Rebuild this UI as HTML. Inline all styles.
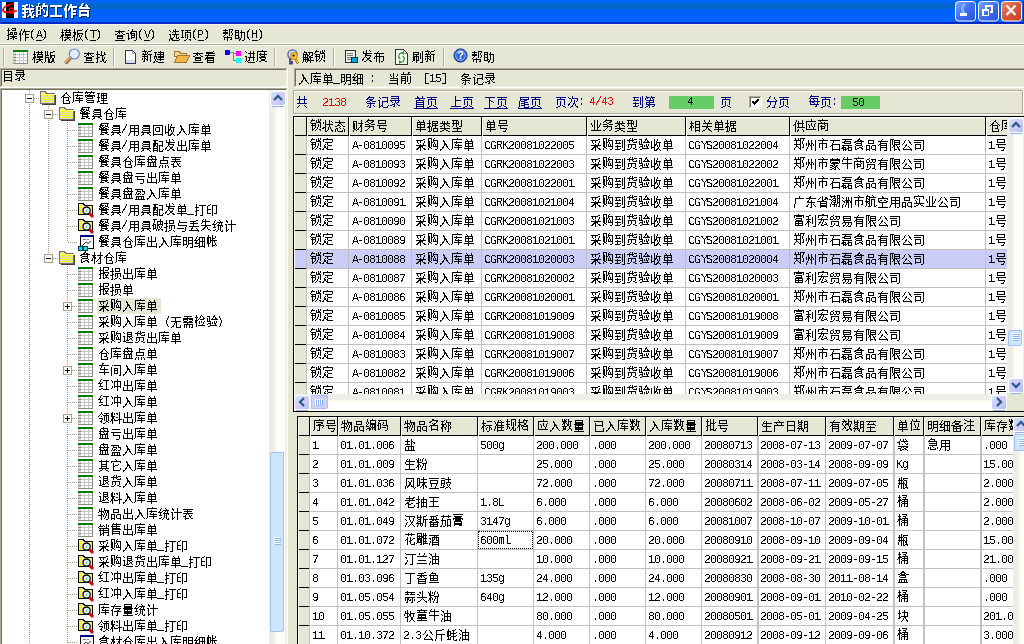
<!DOCTYPE html>
<html><head><meta charset="utf-8"><title>我的工作台</title>
<style>html,body{margin:0;padding:0;background:#ECE9D8;font-family:"Liberation Sans",sans-serif;overflow:hidden}
svg{display:block}</style></head><body>
<svg width="1024" height="644" viewBox="0 0 1024 644" shape-rendering="crispEdges">
<defs>
<linearGradient id="sbBtn" x1="0" y1="0" x2="1" y2="1">
 <stop offset="0" stop-color="#C8E6FE"/><stop offset="0.45" stop-color="#D2CDFB"/>
 <stop offset="0.6" stop-color="#CFCBF8"/><stop offset="1" stop-color="#A6C7EF"/>
</linearGradient>
<linearGradient id="sbThumbV" x1="0" y1="0" x2="1" y2="0">
 <stop offset="0" stop-color="#C9E3FD"/><stop offset="1" stop-color="#D1E9FE"/>
</linearGradient>
<linearGradient id="tbMin" x1="0" y1="0" x2="1" y2="1">
 <stop offset="0" stop-color="#7BA7FF"/><stop offset="0.5" stop-color="#3F6EF5"/><stop offset="1" stop-color="#2450E0"/>
</linearGradient>
<linearGradient id="tbClose" x1="0" y1="0" x2="1" y2="1">
 <stop offset="0" stop-color="#F08A6E"/><stop offset="0.5" stop-color="#D9563A"/><stop offset="1" stop-color="#C4401F"/>
</linearGradient>
<pattern id="chk" width="2" height="2" patternUnits="userSpaceOnUse">
 <rect width="2" height="2" fill="#FFFF00"/><rect width="1" height="1" fill="#D8D8C0"/><rect x="1" y="1" width="1" height="1" fill="#D8D8C0"/>
</pattern>
<clipPath id="cUp"><rect x="293" y="116" width="714" height="278"/></clipPath><clipPath id="cLo"><rect x="297" y="416" width="716" height="230"/></clipPath><path id="g0" d="M5 -12h2v1h-2zM10 -11h2v1h-2zM1 -11h6v1h-6zM1 -10h4v1h-4zM11 -10h2v1h-2zM8 -12h1v4h-1zM3 -9h2v1h-2zM1 -8h12v2h-12zM3 -6h2v2h-2zM8 -6h2v2h-2zM11 -5h2v1h-2zM6 -5h1v1h-1zM8 -4h4v1h-4zM1 -4h6v1h-6zM9 -3h2v1h-2zM1 -3h4v1h-4zM8 -2h3v1h-3zM12 -2h1v1h-1zM3 -2h2v2h-2zM12 -1h2v1h-2zM7 -1h4v1h-4zM1 0h4v1h-4zM6 0h2v1h-2zM10 0h3v2h-3zM2 1h3v1h-3z"/><path id="g1" d="M3 -13h2v1h-2zM8 -13h2v2h-2zM3 -12h1v2h-1zM7 -11h6v2h-6zM1 -10h5v1h-5zM5 -9h1v1h-1zM7 -9h1v1h-1zM5 -8h3v1h-3zM1 -9h2v3h-2zM5 -7h1v1h-1zM8 -7h1v1h-1zM12 -9h1v4h-1zM1 -6h5v1h-5zM8 -6h2v1h-2zM9 -5h1v2h-1zM5 -5h1v3h-1zM1 -5h2v3h-2zM11 -5h2v4h-2zM1 -2h5v1h-5zM8 -1h5v1h-5zM1 -1h2v2h-2zM9 0h3v1h-3z"/><path id="g2" d="M1 -11h12v2h-12zM6 -9h2v8h-2zM1 -1h12v2h-12z"/><path id="g3" d="M3 -12h2v2h-2zM7 -12h2v2h-2zM6 -10h8v2h-8zM2 -10h2v2h-2zM5 -8h2v2h-2zM8 -8h2v2h-2zM1 -8h3v3h-3zM5 -6h1v1h-1zM8 -6h5v2h-5zM8 -4h2v1h-2zM8 -3h5v2h-5zM2 -5h2v7h-2zM8 -1h2v3h-2z"/><path id="g4" d="M5 -13h2v1h-2zM9 -12h1v1h-1zM4 -12h2v2h-2zM8 -11h3v1h-3zM3 -10h2v1h-2zM9 -10h2v1h-2zM2 -9h10v1h-10zM2 -8h11v1h-11zM2 -6h10v2h-10zM10 -4h2v2h-2zM2 -4h2v2h-2zM2 -2h10v2h-10zM10 0h2v1h-2zM2 0h2v1h-2z"/><path id="g5" d="M6 -12h4v1h-4zM2 -12h1v2h-1zM5 -11h1v1h-1zM9 -11h1v1h-1zM6 -10h4v1h-4zM1 -10h3v1h-3zM8 -8h3v1h-3zM4 -8h3v1h-3zM2 -9h1v3h-1zM8 -7h1v1h-1zM4 -7h1v1h-1zM6 -7h1v1h-1zM10 -7h1v1h-1zM8 -6h3v1h-3zM2 -6h5v1h-5zM1 -5h2v1h-2zM7 -5h1v1h-1zM4 -4h7v1h-7zM6 -3h3v1h-3zM2 -4h1v3h-1zM9 -2h2v1h-2zM4 -2h2v1h-2zM7 -2h1v2h-1zM1 -1h2v1h-2z"/><path id="g6" d="M3 -11h1v2h-1zM6 -11h1v2h-1zM5 -9h7v1h-7zM2 -9h1v2h-1zM5 -8h1v1h-1zM7 -8h1v2h-1zM1 -7h2v2h-2zM4 -7h1v2h-1zM7 -6h4v1h-4zM7 -5h1v2h-1zM7 -3h4v1h-4zM2 -5h1v6h-1zM7 -2h1v3h-1z"/><path id="g7" d="M3 -9h1v1h-1zM2 -8h1v1h-1zM1 -7h2v1h-2zM1 -6h1v5h-1zM1 -1h2v1h-2zM2 0h1v1h-1zM3 1h1v1h-1z"/><path id="g8" d="M3 -8h1v1h-1zM2 -7h1v3h-1zM4 -7h1v3h-1zM1 -4h1v1h-1zM5 -4h1v1h-1zM1 -3h5v1h-5zM1 -2h1v1h-1zM5 -2h1v1h-1zM0 -1h1v1h-1zM6 -1h1v1h-1z"/><path id="g9" d="M1 -9h1v1h-1zM2 -8h1v1h-1zM2 -7h2v1h-2zM3 -6h1v5h-1zM2 -1h2v1h-2zM2 0h1v1h-1zM1 1h1v1h-1z"/><path id="g10" d="M9 -11h1v1h-1zM6 -11h1v1h-1zM4 -10h7v1h-7zM2 -11h1v3h-1zM9 -9h1v1h-1zM6 -9h1v1h-1zM5 -8h6v1h-6zM1 -8h3v1h-3zM5 -7h1v1h-1zM2 -7h1v1h-1zM10 -7h1v1h-1zM2 -6h2v1h-2zM5 -6h6v2h-6zM1 -5h3v1h-3zM1 -4h2v1h-2zM7 -4h1v1h-1zM0 -3h1v1h-1zM4 -3h7v1h-7zM7 -2h2v1h-2zM9 -1h1v1h-1zM5 -1h2v1h-2zM2 -3h1v4h-1zM4 0h2v1h-2zM10 0h1v1h-1z"/><path id="g11" d="M10 -11h1v1h-1zM5 -10h5v1h-5zM2 -11h1v3h-1zM5 -9h1v2h-1zM1 -8h3v1h-3zM5 -7h6v1h-6zM2 -7h2v2h-2zM5 -6h2v1h-2zM10 -6h1v1h-1zM1 -5h2v2h-2zM7 -5h1v2h-1zM9 -5h1v2h-1zM5 -5h1v3h-1zM0 -3h1v1h-1zM8 -3h1v2h-1zM9 -1h1v1h-1zM6 -1h2v1h-2zM2 -3h1v4h-1zM4 -2h1v3h-1zM6 0h1v1h-1zM10 0h1v1h-1z"/><path id="g12" d="M0 -8h7v1h-7zM3 -7h1v7h-1z"/><path id="g13" d="M5 -10h1v1h-1zM1 -9h10v1h-10zM7 -8h1v1h-1zM4 -8h2v1h-2zM5 -7h1v1h-1zM3 -7h1v1h-1zM8 -7h1v1h-1zM1 -6h2v1h-2zM9 -6h2v1h-2zM3 -5h6v2h-6zM3 -3h1v1h-1zM8 -3h1v1h-1zM3 -2h6v1h-6zM1 0h10v1h-10z"/><path id="g14" d="M6 -11h1v2h-1zM2 -10h1v1h-1zM5 -9h6v1h-6zM4 -8h2v1h-2zM4 -7h5v1h-5zM0 -7h3v1h-3zM5 -6h1v1h-1zM8 -6h1v1h-1zM5 -5h4v1h-4zM5 -4h1v1h-1zM8 -4h1v1h-1zM2 -6h1v4h-1zM5 -3h4v1h-4zM5 -2h1v1h-1zM2 -2h2v1h-2zM10 -8h1v8h-1zM2 -1h1v1h-1zM8 0h2v1h-2z"/><path id="g15" d="M0 -8h1v1h-1zM6 -8h1v1h-1zM1 -7h1v3h-1zM5 -7h1v3h-1zM2 -4h1v3h-1zM4 -4h1v3h-1zM3 -1h1v1h-1z"/><path id="g16" d="M7 -11h1v2h-1zM1 -10h1v1h-1zM5 -10h1v1h-1zM5 -9h6v1h-6zM2 -9h1v1h-1zM4 -8h1v1h-1zM7 -8h1v2h-1zM1 -6h2v1h-2zM4 -6h7v1h-7zM6 -5h1v2h-1zM8 -5h1v3h-1zM2 -5h1v3h-1zM5 -3h1v1h-1zM10 -3h1v1h-1zM8 -2h3v1h-3zM2 -2h3v1h-3zM3 -1h2v1h-2zM11 -1h1v1h-1zM1 -1h1v2h-1zM4 0h7v1h-7z"/><path id="g17" d="M5 -10h6v1h-6zM1 -10h3v1h-3zM7 -9h1v1h-1zM5 -8h6v1h-6zM2 -9h1v6h-1zM5 -7h1v5h-1zM10 -7h1v5h-1zM1 -3h3v1h-3zM7 -6h1v5h-1zM9 -1h2v1h-2zM6 -1h1v1h-1zM4 0h2v1h-2zM10 0h1v1h-1z"/><path id="g18" d="M0 -8h4v1h-4zM0 -7h1v3h-1zM4 -7h1v3h-1zM0 -4h4v1h-4zM0 -3h1v3h-1z"/><path id="g19" d="M3 -11h1v1h-1zM7 -11h4v1h-4zM1 -10h5v1h-5zM10 -10h1v1h-1zM3 -9h1v1h-1zM9 -9h1v2h-1zM1 -8h5v2h-5zM10 -7h1v2h-1zM3 -6h1v1h-1zM7 -10h1v6h-1zM9 -5h1v1h-1zM2 -5h1v1h-1zM1 -4h1v1h-1zM5 -4h1v1h-1zM2 -3h8v1h-8zM9 -2h1v1h-1zM2 -2h1v2h-1zM8 -1h2v1h-2zM5 -2h1v3h-1z"/><path id="g20" d="M1 -10h4v1h-4zM7 -10h1v2h-1zM1 -9h1v1h-1zM4 -9h1v1h-1zM6 -8h5v1h-5zM1 -8h4v1h-4zM1 -7h1v2h-1zM4 -7h1v2h-1zM1 -5h4v1h-4zM4 -4h1v1h-1zM7 -7h1v5h-1zM1 -4h1v2h-1zM4 -3h2v1h-2zM1 -2h4v1h-4zM6 -2h1v1h-1zM10 -7h1v7h-1zM5 -1h2v1h-2zM5 0h1v1h-1zM8 0h2v1h-2z"/><path id="g21" d="M0 -8h1v3h-1zM4 -8h1v3h-1zM0 -5h5v1h-5zM0 -4h1v4h-1zM4 -4h1v4h-1z"/><path id="g22" d="M9 -11h2v1h-2zM6 -10h3v1h-3zM1 -11h1v4h-1zM3 -11h1v4h-1zM6 -9h1v2h-1zM6 -7h5v1h-5zM1 -7h4v1h-4zM1 -6h1v1h-1zM10 -6h1v2h-1zM6 -6h2v2h-2zM1 -5h4v1h-4zM4 -4h1v1h-1zM6 -4h1v1h-1zM8 -4h2v3h-2zM1 -4h1v4h-1zM4 -3h2v3h-2zM7 -1h3v1h-3zM4 0h4v1h-4zM0 0h1v1h-1zM10 0h1v1h-1z"/><path id="g23" d="M2 -11h1v3h-1zM9 -10h1v2h-1zM6 -11h1v4h-1zM9 -8h2v1h-2zM1 -8h4v1h-4zM5 -7h4v1h-4zM2 -7h1v2h-1zM2 -5h3v1h-3zM7 -6h1v3h-1zM9 -5h1v2h-1zM1 -4h2v1h-2zM7 -3h2v2h-2zM11 -2h1v1h-1zM2 -3h1v3h-1zM5 -1h2v1h-2zM8 -1h1v1h-1zM10 -1h1v1h-1zM1 0h2v1h-2zM9 0h2v1h-2z"/><path id="g24" d="M3 -12h1v1h-1zM10 -12h1v1h-1zM7 -11h3v1h-3zM1 -11h5v1h-5zM4 -10h1v2h-1zM6 -10h1v2h-1zM2 -9h1v1h-1zM1 -8h5v1h-5zM7 -8h4v1h-4zM3 -7h1v1h-1zM6 -7h1v1h-1zM1 -6h6v1h-6zM3 -5h1v1h-1zM6 -5h1v2h-1zM3 -4h2v1h-2zM1 -4h1v2h-1zM5 -3h2v1h-2zM3 -3h1v2h-1zM6 -2h1v1h-1zM9 -7h1v7h-1zM2 -1h2v1h-2z"/><path id="g25" d="M7 -11h1v1h-1zM5 -10h6v1h-6zM1 -10h3v1h-3zM7 -9h1v1h-1zM10 -9h1v1h-1zM4 -8h7v1h-7zM2 -9h1v3h-1zM7 -7h1v1h-1zM10 -7h1v1h-1zM1 -6h3v1h-3zM5 -6h6v2h-6zM1 -5h1v2h-1zM3 -5h1v2h-1zM7 -4h1v1h-1zM4 -3h7v1h-7zM2 -3h1v2h-1zM7 -2h1v1h-1zM1 -1h1v1h-1zM3 -1h2v1h-2zM5 0h6v1h-6zM0 0h2v1h-2z"/><path id="g26" d="M9 -11h1v1h-1zM2 -10h7v1h-7zM2 -9h9v1h-9zM4 -8h1v1h-1zM1 -7h10v1h-10zM3 -6h1v1h-1zM2 -5h8v1h-8zM1 -4h9v1h-9zM1 -3h1v1h-1zM3 -3h1v1h-1zM9 -3h1v1h-1zM3 -2h7v1h-7zM3 -1h1v1h-1zM9 -1h1v1h-1zM3 0h7v1h-7z"/><path id="g27" d="M1 -11h1v1h-1zM9 -11h1v2h-1zM6 -11h1v2h-1zM2 -10h1v1h-1zM4 -9h7v1h-7zM9 -8h1v3h-1zM6 -8h1v3h-1zM1 -6h2v1h-2zM4 -5h7v1h-7zM5 -4h1v2h-1zM2 -5h1v4h-1zM9 -4h1v3h-1zM4 -2h2v1h-2zM1 -1h1v1h-1zM3 -1h1v1h-1zM4 0h7v1h-7z"/><path id="g28" d="M6 -12h1v1h-1zM1 -11h10v1h-10zM8 -10h1v2h-1zM4 -9h1v1h-1zM3 -8h8v1h-8zM4 -7h1v1h-1zM8 -7h1v1h-1zM5 -6h4v1h-4zM3 -5h7v1h-7zM9 -4h1v1h-1zM4 -4h1v1h-1zM1 -10h1v9h-1zM5 -3h4v2h-4zM3 -1h2v1h-2zM0 -1h1v1h-1zM9 -1h2v1h-2z"/><path id="g29" d="M2 -11h1v1h-1zM6 -10h5v1h-5zM2 -10h3v1h-3zM1 -9h1v1h-1zM4 -9h1v1h-1zM7 -9h1v2h-1zM10 -9h1v2h-1zM1 -8h5v1h-5zM5 -7h2v1h-2zM9 -7h2v1h-2zM1 -7h1v2h-1zM3 -7h1v2h-1zM5 -6h1v1h-1zM7 -6h2v1h-2zM1 -5h5v1h-5zM7 -5h4v1h-4zM1 -4h1v1h-1zM3 -4h1v1h-1zM5 -4h2v1h-2zM8 -4h1v2h-1zM1 -3h6v1h-6zM5 -2h7v1h-7zM1 -2h1v2h-1zM3 -2h1v2h-1zM5 -1h1v1h-1zM8 -1h1v2h-1zM0 0h1v1h-1zM4 0h1v1h-1z"/><path id="g30" d="M2 -12h1v1h-1zM8 -12h1v2h-1zM10 -12h1v2h-1zM1 -11h4v1h-4zM6 -11h1v2h-1zM1 -10h1v1h-1zM8 -10h2v1h-2zM0 -9h1v1h-1zM6 -9h5v1h-5zM1 -8h5v1h-5zM5 -7h1v1h-1zM2 -7h1v1h-1zM1 -6h5v1h-5zM8 -7h1v3h-1zM10 -8h1v5h-1zM5 -5h1v2h-1zM2 -5h1v3h-1zM7 -4h1v2h-1zM4 -3h1v1h-1zM6 -2h1v1h-1zM9 -2h2v1h-2zM2 -2h2v1h-2zM5 -1h1v1h-1zM2 -1h1v1h-1zM10 -1h1v1h-1z"/><path id="g31" d="M8 -12h1v1h-1zM9 -11h1v1h-1zM5 -12h1v3h-1zM2 -11h1v2h-1zM2 -9h9v1h-9zM4 -8h2v1h-2zM4 -7h6v1h-6zM9 -6h1v1h-1zM4 -6h1v1h-1zM5 -5h1v1h-1zM3 -5h1v1h-1zM8 -5h1v1h-1zM6 -4h3v1h-3zM2 -4h1v1h-1zM1 -3h2v1h-2zM6 -3h2v1h-2zM1 -2h1v1h-1zM5 -2h1v1h-1zM8 -2h2v1h-2zM3 -1h2v1h-2zM9 -1h2v1h-2z"/><path id="g32" d="M5 -11h1v1h-1zM4 -10h1v1h-1zM1 -9h10v1h-10zM3 -8h1v2h-1zM6 -8h1v2h-1zM2 -6h9v1h-9zM1 -5h1v2h-1zM10 -5h1v4h-1zM3 -5h1v5h-1zM8 -1h2v1h-2zM6 -5h1v6h-1z"/><path id="g33" d="M1 -10h6v1h-6zM1 -9h1v1h-1zM6 -9h1v1h-1zM1 -8h6v1h-6zM1 -7h1v1h-1zM4 -7h1v1h-1zM1 -6h6v1h-6zM8 -9h1v6h-1zM4 -5h1v3h-1zM6 -5h1v3h-1zM1 -5h2v4h-2zM4 -2h3v1h-3zM10 -11h1v11h-1zM0 -1h1v1h-1zM4 -1h1v2h-1zM8 0h3v1h-3z"/><path id="g34" d="M2 -10h8v1h-8zM9 -9h1v2h-1zM2 -9h1v2h-1zM2 -7h8v1h-8zM9 -6h1v2h-1zM2 -6h1v2h-1zM2 -4h8v1h-8zM9 -3h1v2h-1zM2 -3h1v2h-1zM2 -1h8v1h-8zM9 0h1v1h-1zM2 0h1v1h-1z"/><path id="g35" d="M2 -11h8v1h-8zM9 -10h1v1h-1zM2 -9h8v1h-8zM9 -8h1v1h-1zM1 -7h10v1h-10zM9 -6h1v1h-1zM2 -6h1v1h-1zM6 -6h1v2h-1zM3 -5h1v1h-1zM8 -5h2v1h-2zM5 -4h1v1h-1zM7 -4h1v1h-1zM3 -3h3v1h-3zM8 -3h1v1h-1zM5 -2h1v1h-1zM1 -2h2v1h-2zM9 -2h2v1h-2zM4 -1h2v1h-2z"/><path id="g36" d="M6 -11h1v1h-1zM5 -10h2v1h-2zM7 -9h1v1h-1zM4 -9h1v1h-1zM3 -8h2v1h-2zM8 -8h1v1h-1zM9 -7h1v1h-1zM2 -7h2v1h-2zM1 -6h1v1h-1zM3 -6h6v1h-6zM10 -6h1v1h-1zM8 -5h1v2h-1zM6 -3h3v1h-3zM3 -5h1v5h-1zM9 -2h1v2h-1zM3 0h7v1h-7z"/><path id="g37" d="M6 -12h1v1h-1zM1 -11h10v1h-10zM5 -9h1v1h-1zM3 -8h8v1h-8zM5 -7h1v1h-1zM7 -6h1v1h-1zM4 -6h1v1h-1zM4 -5h7v1h-7zM7 -4h1v1h-1zM3 -3h8v1h-8zM1 -10h1v9h-1zM7 -2h1v2h-1zM0 -1h1v1h-1z"/><path id="g38" d="M7 -12h1v1h-1zM2 -12h1v1h-1zM1 -11h10v1h-10zM1 -10h1v1h-1zM3 -10h1v1h-1zM9 -10h1v1h-1zM6 -10h1v1h-1zM5 -9h1v1h-1zM1 -8h10v1h-10zM1 -7h1v1h-1zM3 -7h6v1h-6zM10 -7h1v1h-1zM2 -6h1v1h-1zM8 -6h1v1h-1zM3 -5h6v1h-6zM2 -4h1v1h-1zM3 -3h7v1h-7zM9 -2h1v1h-1zM2 -2h1v1h-1zM3 -1h7v1h-7z"/><path id="g39" d="M5 -10h6v1h-6zM1 -10h3v1h-3zM5 -9h1v1h-1zM7 -9h1v1h-1zM10 -9h1v1h-1zM5 -8h6v1h-6zM2 -9h1v3h-1zM5 -7h1v2h-1zM7 -7h1v2h-1zM10 -7h1v2h-1zM1 -6h3v1h-3zM5 -5h6v1h-6zM7 -4h1v1h-1zM2 -5h1v3h-1zM5 -3h6v1h-6zM1 -2h3v1h-3zM7 -2h1v2h-1zM1 -1h1v1h-1zM4 0h8v1h-8z"/><path id="g40" d="M3 -12h8v1h-8zM2 -11h2v1h-2zM9 -11h1v2h-1zM2 -10h4v1h-4zM7 -10h1v1h-1zM1 -9h2v1h-2zM4 -9h1v1h-1zM7 -9h3v1h-3zM5 -8h2v1h-2zM2 -8h2v1h-2zM10 -8h1v1h-1zM1 -7h1v1h-1zM3 -7h3v1h-3zM7 -7h2v1h-2zM1 -6h10v1h-10zM3 -5h6v1h-6zM3 -4h1v1h-1zM8 -4h1v1h-1zM3 -3h7v1h-7zM3 -2h1v1h-1zM7 -2h2v1h-2zM2 -1h4v1h-4zM9 -1h2v1h-2z"/><path id="g41" d="M3 -10h7v2h-7zM9 -8h1v1h-1zM2 -8h1v1h-1zM3 -7h7v1h-7zM9 -6h1v1h-1zM2 -6h1v1h-1zM3 -5h7v1h-7zM9 -4h1v1h-1zM2 -4h1v1h-1zM1 -3h10v1h-10zM3 -2h1v1h-1zM7 -2h2v1h-2zM9 -1h1v1h-1zM2 -1h2v1h-2zM1 0h1v1h-1zM10 0h1v1h-1z"/><path id="g42" d="M4 -9h1v2h-1zM3 -7h1v2h-1zM2 -5h1v1h-1zM1 -4h2v1h-2zM1 -3h1v1h-1zM0 -2h1v2h-1z"/><path id="g43" d="M2 -10h9v1h-9zM2 -9h1v2h-1zM6 -9h1v2h-1zM10 -9h1v2h-1zM2 -7h9v1h-9zM2 -6h1v2h-1zM6 -6h1v2h-1zM10 -6h1v2h-1zM2 -4h9v1h-9zM2 -3h1v1h-1zM10 -3h1v3h-1zM1 -2h1v2h-1zM6 -3h1v4h-1zM0 0h1v1h-1zM8 0h2v1h-2z"/><path id="g44" d="M1 -10h10v1h-10zM4 -8h4v1h-4zM3 -7h1v3h-1zM7 -7h1v3h-1zM4 -4h4v1h-4zM1 -9h1v8h-1zM10 -9h1v8h-1zM1 -1h10v1h-10zM1 0h1v1h-1zM10 0h1v1h-1z"/><path id="g45" d="M7 -11h1v2h-1zM6 -9h1v1h-1zM6 -8h5v1h-5zM4 -11h1v5h-1zM6 -7h1v1h-1zM4 -6h3v1h-3zM4 -5h2v1h-2zM1 -9h1v6h-1zM9 -7h1v4h-1zM7 -5h1v2h-1zM4 -4h1v1h-1zM1 -3h4v1h-4zM8 -3h1v1h-1zM1 -2h1v1h-1zM7 -2h2v1h-2zM4 -2h1v2h-1zM9 -1h1v1h-1zM6 -1h2v1h-2zM10 0h1v1h-1zM4 0h3v1h-3z"/><path id="g46" d="M4 -10h1v1h-1zM4 -9h2v1h-2zM5 -8h1v1h-1zM5 -7h2v1h-2zM5 -6h3v1h-3zM5 -5h1v1h-1zM7 -5h1v1h-1zM4 -4h1v1h-1zM7 -4h2v1h-2zM3 -3h2v1h-2zM8 -3h1v1h-1zM3 -2h1v1h-1zM9 -2h1v1h-1zM1 -1h2v1h-2zM10 -1h1v1h-1zM1 0h1v1h-1z"/><path id="g47" d="M3 -11h1v1h-1zM8 -11h1v2h-1zM4 -10h1v1h-1zM2 -9h8v1h-8zM5 -8h1v1h-1zM9 -8h1v1h-1zM2 -8h1v1h-1zM2 -7h8v1h-8zM5 -6h1v2h-1zM9 -6h1v2h-1zM2 -6h1v2h-1zM2 -4h8v1h-8zM5 -3h1v1h-1zM1 -2h10v1h-10zM5 -1h1v2h-1z"/><path id="g48" d="M1 -11h5v1h-5zM7 -10h4v1h-4zM2 -10h2v2h-2zM1 -8h5v1h-5zM10 -9h1v3h-1zM5 -7h1v2h-1zM1 -7h3v2h-3zM7 -6h4v1h-4zM1 -5h2v1h-2zM4 -5h2v1h-2zM10 -5h1v1h-1zM1 -4h1v1h-1zM5 -4h1v1h-1zM1 -3h5v1h-5zM1 -2h1v1h-1zM5 -2h1v1h-1zM11 -2h1v1h-1zM7 -5h1v5h-1zM1 -1h5v1h-5zM10 -1h1v1h-1zM1 0h1v1h-1zM5 0h1v1h-1zM7 0h4v1h-4z"/><path id="g49" d="M5 -11h1v5h-1zM9 -10h1v4h-1zM2 -10h1v4h-1zM2 -6h8v1h-8zM5 -5h1v4h-1zM1 -4h1v3h-1zM10 -4h1v3h-1zM1 -1h10v1h-10zM10 0h1v1h-1z"/><path id="g50" d="M5 -12h1v1h-1zM3 -11h7v1h-7zM5 -10h1v1h-1zM9 -10h1v2h-1zM2 -10h1v2h-1zM6 -9h1v1h-1zM1 -8h10v1h-10zM5 -7h1v1h-1zM9 -7h1v1h-1zM2 -7h1v1h-1zM1 -6h2v1h-2zM6 -6h1v1h-1zM8 -6h2v1h-2zM2 -5h8v1h-8zM9 -4h1v3h-1zM7 -4h1v3h-1zM2 -4h1v3h-1zM4 -4h1v3h-1zM1 -1h10v1h-10z"/><path id="g51" d="M5 -11h1v1h-1zM5 -10h6v1h-6zM5 -9h1v2h-1zM2 -7h8v1h-8zM9 -6h1v2h-1zM2 -6h1v2h-1zM2 -4h8v1h-8zM9 -2h1v1h-1zM2 -2h1v1h-1zM7 -2h1v3h-1zM4 -2h1v3h-1zM1 -1h1v2h-1zM10 -1h1v2h-1z"/><path id="g52" d="M1 -10h10v1h-10zM5 -9h1v1h-1zM2 -8h8v1h-8zM5 -7h1v1h-1zM1 -6h10v1h-10zM4 -5h1v1h-1zM6 -5h1v1h-1zM3 -4h1v1h-1zM7 -4h1v1h-1zM9 -4h1v1h-1zM1 -3h3v1h-3zM7 -3h2v1h-2zM3 -2h1v1h-1zM8 -2h1v1h-1zM9 -1h2v1h-2zM3 -1h4v1h-4zM3 0h1v1h-1z"/><path id="g53" d="M2 -10h8v1h-8zM1 -7h10v1h-10zM3 -6h1v2h-1zM3 -4h7v1h-7zM9 -3h1v3h-1zM6 0h3v1h-3z"/><path id="g54" d="M1 -10h8v1h-8zM3 -9h1v1h-1zM8 -9h1v1h-1zM8 -8h3v1h-3zM3 -8h4v1h-4zM6 -7h1v1h-1zM2 -7h1v2h-1zM10 -7h1v2h-1zM4 -6h2v1h-2zM1 -5h1v1h-1zM3 -5h2v1h-2zM6 -5h1v1h-1zM8 -5h2v1h-2zM2 -3h8v1h-8zM9 -2h1v2h-1zM7 -2h1v2h-1zM2 -2h1v2h-1zM4 -2h1v2h-1zM1 0h10v1h-10z"/><path id="g55" d="M-1 1h7v1h-7z"/><path id="g56" d="M5 -10h7v1h-7zM2 -11h1v3h-1zM1 -8h4v1h-4zM2 -7h1v2h-1zM2 -5h3v1h-3zM1 -4h2v1h-2zM8 -9h1v9h-1zM2 -3h1v3h-1zM1 0h2v1h-2zM6 0h3v1h-3z"/><path id="g57" d="M4 -11h1v1h-1zM6 -10h5v1h-5zM2 -10h2v1h-2zM1 -9h1v3h-1zM1 -6h4v1h-4zM10 -9h1v7h-1zM1 -5h1v3h-1zM8 -2h3v1h-3zM1 -2h4v1h-4zM6 -9h1v10h-1z"/><path id="g58" d="M1 -12h4v1h-4zM8 -12h1v2h-1zM5 -10h6v1h-6zM2 -11h1v3h-1zM5 -9h1v2h-1zM8 -9h1v2h-1zM10 -9h1v2h-1zM1 -8h1v1h-1zM5 -7h6v1h-6zM1 -7h3v1h-3zM5 -6h2v1h-2zM0 -6h2v1h-2zM10 -6h1v1h-1zM3 -6h1v3h-1zM9 -5h1v2h-1zM1 -5h1v2h-1zM7 -5h1v2h-1zM5 -5h1v3h-1zM1 -3h3v1h-3zM8 -3h1v1h-1zM1 -2h1v1h-1zM9 -2h2v1h-2zM6 -2h2v1h-2zM4 -2h1v2h-1zM6 -1h1v1h-1zM10 -1h1v1h-1z"/><path id="g59" d="M5 -11h5v1h-5zM2 -11h1v3h-1zM5 -10h1v2h-1zM9 -10h1v2h-1zM5 -8h5v1h-5zM0 -8h4v1h-4zM2 -7h1v2h-1zM5 -6h6v1h-6zM2 -5h2v1h-2zM0 -4h3v1h-3zM5 -5h1v3h-1zM10 -5h1v3h-1zM7 -5h1v4h-1zM2 -3h1v3h-1zM9 -1h1v1h-1zM5 -1h2v1h-2zM1 0h2v1h-2zM4 0h1v1h-1zM10 0h1v1h-1z"/><path id="g60" d="M3 -11h1v2h-1zM3 -9h8v1h-8zM2 -8h1v2h-1zM2 -6h9v1h-9zM10 -5h1v1h-1zM1 -3h7v1h-7zM9 -4h1v4h-1zM6 0h3v1h-3z"/><path id="g61" d="M8 -11h2v1h-2zM2 -10h6v1h-6zM5 -9h1v1h-1zM2 -8h8v1h-8zM5 -7h1v2h-1zM1 -5h10v1h-10zM4 -4h1v1h-1zM3 -3h2v1h-2zM8 -3h1v1h-1zM3 -2h1v1h-1zM9 -2h1v1h-1zM1 -1h10v1h-10zM10 0h1v1h-1z"/><path id="g62" d="M3 -12h1v1h-1zM5 -12h1v2h-1zM2 -11h1v1h-1zM2 -10h8v1h-8zM2 -9h1v1h-1zM1 -8h1v1h-1zM5 -9h1v3h-1zM1 -6h10v1h-10zM5 -5h2v1h-2zM4 -4h2v1h-2zM7 -4h1v2h-1zM3 -3h2v1h-2zM2 -2h2v1h-2zM8 -2h2v1h-2zM1 -1h1v1h-1zM10 -1h1v1h-1z"/><path id="g63" d="M3 -11h1v1h-1zM7 -11h1v1h-1zM8 -10h1v1h-1zM2 -10h1v2h-1zM5 -9h6v1h-6zM1 -8h1v1h-1zM7 -8h1v1h-1zM4 -8h1v1h-1zM9 -8h1v2h-1zM6 -7h1v1h-1zM0 -7h4v1h-4zM5 -6h6v1h-6zM2 -6h1v2h-1zM10 -5h1v1h-1zM1 -4h3v1h-3zM6 -5h1v4h-1zM3 -2h1v1h-1zM8 -5h1v5h-1zM5 -1h1v1h-1zM1 -1h2v1h-2zM10 -1h1v1h-1zM9 0h2v1h-2zM4 0h1v1h-1z"/><path id="g64" d="M2 -11h1v1h-1zM2 -10h2v1h-2zM3 -9h1v1h-1zM7 -11h1v4h-1zM1 -7h2v1h-2zM4 -7h8v1h-8zM2 -6h1v5h-1zM4 -2h1v1h-1zM2 -1h2v1h-2zM7 -6h1v7h-1zM2 0h1v1h-1z"/><path id="g65" d="M6 -10h5v1h-5zM1 -10h4v1h-4zM1 -9h1v2h-1zM4 -9h1v2h-1zM6 -9h1v2h-1zM10 -9h1v2h-1zM6 -7h5v1h-5zM1 -7h4v1h-4zM6 -6h1v2h-1zM10 -6h1v2h-1zM1 -6h1v3h-1zM4 -6h1v3h-1zM6 -4h5v1h-5zM1 -3h4v1h-4zM6 -3h1v1h-1zM1 -2h1v1h-1zM10 -3h1v3h-1zM5 -2h1v2h-1zM8 0h3v1h-3zM4 0h1v1h-1z"/><path id="g66" d="M3 -11h1v1h-1zM5 -10h6v1h-6zM2 -10h1v2h-1zM5 -9h1v1h-1zM1 -8h1v1h-1zM4 -8h2v1h-2zM8 -9h1v3h-1zM10 -9h1v3h-1zM5 -7h1v1h-1zM0 -7h4v1h-4zM5 -6h6v1h-6zM2 -6h1v1h-1zM5 -5h1v1h-1zM1 -5h2v1h-2zM1 -4h5v1h-5zM5 -3h1v1h-1zM8 -5h1v4h-1zM10 -5h1v4h-1zM4 -2h2v1h-2zM5 -1h6v1h-6zM0 -1h4v1h-4zM5 0h1v1h-1zM10 0h1v1h-1z"/><path id="g67" d="M2 -12h1v2h-1zM6 -12h1v3h-1zM9 -11h1v2h-1zM1 -10h4v1h-4zM6 -9h3v1h-3zM4 -9h1v2h-1zM6 -8h1v1h-1zM4 -7h7v1h-7zM1 -9h2v5h-2zM8 -6h1v2h-1zM4 -6h1v2h-1zM1 -4h3v1h-3zM6 -6h1v4h-1zM9 -4h1v2h-1zM6 -2h3v1h-3zM10 -2h1v1h-1zM2 -3h1v3h-1zM6 -1h1v1h-1z"/><path id="g68" d="M6 -12h1v1h-1zM5 -11h2v1h-2zM7 -10h2v1h-2zM4 -10h2v1h-2zM2 -9h9v1h-9zM1 -8h2v1h-2zM8 -8h1v1h-1zM3 -7h6v1h-6zM2 -6h1v1h-1zM8 -6h1v1h-1zM3 -5h6v1h-6zM9 -4h1v1h-1zM6 -3h3v1h-3zM2 -4h1v3h-1zM4 -2h2v1h-2zM8 -2h2v1h-2zM9 -1h1v1h-1zM2 -1h2v1h-2z"/><path id="g69" d="M3 -11h1v3h-1zM9 -11h1v3h-1zM1 -8h4v1h-4zM6 -8h6v1h-6zM9 -7h1v1h-1zM2 -7h2v1h-2zM2 -6h3v1h-3zM8 -6h2v2h-2zM3 -5h2v1h-2zM1 -5h1v2h-1zM7 -4h1v1h-1zM0 -3h2v1h-2zM6 -3h1v1h-1zM5 -2h1v1h-1zM9 -4h1v4h-1zM3 -4h1v5h-1zM7 0h3v1h-3z"/><path id="g70" d="M5 -12h6v1h-6zM2 -12h1v3h-1zM5 -11h1v2h-1zM10 -11h1v2h-1zM7 -9h3v1h-3zM1 -9h5v1h-5zM5 -8h1v1h-1zM2 -8h1v2h-1zM5 -7h6v1h-6zM2 -6h5v1h-5zM10 -6h1v1h-1zM1 -5h2v1h-2zM7 -5h1v1h-1zM9 -5h1v1h-1zM7 -4h3v1h-3zM8 -3h1v1h-1zM5 -5h1v4h-1zM2 -4h1v3h-1zM7 -2h3v1h-3zM1 -1h2v1h-2zM5 -1h2v1h-2zM10 -1h1v1h-1z"/><path id="g71" d="M8 -11h2v1h-2zM1 -10h7v1h-7zM5 -9h1v2h-1zM9 -9h1v2h-1zM2 -9h1v2h-1zM3 -7h1v1h-1zM8 -7h1v2h-1zM5 -6h1v1h-1zM1 -5h10v1h-10zM4 -4h4v1h-4zM7 -3h1v1h-1zM3 -3h3v1h-3zM2 -2h2v1h-2zM8 -2h2v1h-2zM1 -1h2v1h-2zM9 -1h2v1h-2zM5 -2h1v3h-1z"/><path id="g72" d="M7 -12h1v1h-1zM1 -12h4v1h-4zM6 -11h1v1h-1zM1 -11h1v2h-1zM6 -10h5v1h-5zM4 -11h1v3h-1zM6 -9h1v1h-1zM4 -8h2v1h-2zM7 -8h1v2h-1zM10 -9h1v5h-1zM8 -6h1v2h-1zM6 -6h1v2h-1zM1 -9h2v6h-2zM4 -7h1v4h-1zM6 -4h5v1h-5zM2 -3h2v1h-2zM10 -3h1v2h-1zM4 -2h1v1h-1zM1 -2h1v2h-1zM8 -1h2v1h-2z"/><path id="g73" d="M10 -11h1v2h-1zM9 -9h1v2h-1zM8 -7h1v4h-1zM9 -3h1v2h-1zM10 -1h1v1h-1z"/><path id="g74" d="M1 -10h10v1h-10zM5 -9h1v3h-1zM1 -6h10v1h-10zM5 -5h2v1h-2zM4 -4h1v2h-1zM3 -2h1v1h-1zM6 -4h1v4h-1zM10 -2h1v2h-1zM2 -1h2v1h-2zM1 0h1v1h-1zM6 0h5v1h-5z"/><path id="g75" d="M2 -11h8v1h-8zM5 -10h1v1h-1zM1 -9h10v1h-10zM1 -8h5v1h-5zM7 -8h4v1h-4zM1 -7h1v1h-1zM5 -7h1v1h-1zM10 -7h1v1h-1zM7 -6h3v1h-3zM2 -6h3v1h-3zM1 -5h10v1h-10zM5 -4h1v1h-1zM2 -3h9v1h-9zM10 -2h1v2h-1zM7 -2h1v3h-1zM2 -2h1v3h-1zM4 -2h1v3h-1zM9 0h2v1h-2z"/><path id="g76" d="M7 -12h1v1h-1zM2 -12h1v2h-1zM8 -11h1v1h-1zM6 -11h1v2h-1zM9 -10h1v1h-1zM1 -10h3v1h-3zM9 -9h2v1h-2zM5 -9h1v1h-1zM2 -9h1v2h-1zM6 -8h4v1h-4zM4 -8h1v1h-1zM1 -7h3v1h-3zM10 -6h1v1h-1zM1 -6h2v2h-2zM7 -6h1v2h-1zM5 -6h1v3h-1zM9 -5h1v2h-1zM8 -3h1v1h-1zM4 -2h7v1h-7zM2 -4h1v4h-1z"/><path id="g77" d="M8 -12h1v1h-1zM1 -11h3v1h-3zM7 -11h2v1h-2zM7 -10h1v1h-1zM9 -10h1v1h-1zM9 -9h2v1h-2zM6 -9h1v1h-1zM5 -8h7v1h-7zM3 -10h1v4h-1zM1 -9h1v3h-1zM1 -6h4v1h-4zM8 -6h1v2h-1zM10 -6h1v2h-1zM4 -5h1v1h-1zM6 -5h1v2h-1zM8 -4h2v1h-2zM2 -4h3v1h-3zM1 -3h1v1h-1zM9 -3h1v1h-1zM4 -3h1v1h-1zM4 -2h7v1h-7zM2 -1h2v1h-2z"/><path id="g78" d="M1 -11h1v2h-1zM2 -9h1v2h-1zM3 -7h1v3h-1zM2 -4h1v3h-1zM1 -1h1v1h-1z"/><path id="g79" d="M1 -11h1v1h-1zM5 -11h5v1h-5zM5 -10h1v1h-1zM9 -10h1v1h-1zM2 -10h1v1h-1zM5 -9h5v1h-5zM5 -8h1v1h-1zM9 -8h1v1h-1zM1 -7h2v1h-2zM5 -7h5v1h-5zM7 -6h1v1h-1zM10 -6h1v1h-1zM8 -5h2v1h-2zM5 -6h1v3h-1zM7 -4h1v1h-1zM9 -4h1v1h-1zM2 -6h1v4h-1zM10 -3h1v1h-1zM4 -3h3v1h-3zM1 -2h3v1h-3zM4 -1h7v1h-7z"/><path id="g80" d="M4 -12h1v1h-1zM6 -12h1v2h-1zM8 -11h3v1h-3zM3 -11h1v1h-1zM1 -10h7v1h-7zM6 -9h1v1h-1zM10 -9h1v1h-1zM3 -9h1v2h-1zM7 -8h4v1h-4zM2 -6h8v1h-8zM5 -5h1v3h-1zM9 -5h1v3h-1zM2 -5h1v3h-1zM4 -2h1v1h-1zM7 -2h2v1h-2zM1 -1h3v1h-3zM9 -1h2v1h-2z"/><path id="g81" d="M4 -12h2v1h-2zM4 -11h1v1h-1zM1 -10h10v1h-10zM3 -9h1v2h-1zM6 -8h1v2h-1zM2 -7h1v1h-1zM2 -6h8v1h-8zM6 -5h1v2h-1zM1 -3h10v1h-10zM6 -2h1v2h-1z"/><path id="g82" d="M2 -10h1v1h-1zM4 -10h7v1h-7zM4 -7h4v1h-4zM7 -6h1v1h-1zM4 -6h1v1h-1zM4 -5h4v1h-4zM7 -4h1v2h-1zM4 -4h1v2h-1zM4 -2h4v1h-4zM10 -9h1v9h-1zM1 -8h1v9h-1zM9 0h2v1h-2z"/><path id="g83" d="M3 -12h1v1h-1zM5 -11h6v1h-6zM2 -11h1v2h-1zM1 -9h1v1h-1zM4 -9h1v1h-1zM0 -8h4v1h-4zM2 -7h1v2h-1zM1 -5h4v1h-4zM8 -10h1v8h-1zM3 -3h2v1h-2zM5 -2h6v1h-6zM1 -2h2v1h-2z"/><path id="g84" d="M7 -12h1v2h-1zM1 -11h1v1h-1zM4 -10h7v1h-7zM2 -10h1v2h-1zM7 -9h1v4h-1zM4 -9h1v4h-1zM10 -9h1v4h-1zM4 -5h7v1h-7zM2 -5h1v2h-1zM4 -4h1v1h-1zM10 -4h1v1h-1zM1 -3h1v1h-1zM7 -4h1v4h-1z"/><path id="g85" d="M3 -11h1v2h-1zM6 -10h5v1h-5zM8 -9h1v1h-1zM2 -9h1v1h-1zM4 -9h1v1h-1zM1 -8h1v1h-1zM5 -8h6v1h-6zM3 -7h1v1h-1zM0 -7h1v1h-1zM1 -5h4v1h-4zM4 -4h1v1h-1zM8 -7h1v5h-1zM6 -7h1v5h-1zM10 -7h1v5h-1zM3 -3h1v1h-1zM2 -2h2v1h-2zM8 -2h2v1h-2zM3 -1h1v1h-1zM7 -1h1v1h-1zM10 -1h1v1h-1zM5 0h2v1h-2z"/><path id="g86" d="M2 -11h1v1h-1zM6 -10h2v1h-2zM4 -10h1v2h-1zM7 -9h1v1h-1zM1 -10h2v3h-2zM1 -7h4v1h-4zM6 -6h2v1h-2zM9 -11h1v7h-1zM2 -6h2v2h-2zM8 -4h4v1h-4zM4 -4h1v1h-1zM1 -4h2v2h-2zM4 -3h4v1h-4zM0 -2h1v1h-1zM9 -3h1v4h-1zM2 -2h1v3h-1z"/><path id="g87" d="M3 -11h1v1h-1zM8 -11h1v1h-1zM1 -10h10v1h-10zM3 -9h1v2h-1zM8 -9h1v2h-1zM3 -7h6v1h-6zM3 -6h1v1h-1zM8 -6h1v1h-1zM3 -5h6v1h-6zM3 -4h1v1h-1zM8 -4h1v1h-1zM1 -3h10v1h-10zM7 -2h1v1h-1zM4 -2h1v1h-1zM2 -1h2v1h-2zM8 -1h2v1h-2zM1 0h1v1h-1zM10 0h1v1h-1z"/><path id="g88" d="M5 -12h1v1h-1zM6 -11h1v1h-1zM1 -10h10v1h-10zM1 -9h1v1h-1zM10 -9h1v1h-1zM8 -7h1v1h-1zM3 -8h1v3h-1zM5 -6h3v1h-3zM3 -5h2v1h-2zM3 -4h1v3h-1zM10 -3h1v2h-1zM3 -1h7v1h-7z"/><path id="g89" d="M6 -11h1v2h-1zM3 -11h1v3h-1zM1 -10h1v2h-1zM6 -9h5v1h-5zM1 -8h5v1h-5zM7 -8h1v2h-1zM9 -8h2v2h-2zM0 -7h1v1h-1zM5 -7h1v1h-1zM3 -7h1v2h-1zM6 -6h1v2h-1zM3 -5h2v1h-2zM8 -6h1v3h-1zM0 -4h4v1h-4zM5 -4h1v2h-1zM7 -3h1v2h-1zM10 -6h1v6h-1zM6 -1h1v1h-1zM3 -3h1v4h-1zM8 0h2v1h-2z"/><path id="g90" d="M3 -10h6v1h-6zM3 -9h1v2h-1zM8 -9h1v2h-1zM3 -7h6v1h-6zM1 -5h4v1h-4zM7 -5h4v1h-4zM1 -4h1v3h-1zM4 -4h1v3h-1zM6 -4h1v3h-1zM10 -4h1v3h-1zM1 -1h4v1h-4zM7 -1h4v1h-4zM1 0h1v1h-1zM4 0h1v1h-1zM10 0h1v1h-1z"/><path id="g91" d="M2 -11h1v2h-1zM5 -10h1v1h-1zM10 -10h1v2h-1zM1 -9h4v1h-4zM6 -9h1v1h-1zM8 -11h1v4h-1zM0 -8h1v1h-1zM1 -7h10v1h-10zM5 -6h1v1h-1zM2 -6h1v1h-1zM10 -6h1v1h-1zM1 -5h10v1h-10zM5 -4h1v1h-1zM10 -4h1v1h-1zM5 -3h6v1h-6zM2 -4h1v3h-1zM4 -2h2v1h-2zM10 -2h1v2h-1zM2 -1h2v1h-2zM5 -1h1v2h-1zM9 0h2v1h-2zM2 0h1v1h-1z"/><path id="g92" d="M3 -12h1v1h-1zM6 -12h1v1h-1zM2 -11h9v1h-9zM2 -10h1v1h-1zM6 -10h1v1h-1zM1 -9h9v1h-9zM2 -8h1v1h-1zM6 -8h1v1h-1zM2 -7h8v1h-8zM2 -6h9v1h-9zM2 -5h1v1h-1zM2 -4h8v1h-8zM9 -3h1v1h-1zM2 -3h1v1h-1zM2 -2h8v1h-8zM9 -1h1v1h-1zM2 -1h1v1h-1z"/><path id="g93" d="M5 -11h1v1h-1zM4 -10h1v1h-1zM1 -9h10v1h-10zM3 -8h1v2h-1zM5 -7h6v1h-6zM9 -6h1v1h-1zM2 -6h1v1h-1zM1 -5h2v1h-2zM7 -5h2v1h-2zM4 -4h7v1h-7zM7 -3h1v3h-1zM2 -4h1v5h-1zM6 0h2v1h-2z"/><path id="g94" d="M2 -11h8v1h-8zM9 -10h1v1h-1zM2 -10h1v1h-1zM2 -9h8v2h-8zM1 -7h10v1h-10zM2 -6h8v1h-8zM5 -5h1v1h-1zM9 -5h1v1h-1zM2 -5h1v1h-1zM2 -4h8v3h-8zM5 -1h1v1h-1zM1 0h10v1h-10z"/><path id="g96" d="M2 -7h1v2h-1zM2 -2h1v2h-1z"/><path id="g97" d="M9 -10h1v2h-1zM2 -10h1v2h-1zM3 -8h1v1h-1zM8 -8h1v1h-1zM5 -11h1v5h-1zM2 -6h8v1h-8zM9 -5h1v1h-1zM2 -4h8v1h-8zM9 -3h1v2h-1zM1 -1h9v1h-9zM9 0h1v1h-1z"/><path id="g98" d="M8 -12h2v1h-2zM3 -12h1v2h-1zM8 -11h1v1h-1zM1 -10h10v1h-10zM1 -8h5v1h-5zM1 -7h1v1h-1zM5 -7h1v1h-1zM1 -6h5v1h-5zM1 -5h1v1h-1zM5 -5h1v1h-1zM1 -4h5v1h-5zM7 -8h1v6h-1zM10 -8h1v7h-1zM5 -3h1v2h-1zM1 -3h1v3h-1zM4 -1h2v1h-2zM8 -1h2v1h-2z"/><path id="g99" d="M1 -9h4v1h-4zM1 -8h1v9h-1zM1 1h4v1h-4z"/><path id="g100" d="M2 -8h1v1h-1zM0 -7h3v1h-3zM2 -6h1v5h-1zM0 -1h6v1h-6z"/><path id="g101" d="M0 -8h5v1h-5zM0 -7h1v2h-1zM0 -5h4v1h-4zM4 -4h1v3h-1zM0 -2h1v1h-1zM1 -1h3v1h-3z"/><path id="g102" d="M0 -9h4v1h-4zM3 -8h1v9h-1zM0 1h4v1h-4z"/><path id="g103" d="M4 -11h1v1h-1zM3 -10h6v1h-6zM8 -9h1v1h-1zM2 -9h2v1h-2zM1 -8h2v1h-2zM4 -8h4v1h-4zM5 -7h2v1h-2zM7 -6h4v1h-4zM2 -6h3v1h-3zM1 -5h1v1h-1zM5 -5h1v1h-1zM2 -4h8v1h-8zM3 -2h1v1h-1zM8 -2h1v1h-1zM5 -3h1v3h-1zM9 -1h1v1h-1zM2 -1h1v1h-1zM4 0h2v1h-2z"/><path id="g104" d="M5 -10h6v1h-6zM2 -10h1v1h-1zM3 -9h1v1h-1zM10 -9h1v3h-1zM1 -7h2v1h-2zM5 -6h6v1h-6zM10 -5h1v1h-1zM5 -5h1v3h-1zM2 -6h1v5h-1zM11 -2h1v1h-1zM4 -2h2v1h-2zM5 -1h1v1h-1zM2 -1h2v1h-2zM10 -1h1v1h-1zM6 0h5v1h-5zM2 0h1v1h-1z"/><path id="g105" d="M3 -11h1v3h-1zM8 -11h1v3h-1zM1 -8h10v1h-10zM3 -7h1v3h-1zM8 -7h1v3h-1zM1 -4h10v1h-10zM3 -2h1v1h-1zM8 -2h1v1h-1zM9 -1h1v1h-1zM2 -1h1v1h-1zM1 0h1v1h-1zM10 0h1v1h-1z"/><path id="g106" d="M1 -8h3v1h-3zM0 -7h1v1h-1zM4 -7h1v2h-1zM3 -5h2v1h-2zM2 -4h2v1h-2zM1 -3h1v1h-1zM0 -2h1v1h-1zM0 -1h5v1h-5z"/><path id="g107" d="M1 -8h3v1h-3zM0 -7h1v1h-1zM4 -7h1v2h-1zM2 -5h2v1h-2zM4 -4h1v3h-1zM0 -2h1v1h-1zM1 -1h3v1h-3z"/><path id="g108" d="M1 -8h3v1h-3zM0 -7h1v2h-1zM4 -7h1v2h-1zM1 -5h3v1h-3zM0 -4h1v3h-1zM4 -4h1v3h-1zM1 -1h3v1h-3z"/><path id="g109" d="M3 -11h1v1h-1zM8 -11h1v2h-1zM3 -10h2v1h-2zM1 -9h10v1h-10zM5 -8h1v1h-1zM2 -7h8v1h-8zM9 -6h1v1h-1zM2 -6h1v1h-1zM2 -5h8v1h-8zM9 -4h1v1h-1zM2 -4h1v1h-1zM2 -3h8v1h-8zM9 -2h1v1h-1zM2 -2h1v1h-1zM2 -1h8v1h-8zM9 0h1v1h-1zM2 0h1v1h-1z"/><path id="g110" d="M1 -10h10v1h-10zM5 -9h1v1h-1zM2 -8h8v1h-8zM9 -7h1v5h-1zM2 -7h1v5h-1zM5 -6h1v5h-1zM7 -2h1v1h-1zM3 -1h2v1h-2zM8 -1h2v1h-2zM1 0h2v1h-2zM10 0h1v1h-1z"/><path id="g111" d="M5 -11h1v4h-1zM5 -7h6v1h-6zM5 -6h1v5h-1zM1 -1h10v1h-10z"/><path id="g112" d="M1 -10h10v1h-10zM5 -9h1v2h-1zM5 -7h2v1h-2zM7 -6h2v1h-2zM9 -5h1v1h-1zM5 -6h1v7h-1z"/><path id="g113" d="M2 -10h9v1h-9zM2 -9h1v1h-1zM10 -9h1v1h-1zM2 -8h9v1h-9zM6 -7h3v1h-3zM2 -7h1v1h-1zM3 -6h4v1h-4zM6 -5h4v1h-4zM3 -4h4v1h-4zM6 -3h5v1h-5zM3 -2h4v1h-4zM1 -6h1v6h-1zM6 -1h1v1h-1zM10 -1h1v1h-1zM0 0h1v1h-1zM6 0h5v1h-5z"/><path id="g114" d="M5 -11h1v2h-1zM1 -10h1v1h-1zM5 -9h6v1h-6zM2 -9h2v1h-2zM10 -8h1v2h-1zM4 -8h1v3h-1zM9 -6h1v1h-1zM7 -7h1v3h-1zM3 -5h1v1h-1zM2 -4h1v1h-1zM6 -4h2v1h-2zM1 -3h2v1h-2zM6 -3h1v1h-1zM8 -3h1v2h-1zM1 -2h1v1h-1zM5 -2h1v1h-1zM9 -1h2v1h-2zM4 -1h2v1h-2zM3 0h1v1h-1zM10 0h1v1h-1z"/><path id="g115" d="M3 -8h1v1h-1zM2 -7h2v1h-2zM1 -6h1v2h-1zM3 -6h1v3h-1zM0 -4h1v1h-1zM0 -3h5v1h-5zM3 -2h1v2h-1z"/><path id="g116" d="M1 -10h6v1h-6zM2 -9h1v2h-1zM5 -8h1v1h-1zM1 -7h6v1h-6zM3 -5h1v1h-1zM1 -4h6v1h-6zM8 -10h1v8h-1zM3 -3h1v2h-1zM6 -2h1v1h-1zM10 -11h1v11h-1zM1 -1h5v1h-5zM8 0h3v1h-3z"/><path id="g117" d="M7 -11h1v1h-1zM2 -11h1v1h-1zM2 -10h4v1h-4zM7 -10h4v1h-4zM3 -9h1v1h-1zM8 -9h1v1h-1zM1 -9h1v2h-1zM6 -9h1v2h-1zM9 -8h1v1h-1zM2 -7h8v1h-8zM5 -6h1v1h-1zM9 -6h1v1h-1zM2 -5h8v1h-8zM5 -4h1v1h-1zM2 -4h1v1h-1zM2 -3h9v1h-9zM4 -2h2v1h-2zM10 -2h1v1h-1zM2 -1h2v1h-2zM8 -1h2v1h-2zM5 -1h1v2h-1zM1 0h1v1h-1z"/><path id="g118" d="M4 -11h1v1h-1zM3 -10h1v2h-1zM8 -10h1v2h-1zM9 -8h1v1h-1zM2 -8h1v1h-1zM1 -7h2v1h-2zM10 -7h1v1h-1zM1 -6h10v1h-10zM9 -5h1v3h-1zM4 -5h1v3h-1zM3 -2h1v1h-1zM8 -2h1v2h-1zM2 -1h2v1h-2zM1 0h1v1h-1zM6 0h3v1h-3z"/><path id="g119" d="M3 -12h1v1h-1zM2 -11h9v1h-9zM2 -10h1v1h-1zM1 -9h1v1h-1zM3 -9h7v1h-7zM5 -8h1v1h-1zM9 -8h1v2h-1zM2 -8h1v2h-1zM6 -7h1v1h-1zM1 -6h11v1h-11zM4 -5h2v1h-2zM9 -5h1v2h-1zM2 -5h1v2h-1zM6 -4h1v1h-1zM2 -3h9v1h-9zM8 -2h1v1h-1zM7 -1h2v1h-2z"/><path id="g120" d="M1 -8h3v1h-3zM2 -5h1v1h-1zM0 -7h1v6h-1zM4 -7h1v6h-1zM1 -1h3v1h-3z"/><path id="g121" d="M9 -10h1v1h-1zM10 -9h1v1h-1zM3 -11h1v4h-1zM7 -11h1v4h-1zM1 -9h1v2h-1zM3 -7h8v1h-8zM3 -6h1v2h-1zM7 -6h1v2h-1zM1 -4h3v1h-3zM8 -4h1v2h-1zM0 -3h2v1h-2zM6 -4h1v3h-1zM9 -2h1v1h-1zM3 -3h1v3h-1zM5 -1h1v1h-1zM9 -1h2v1h-2zM3 0h2v1h-2zM10 0h1v1h-1z"/><path id="g122" d="M5 -11h1v2h-1zM1 -9h10v1h-10zM5 -8h2v1h-2zM7 -7h1v1h-1zM4 -7h1v1h-1zM3 -6h3v1h-3zM8 -6h1v1h-1zM1 -5h2v1h-2zM9 -5h2v1h-2zM6 -5h1v1h-1zM5 -4h1v1h-1zM9 -3h1v1h-1zM6 -3h1v1h-1zM2 -3h2v1h-2zM3 -2h1v2h-1zM8 -1h1v1h-1zM1 -2h1v3h-1zM10 -2h1v3h-1zM4 0h5v1h-5z"/><path id="g123" d="M1 -10h4v1h-4zM9 -11h1v3h-1zM1 -9h1v1h-1zM6 -8h5v1h-5zM9 -7h1v1h-1zM8 -6h2v2h-2zM7 -4h1v1h-1zM4 -9h1v7h-1zM1 -8h2v6h-2zM6 -3h1v1h-1zM5 -2h2v1h-2zM2 -2h2v1h-2zM9 -4h1v4h-1zM4 -1h1v1h-1zM1 -1h1v2h-1zM8 0h2v1h-2z"/><path id="g124" d="M4 -12h1v1h-1zM3 -11h7v1h-7zM2 -10h2v1h-2zM8 -10h2v1h-2zM1 -9h1v1h-1zM4 -9h1v1h-1zM7 -9h2v1h-2zM5 -8h2v1h-2zM1 -7h4v1h-4zM7 -7h4v1h-4zM5 -6h1v1h-1zM1 -5h9v1h-9zM5 -4h1v1h-1zM4 -3h1v1h-1zM9 -4h1v3h-1zM3 -2h1v1h-1zM1 -1h2v1h-2zM7 -1h2v1h-2z"/><path id="g125" d="M2 -11h8v1h-8zM9 -10h1v2h-1zM2 -10h1v2h-1zM2 -8h8v1h-8zM1 -6h10v1h-10zM3 -5h1v2h-1zM3 -3h7v1h-7zM9 -2h1v1h-1zM8 -1h1v1h-1zM6 0h3v1h-3z"/><path id="g126" d="M5 -10h6v1h-6zM2 -11h1v3h-1zM5 -9h1v1h-1zM10 -9h1v1h-1zM5 -8h6v1h-6zM0 -8h4v1h-4zM5 -7h1v1h-1zM8 -7h1v1h-1zM2 -7h1v2h-1zM5 -6h6v1h-6zM5 -5h1v1h-1zM1 -5h3v1h-3zM8 -5h1v2h-1zM0 -4h3v1h-3zM6 -3h5v1h-5zM4 -4h1v4h-1zM2 -3h1v3h-1zM6 -2h1v2h-1zM10 -2h1v2h-1zM1 0h3v1h-3zM6 0h5v1h-5z"/><path id="g127" d="M5 -10h1v2h-1zM3 -10h1v2h-1zM8 -10h1v2h-1zM1 -8h10v1h-10zM7 -7h1v1h-1zM4 -7h2v1h-2zM3 -6h1v1h-1zM8 -6h2v1h-2zM1 -5h2v1h-2zM10 -5h1v1h-1zM5 -6h1v3h-1zM1 -3h10v1h-10zM5 -2h2v1h-2zM3 -1h2v1h-2zM7 -1h2v1h-2zM1 0h2v1h-2zM9 0h2v1h-2z"/><path id="g128" d="M1 -11h6v1h-6zM5 -10h1v2h-1zM7 -10h1v2h-1zM2 -10h1v2h-1zM1 -8h7v1h-7zM7 -7h1v1h-1zM10 -11h1v6h-1zM2 -7h1v2h-1zM5 -7h1v3h-1zM1 -5h1v1h-1zM8 -5h3v1h-3zM6 -4h1v1h-1zM2 -3h8v1h-8zM6 -2h1v2h-1zM1 0h10v1h-10z"/><path id="g129" d="M1 -8h1v2h-1zM10 -8h1v2h-1zM7 -11h1v7h-1zM9 -6h1v2h-1zM2 -6h1v2h-1zM7 -4h2v1h-2zM4 -11h1v10h-1zM7 -3h1v2h-1zM1 -1h10v1h-10z"/><path id="g130" d="M6 -10h5v1h-5zM2 -10h1v2h-1zM6 -9h1v2h-1zM10 -9h1v2h-1zM1 -8h4v1h-4zM6 -7h5v1h-5zM2 -7h1v1h-1zM2 -6h2v1h-2zM6 -6h1v2h-1zM10 -6h1v2h-1zM1 -5h2v2h-2zM4 -5h1v2h-1zM6 -4h5v1h-5zM0 -3h1v1h-1zM6 -3h1v2h-1zM10 -3h1v2h-1zM2 -3h1v3h-1zM6 -1h5v1h-5zM6 0h1v1h-1zM10 0h1v1h-1z"/><path id="g131" d="M3 -11h1v2h-1zM8 -11h1v2h-1zM7 -9h1v1h-1zM4 -9h1v1h-1zM2 -8h9v1h-9zM6 -7h1v2h-1zM1 -5h10v1h-10zM5 -4h2v1h-2zM5 -3h1v1h-1zM7 -3h1v1h-1zM4 -2h1v1h-1zM7 -2h2v1h-2zM2 -1h2v1h-2zM8 -1h2v1h-2zM1 0h1v1h-1zM10 0h1v1h-1z"/><path id="g132" d="M3 -11h1v2h-1zM9 -11h1v3h-1zM5 -10h1v2h-1zM2 -9h1v2h-1zM4 -8h7v1h-7zM1 -7h2v1h-2zM0 -6h1v1h-1zM5 -7h1v3h-1zM9 -7h1v3h-1zM4 -4h8v1h-8zM5 -2h1v1h-1zM9 -2h1v1h-1zM4 -1h2v1h-2zM2 -6h1v7h-1zM10 -1h1v2h-1zM4 0h1v1h-1z"/><path id="g133" d="M6 -12h1v2h-1zM1 -10h10v1h-10zM10 -8h1v1h-1zM3 -7h1v1h-1zM6 -8h1v3h-1zM9 -7h1v3h-1zM7 -5h1v1h-1zM4 -6h1v3h-1zM1 -9h1v7h-1zM8 -4h1v2h-1zM1 -2h10v1h-10z"/><path id="g134" d="M5 -12h1v1h-1zM1 -11h10v1h-10zM3 -10h1v1h-1zM7 -9h1v1h-1zM4 -9h1v1h-1zM1 -8h10v1h-10zM7 -7h1v1h-1zM4 -6h1v1h-1zM8 -6h1v1h-1zM3 -5h5v1h-5zM7 -4h1v1h-1zM4 -4h1v1h-1zM4 -3h4v1h-4zM10 -7h1v6h-1zM4 -2h1v1h-1zM1 -7h1v7h-1zM8 -1h3v1h-3z"/><path id="g135" d="M5 -12h1v1h-1zM1 -11h10v1h-10zM1 -10h1v2h-1zM10 -10h1v2h-1zM3 -8h7v1h-7zM5 -7h1v2h-1zM3 -6h1v1h-1zM6 -5h4v1h-4zM2 -5h1v1h-1zM5 -4h1v2h-1zM2 -4h2v2h-2zM1 -2h1v1h-1zM4 -2h2v1h-2zM5 -1h6v1h-6zM0 -1h2v1h-2z"/><path id="g136" d="M1 -4h3v1h-3z"/><path id="g137" d="M1 -8h3v1h-3zM0 -7h1v3h-1zM4 -7h1v3h-1zM1 -4h4v1h-4zM4 -3h1v1h-1zM0 -2h1v1h-1zM3 -2h2v1h-2zM1 -1h3v1h-3z"/><path id="g138" d="M1 -8h3v1h-3zM4 -7h1v1h-1zM0 -7h1v5h-1zM4 -2h1v1h-1zM0 -2h2v1h-2zM1 -1h4v1h-4z"/><path id="g139" d="M1 -8h3v1h-3zM4 -7h1v1h-1zM3 -4h2v1h-2zM0 -7h1v6h-1zM4 -3h1v2h-1zM1 -1h4v1h-4z"/><path id="g140" d="M0 -8h5v1h-5zM0 -7h1v2h-1zM4 -7h1v2h-1zM0 -5h4v1h-4zM3 -4h1v2h-1zM0 -4h1v4h-1zM4 -2h1v2h-1z"/><path id="g141" d="M4 -8h1v1h-1zM3 -7h1v1h-1zM0 -8h1v3h-1zM2 -6h1v1h-1zM0 -5h3v1h-3zM2 -4h1v1h-1zM3 -3h1v1h-1zM4 -2h1v1h-1zM0 -4h1v4h-1zM4 -1h2v1h-2z"/><path id="g142" d="M5 -8h2v1h-2zM0 -8h2v1h-2zM1 -7h1v1h-1zM5 -7h1v1h-1zM2 -6h1v1h-1zM4 -6h1v1h-1zM3 -5h1v5h-1z"/><path id="g143" d="M1 -8h3v1h-3zM4 -7h1v1h-1zM0 -7h1v2h-1zM0 -5h3v1h-3zM3 -4h2v1h-2zM4 -3h1v2h-1zM0 -2h1v1h-1zM0 -1h5v1h-5z"/><path id="g144" d="M7 -12h5v1h-5zM5 -12h1v2h-1zM2 -12h1v2h-1zM7 -11h1v1h-1zM10 -11h1v2h-1zM1 -10h7v1h-7zM3 -9h1v3h-1zM7 -9h1v3h-1zM9 -9h1v3h-1zM1 -6h7v1h-7zM3 -5h1v1h-1zM10 -6h1v3h-1zM3 -4h2v1h-2zM7 -5h1v3h-1zM9 -3h2v1h-2zM5 -3h1v1h-1zM2 -3h1v1h-1zM6 -2h2v1h-2zM1 -2h1v2h-1zM7 -1h1v1h-1z"/><path id="g145" d="M3 -10h1v3h-1zM6 -10h1v3h-1zM6 -7h2v1h-2zM3 -7h2v2h-2zM6 -6h1v1h-1zM1 -7h1v3h-1zM8 -6h1v2h-1zM5 -5h2v1h-2zM3 -5h1v2h-1zM2 -3h1v2h-1zM6 -4h1v4h-1zM10 -10h1v11h-1zM1 -1h1v2h-1z"/><path id="g146" d="M5 -12h1v1h-1zM6 -11h1v1h-1zM1 -10h10v1h-10zM5 -9h1v2h-1zM2 -7h8v1h-8zM9 -6h1v3h-1zM2 -6h1v4h-1zM8 -3h2v1h-2zM5 -6h1v6h-1z"/><path id="g147" d="M1 -10h10v1h-10zM4 -9h1v2h-1zM3 -7h1v1h-1zM3 -6h8v1h-8zM2 -5h2v1h-2zM1 -4h1v1h-1zM10 -5h1v4h-1zM3 -4h1v3h-1zM3 -1h8v1h-8zM3 0h1v1h-1zM10 0h1v1h-1z"/><path id="g148" d="M1 -11h10v1h-10zM4 -10h1v1h-1zM3 -9h7v1h-7zM9 -8h1v1h-1zM1 -8h3v1h-3zM3 -7h7v1h-7zM1 -5h10v1h-10zM7 -4h1v1h-1zM2 -4h1v1h-1zM1 -3h4v1h-4zM7 -3h4v1h-4zM4 -2h1v1h-1zM0 -2h3v1h-3zM6 -2h2v1h-2zM10 -2h1v2h-1zM2 -1h4v1h-4zM7 -1h1v1h-1zM2 0h1v1h-1zM4 0h1v1h-1zM7 0h4v1h-4z"/><path id="g149" d="M5 -11h1v1h-1zM4 -10h1v1h-1zM1 -9h10v1h-10zM3 -8h1v1h-1zM3 -7h7v1h-7zM9 -6h1v1h-1zM2 -6h2v1h-2zM1 -5h1v1h-1zM3 -5h7v1h-7zM3 -4h1v1h-1zM9 -4h1v1h-1zM3 -3h7v1h-7zM9 -2h1v2h-1zM3 -2h1v3h-1zM7 0h3v1h-3z"/><path id="g150" d="M1 -11h4v1h-4zM5 -10h6v1h-6zM5 -9h1v1h-1zM10 -9h1v1h-1zM5 -8h6v1h-6zM5 -7h1v1h-1zM10 -7h1v1h-1zM3 -10h1v5h-1zM5 -6h6v1h-6zM7 -5h1v1h-1zM4 -5h2v2h-2zM8 -4h1v1h-1zM10 -4h1v1h-1zM3 -3h1v1h-1zM8 -3h2v1h-2zM5 -3h1v2h-1zM9 -2h1v1h-1zM9 -1h2v1h-2zM5 -1h3v1h-3zM1 -10h1v11h-1zM5 0h1v1h-1zM10 0h1v1h-1z"/><path id="g151" d="M7 -10h1v1h-1zM4 -10h1v1h-1zM8 -9h1v1h-1zM3 -9h1v2h-1zM8 -8h2v1h-2zM9 -7h1v1h-1zM2 -7h1v1h-1zM1 -6h1v1h-1zM5 -6h1v1h-1zM10 -6h1v1h-1zM4 -5h2v1h-2zM7 -4h1v1h-1zM4 -4h1v1h-1zM3 -3h1v1h-1zM8 -3h1v1h-1zM9 -2h1v1h-1zM2 -2h1v1h-1zM2 -1h9v1h-9zM10 0h1v1h-1z"/><path id="g152" d="M1 -10h10v1h-10zM1 -8h7v1h-7zM2 -6h6v1h-6zM7 -5h1v3h-1zM2 -5h1v3h-1zM2 -2h6v1h-6zM10 -9h1v9h-1zM2 -1h1v1h-1zM8 0h2v1h-2z"/><path id="g153" d="M3 -11h1v1h-1zM8 -11h1v1h-1zM1 -10h10v2h-10zM1 -8h1v2h-1zM10 -8h1v2h-1zM3 -7h6v1h-6zM2 -6h8v1h-8zM4 -5h2v1h-2zM5 -4h1v1h-1zM1 -4h3v1h-3zM7 -4h2v1h-2zM3 -3h2v1h-2zM6 -3h2v1h-2zM1 -2h2v1h-2zM5 -2h2v1h-2zM8 -2h1v1h-1zM9 -1h1v1h-1zM3 -1h2v1h-2zM6 -1h1v1h-1zM1 0h2v1h-2zM5 0h2v1h-2zM10 0h1v1h-1z"/><path id="g154" d="M3 -12h1v1h-1zM6 -12h1v2h-1zM2 -11h1v1h-1zM2 -10h9v1h-9zM1 -9h1v2h-1zM6 -9h1v3h-1zM1 -6h10v1h-10zM6 -5h1v5h-1z"/><path id="g155" d="M4 -11h1v1h-1zM6 -10h5v1h-5zM2 -10h2v1h-2zM1 -9h1v2h-1zM7 -9h1v2h-1zM4 -9h1v2h-1zM10 -9h1v2h-1zM5 -7h2v1h-2zM1 -7h3v1h-3zM8 -7h2v1h-2zM2 -5h8v1h-8zM9 -4h1v3h-1zM2 -4h1v3h-1zM5 -3h1v2h-1zM4 -1h1v1h-1zM7 -1h3v1h-3zM1 0h3v1h-3zM10 0h1v1h-1z"/><path id="g156" d="M6 -11h1v2h-1zM2 -9h9v1h-9zM2 -8h1v5h-1zM1 -3h1v4h-1z"/><path id="g157" d="M5 -11h1v1h-1zM4 -10h2v1h-2zM1 -9h10v1h-10zM4 -8h1v1h-1zM3 -7h1v1h-1zM6 -7h1v2h-1zM2 -6h2v1h-2zM2 -5h8v1h-8zM8 -3h1v1h-1zM3 -3h1v1h-1zM9 -2h1v1h-1zM2 -2h1v1h-1zM6 -4h1v4h-1zM1 -1h2v1h-2zM10 -1h1v1h-1zM5 0h2v1h-2z"/><path id="g158" d="M3 -10h1v1h-1zM8 -10h2v1h-2zM8 -9h3v1h-3zM2 -9h1v1h-1zM5 -11h1v4h-1zM1 -8h1v1h-1zM7 -8h2v1h-2zM10 -8h1v1h-1zM5 -7h2v1h-2zM0 -6h10v1h-10zM3 -5h1v1h-1zM9 -5h1v1h-1zM3 -4h7v1h-7zM3 -3h1v1h-1zM9 -3h1v1h-1zM3 -2h7v2h-7zM3 0h1v1h-1zM9 0h1v1h-1z"/><path id="g159" d="M1 -12h1v1h-1zM5 -12h1v1h-1zM8 -12h3v1h-3zM1 -11h6v1h-6zM10 -11h1v2h-1zM8 -11h1v2h-1zM5 -10h1v1h-1zM2 -10h1v1h-1zM8 -9h3v1h-3zM4 -9h3v1h-3zM3 -8h1v1h-1zM0 -8h2v1h-2zM6 -8h1v1h-1zM2 -7h1v1h-1zM4 -7h3v1h-3zM8 -8h1v3h-1zM10 -8h1v3h-1zM3 -6h1v1h-1zM6 -6h1v1h-1zM8 -5h3v1h-3zM4 -5h3v1h-3zM2 -5h1v2h-1zM5 -4h1v1h-1zM8 -4h1v1h-1zM3 -3h5v1h-5zM10 -4h1v3h-1zM1 -3h1v3h-1zM5 -2h1v2h-1zM7 -2h1v2h-1zM9 -1h2v1h-2z"/><path id="g160" d="M1 -10h1v1h-1zM2 -9h1v1h-1zM5 -10h1v3h-1zM7 -10h1v3h-1zM10 -10h1v4h-1zM1 -7h1v1h-1zM4 -7h5v1h-5zM2 -6h2v1h-2zM9 -6h2v2h-2zM5 -6h3v2h-3zM3 -5h1v1h-1zM5 -4h1v2h-1zM2 -3h1v1h-1zM4 -2h1v2h-1zM7 -4h1v5h-1zM10 -4h1v5h-1zM1 -2h1v3h-1z"/><path id="g161" d="M7 -12h1v1h-1zM2 -12h1v1h-1zM1 -11h4v1h-4zM8 -11h1v1h-1zM1 -10h1v1h-1zM4 -10h7v1h-7zM1 -9h2v1h-2zM4 -9h1v1h-1zM3 -8h2v1h-2zM6 -8h4v1h-4zM1 -8h1v2h-1zM4 -7h1v1h-1zM0 -6h5v1h-5zM1 -5h2v1h-2zM4 -5h1v1h-1zM3 -4h2v1h-2zM9 -7h1v6h-1zM6 -7h1v6h-1zM1 -4h1v3h-1zM4 -3h1v2h-1zM11 -2h1v1h-1zM9 -1h2v1h-2zM0 -1h1v1h-1zM3 -1h3v1h-3z"/><path id="g162" d="M5 -11h1v1h-1zM5 -10h2v1h-2zM1 -9h10v1h-10zM10 -8h1v1h-1zM1 -8h1v2h-1zM3 -7h2v1h-2zM7 -7h2v1h-2zM1 -6h2v1h-2zM9 -6h2v1h-2zM2 -5h8v1h-8zM5 -4h1v4h-1zM1 0h10v1h-10z"/><path id="g163" d="M5 -12h1v1h-1zM1 -11h10v1h-10zM1 -10h1v2h-1zM10 -10h1v2h-1zM3 -9h1v1h-1zM4 -8h1v1h-1zM2 -7h1v1h-1zM6 -9h1v5h-1zM3 -6h1v2h-1zM1 -4h10v1h-10zM5 -3h1v1h-1zM7 -3h1v1h-1zM3 -2h2v1h-2zM8 -2h2v1h-2zM1 -1h2v1h-2zM10 -1h1v1h-1z"/><path id="g164" d="M5 -12h1v1h-1zM1 -11h10v1h-10zM3 -10h6v1h-6zM1 -10h1v2h-1zM10 -10h1v2h-1zM3 -8h6v1h-6zM2 -7h1v1h-1zM8 -7h1v1h-1zM3 -6h6v1h-6zM2 -5h8v1h-8zM5 -4h1v1h-1zM9 -4h1v1h-1zM2 -4h1v1h-1zM2 -3h8v1h-8zM5 -2h1v1h-1zM9 -2h1v1h-1zM2 -2h1v1h-1zM2 -1h8v1h-8z"/><path id="g165" d="M4 -11h2v1h-2zM1 -10h3v1h-3zM3 -9h1v2h-1zM1 -7h5v1h-5zM3 -6h1v1h-1zM2 -5h3v1h-3zM5 -4h1v1h-1zM2 -4h2v1h-2zM7 -9h1v7h-1zM1 -3h1v1h-1zM0 -2h1v1h-1zM10 -11h1v11h-1zM3 -3h1v4h-1zM8 0h3v1h-3z"/><path id="g166" d="M5 -12h2v1h-2zM1 -11h10v1h-10zM1 -10h1v2h-1zM10 -10h1v2h-1zM5 -9h1v1h-1zM4 -8h1v1h-1zM1 -7h10v1h-10zM4 -6h1v1h-1zM6 -6h1v2h-1zM3 -5h1v1h-1zM8 -4h1v1h-1zM2 -4h2v1h-2zM5 -4h1v2h-1zM9 -3h1v1h-1zM2 -3h1v1h-1zM1 -2h1v1h-1zM4 -2h1v1h-1zM7 -2h3v1h-3zM10 -1h1v1h-1zM4 -1h3v1h-3z"/><path id="g167" d="M2 -10h8v1h-8zM9 -9h1v1h-1zM2 -9h1v1h-1zM2 -8h8v1h-8zM9 -7h1v1h-1zM2 -7h1v1h-1zM2 -6h8v1h-8zM3 -5h1v1h-1zM2 -4h9v1h-9zM1 -3h1v1h-1zM7 -3h1v2h-1zM4 -3h1v2h-1zM10 -3h1v2h-1zM9 -1h1v1h-1zM6 -1h1v1h-1zM2 -1h2v1h-2zM5 0h1v1h-1zM2 0h1v1h-1zM7 0h3v1h-3z"/><path id="g168" d="M0 -8h5v1h-5zM4 -7h1v1h-1zM3 -6h1v2h-1zM2 -4h1v2h-1zM1 -2h2v1h-2zM1 -1h1v1h-1z"/><path id="g169" d="M1 -8h3v1h-3zM4 -7h1v1h-1zM0 -7h2v1h-2zM0 -6h1v1h-1zM0 -5h4v1h-4zM0 -4h1v3h-1zM4 -4h1v3h-1zM1 -1h3v1h-3z"/><path id="g170" d="M6 -12h1v1h-1zM1 -11h10v1h-10zM3 -9h7v1h-7zM8 -8h2v1h-2zM5 -7h3v1h-3zM3 -6h8v1h-8zM10 -5h1v1h-1zM9 -4h1v1h-1zM1 -10h1v9h-1zM6 -5h1v4h-1zM0 -1h1v1h-1zM4 -1h3v1h-3z"/><path id="g171" d="M7 -12h1v1h-1zM5 -11h6v1h-6zM2 -12h1v3h-1zM5 -10h1v2h-1zM10 -10h1v2h-1zM1 -9h1v2h-1zM3 -9h1v2h-1zM5 -8h6v2h-6zM2 -7h1v1h-1zM1 -6h1v1h-1zM5 -6h1v2h-1zM7 -6h1v2h-1zM9 -6h2v2h-2zM1 -5h3v1h-3zM6 -4h5v1h-5zM4 -4h1v1h-1zM2 -3h4v1h-4zM7 -3h1v2h-1zM9 -3h2v2h-2zM1 -2h1v1h-1zM4 -2h2v1h-2zM4 -1h1v1h-1zM10 -1h1v1h-1z"/><path id="g172" d="M1 -11h9v1h-9zM2 -10h1v1h-1zM1 -9h1v1h-1zM6 -9h1v2h-1zM1 -8h3v1h-3zM9 -10h1v4h-1zM1 -7h1v1h-1zM5 -7h1v1h-1zM6 -6h5v1h-5zM0 -6h2v1h-2zM5 -4h4v1h-4zM3 -7h1v5h-1zM1 -5h1v3h-1zM10 -5h1v4h-1zM1 -2h2v1h-2zM8 -1h2v1h-2z"/><path id="g173" d="M4 -12h2v1h-2zM4 -11h6v1h-6zM2 -10h2v1h-2zM8 -10h2v1h-2zM1 -9h2v1h-2zM8 -9h1v1h-1zM4 -8h1v1h-1zM6 -8h2v1h-2zM5 -7h2v1h-2zM2 -6h8v1h-8zM1 -5h1v1h-1zM3 -5h1v3h-1zM9 -5h1v3h-1zM3 -2h7v1h-7zM3 -1h1v1h-1zM9 -1h1v1h-1z"/><path id="g174" d="M4 -11h1v1h-1zM6 -11h1v2h-1zM1 -10h3v1h-3zM6 -9h5v1h-5zM2 -9h1v2h-1zM5 -8h1v1h-1zM8 -8h1v2h-1zM10 -8h1v2h-1zM1 -7h5v1h-5zM8 -6h2v1h-2zM6 -6h1v2h-1zM2 -6h2v2h-2zM4 -4h2v1h-2zM10 -5h1v3h-1zM1 -4h2v2h-2zM5 -3h1v2h-1zM8 -5h1v5h-1zM2 -2h1v3h-1zM7 0h2v1h-2z"/><path id="g175" d="M6 -10h5v1h-5zM2 -11h1v3h-1zM1 -8h4v1h-4zM2 -7h1v1h-1zM5 -6h6v1h-6zM2 -6h2v1h-2zM4 -5h1v1h-1zM8 -5h1v1h-1zM1 -5h2v2h-2zM6 -4h1v1h-1zM8 -4h2v1h-2zM0 -3h1v1h-1zM5 -3h1v2h-1zM10 -3h1v2h-1zM8 -3h1v3h-1zM2 -3h1v4h-1zM6 0h2v1h-2z"/><path id="g176" d="M7 -11h1v1h-1zM5 -11h1v2h-1zM1 -10h1v1h-1zM8 -10h1v1h-1zM4 -9h7v1h-7zM2 -9h1v2h-1zM4 -8h1v1h-1zM8 -8h1v2h-1zM3 -7h2v1h-2zM3 -6h8v1h-8zM8 -5h1v1h-1zM4 -5h1v1h-1zM4 -4h7v1h-7zM2 -5h1v3h-1zM8 -3h1v2h-1zM4 -3h1v2h-1zM1 -2h1v2h-1zM4 -1h7v1h-7zM4 0h1v1h-1z"/><path id="g177" d="M6 -12h5v1h-5zM2 -12h1v2h-1zM1 -10h4v1h-4zM2 -9h1v2h-1zM1 -7h4v1h-4zM6 -11h1v6h-1zM10 -11h1v6h-1zM2 -6h1v1h-1zM8 -9h1v5h-1zM2 -5h2v1h-2zM2 -4h1v2h-1zM4 -4h1v2h-1zM7 -4h2v2h-2zM10 -3h1v2h-1zM1 -2h1v1h-1zM8 -2h1v1h-1zM6 -2h1v1h-1zM8 -1h3v1h-3zM5 -1h1v1h-1z"/><path id="g178" d="M7 -12h1v1h-1zM6 -11h5v1h-5zM2 -12h1v3h-1zM6 -10h1v1h-1zM9 -10h1v2h-1zM1 -9h6v1h-6zM2 -8h1v1h-1zM7 -8h2v2h-2zM2 -7h2v1h-2zM9 -6h2v1h-2zM4 -6h3v1h-3zM1 -6h2v2h-2zM6 -5h5v1h-5zM4 -5h1v1h-1zM0 -4h1v1h-1zM5 -4h1v2h-1zM10 -4h1v2h-1zM6 -2h5v1h-5zM2 -4h1v4h-1zM10 -1h1v1h-1z"/><path id="g179" d="M3 -12h1v1h-1zM5 -12h1v1h-1zM1 -12h1v2h-1zM7 -12h1v2h-1zM3 -11h2v1h-2zM1 -10h5v1h-5zM7 -10h4v1h-4zM2 -9h3v1h-3zM7 -9h1v2h-1zM5 -8h1v1h-1zM2 -8h2v1h-2zM1 -7h1v1h-1zM9 -9h1v4h-1zM3 -7h1v2h-1zM6 -7h2v2h-2zM1 -5h5v1h-5zM8 -5h2v1h-2zM8 -4h1v1h-1zM2 -4h1v1h-1zM4 -4h1v1h-1zM8 -3h2v1h-2zM2 -3h3v2h-3zM7 -2h1v1h-1zM10 -2h1v2h-1zM1 -1h1v1h-1zM6 -1h1v1h-1z"/><path id="g180" d="M1 -10h9v1h-9zM9 -9h1v3h-1zM2 -8h1v2h-1zM2 -6h8v1h-8zM9 -5h1v1h-1zM2 -5h1v5h-1zM10 -3h1v3h-1zM2 0h9v1h-9z"/><path id="g181" d="M2 -12h1v2h-1zM1 -10h3v1h-3zM5 -12h1v4h-1zM8 -12h1v4h-1zM10 -9h1v1h-1zM5 -8h5v1h-5zM2 -9h1v3h-1zM5 -7h1v1h-1zM2 -6h4v1h-4zM1 -5h2v1h-2zM8 -7h1v5h-1zM5 -5h1v3h-1zM11 -3h1v1h-1zM2 -4h1v3h-1zM5 -2h4v1h-4zM10 -2h1v1h-1zM5 -1h1v1h-1zM1 -1h2v1h-2zM8 -1h3v1h-3z"/><path id="g182" d="M3 -10h1v1h-1zM5 -10h1v2h-1zM2 -9h1v1h-1zM2 -8h9v1h-9zM1 -7h1v2h-1zM5 -7h1v2h-1zM2 -5h8v1h-8zM5 -4h1v4h-1zM1 0h10v1h-10z"/><path id="g183" d="M5 -11h1v1h-1zM6 -10h1v1h-1zM1 -9h10v1h-10zM3 -8h1v1h-1zM8 -8h1v2h-1zM4 -7h1v1h-1zM1 -6h10v1h-10zM1 -5h1v6h-1z"/><path id="g184" d="M2 -10h8v1h-8zM9 -9h1v3h-1zM2 -9h1v3h-1zM2 -6h8v1h-8zM9 -5h1v4h-1zM2 -5h1v4h-1zM2 -1h8v1h-8zM9 0h1v1h-1zM2 0h1v1h-1z"/><path id="g185" d="M1 -11h1v2h-1zM4 -11h1v2h-1zM7 -10h4v1h-4zM1 -9h5v1h-5zM7 -9h1v2h-1zM10 -9h1v2h-1zM1 -8h1v1h-1zM4 -8h1v1h-1zM7 -7h4v1h-4zM2 -7h3v1h-3zM1 -6h1v1h-1zM4 -6h1v1h-1zM7 -6h1v2h-1zM10 -6h1v2h-1zM2 -5h3v1h-3zM1 -4h1v1h-1zM4 -4h1v1h-1zM7 -4h4v1h-4zM0 -3h6v1h-6zM7 -3h1v1h-1zM6 -2h1v1h-1zM2 -2h1v1h-1zM4 -2h1v1h-1zM10 -3h1v3h-1zM5 -1h2v1h-2zM1 -1h1v2h-1zM9 0h2v1h-2zM6 0h1v1h-1z"/><path id="g186" d="M2 -12h1v1h-1zM7 -12h1v2h-1zM3 -11h1v1h-1zM1 -10h5v1h-5zM7 -10h4v1h-4zM7 -9h1v1h-1zM2 -9h1v1h-1zM4 -9h1v1h-1zM10 -9h1v2h-1zM5 -8h3v1h-3zM1 -8h1v2h-1zM4 -7h4v1h-4zM9 -7h1v2h-1zM7 -6h1v1h-1zM2 -6h1v1h-1zM4 -6h1v1h-1zM3 -5h1v1h-1zM8 -5h2v1h-2zM3 -4h2v1h-2zM8 -4h1v1h-1zM2 -3h1v1h-1zM4 -3h1v1h-1zM8 -3h2v1h-2zM1 -2h1v1h-1zM9 -2h2v1h-2zM6 -2h2v1h-2zM5 -1h2v1h-2zM10 -1h1v1h-1z"/><path id="g187" d="M1 -10h10v1h-10zM4 -9h1v1h-1zM3 -8h1v1h-1zM8 -8h1v1h-1zM2 -7h8v1h-8zM10 -6h1v1h-1zM5 -5h1v1h-1zM2 -4h8v1h-8zM5 -3h1v3h-1zM1 0h10v1h-10z"/><path id="g188" d="M3 -12h1v2h-1zM7 -12h1v2h-1zM4 -10h7v1h-7zM2 -10h1v2h-1zM1 -8h2v1h-2zM5 -8h1v2h-1zM9 -8h1v4h-1zM6 -6h1v3h-1zM8 -4h1v2h-1zM4 -2h7v1h-7zM2 -7h1v7h-1z"/><path id="g189" d="M4 -11h1v1h-1zM3 -10h7v1h-7zM8 -9h1v1h-1zM2 -9h2v1h-2zM1 -8h1v1h-1zM4 -8h4v2h-4zM8 -6h4v1h-4zM0 -6h4v1h-4zM2 -5h8v1h-8zM5 -4h1v1h-1zM9 -4h1v1h-1zM2 -4h1v1h-1zM2 -3h8v1h-8zM5 -2h1v2h-1zM9 -2h1v2h-1zM2 -2h1v2h-1zM2 0h8v1h-8z"/><path id="g190" d="M1 -12h1v1h-1zM7 -12h1v2h-1zM2 -11h2v1h-2zM4 -10h7v1h-7zM1 -8h2v1h-2zM7 -9h1v3h-1zM4 -6h7v1h-7zM3 -5h1v1h-1zM2 -4h1v2h-1zM7 -5h1v4h-1zM1 -2h1v2h-1zM4 -1h8v1h-8z"/><path id="g191" d="M2 -2h1v2h-1z"/><path id="g192" d="M3 -11h1v2h-1zM7 -11h1v2h-1zM7 -9h2v1h-2zM1 -9h5v1h-5zM9 -8h2v1h-2zM3 -8h1v2h-1zM10 -7h1v1h-1zM1 -6h5v1h-5zM7 -8h1v4h-1zM2 -4h8v1h-8zM1 -3h1v3h-1zM9 -3h1v3h-1zM7 -3h1v3h-1zM4 -3h1v3h-1zM1 0h10v1h-10z"/><path id="g193" d="M4 -7h1v1h-1zM1 -7h2v1h-2zM3 -6h2v1h-2zM4 -5h1v3h-1zM0 -6h1v5h-1zM3 -2h2v1h-2zM1 -1h2v1h-2zM4 -1h1v2h-1zM1 1h3v1h-3z"/><path id="g194" d="M8 -11h1v1h-1zM3 -11h1v2h-1zM6 -11h1v2h-1zM9 -10h1v1h-1zM2 -9h1v1h-1zM4 -9h7v1h-7zM7 -8h1v1h-1zM0 -8h3v1h-3zM8 -7h1v1h-1zM10 -7h1v1h-1zM2 -7h1v2h-1zM9 -6h2v1h-2zM5 -6h1v1h-1zM1 -4h10v1h-10zM9 -3h2v1h-2zM4 -3h1v1h-1zM6 -3h1v1h-1zM1 -2h3v1h-3zM7 -2h2v1h-2zM3 -1h1v1h-1zM5 -1h2v1h-2zM8 -1h2v1h-2zM3 0h2v1h-2zM10 0h1v1h-1z"/><path id="g195" d="M4 -12h1v1h-1zM3 -11h5v1h-5zM7 -10h1v1h-1zM2 -10h1v1h-1zM1 -9h9v1h-9zM9 -8h1v1h-1zM2 -7h8v1h-8zM9 -6h1v1h-1zM2 -5h8v1h-8zM5 -4h1v1h-1zM6 -3h1v1h-1zM1 -3h1v2h-1zM3 -3h1v2h-1zM10 -3h1v2h-1zM8 -2h1v1h-1zM3 -1h6v1h-6z"/><path id="g196" d="M7 -11h1v1h-1zM2 -11h1v2h-1zM0 -10h1v1h-1zM9 -10h1v2h-1zM4 -10h1v2h-1zM6 -10h1v3h-1zM1 -9h2v2h-2zM10 -8h1v2h-1zM1 -7h5v1h-5zM6 -6h5v1h-5zM2 -6h1v1h-1zM2 -5h2v1h-2zM7 -5h1v2h-1zM1 -4h2v2h-2zM4 -4h1v2h-1zM6 -3h1v2h-1zM0 -2h1v1h-1zM9 -5h1v5h-1zM2 -2h1v3h-1zM5 -1h1v2h-1zM8 0h2v1h-2z"/><path id="g197" d="M2 -10h8v1h-8zM7 -8h1v2h-1zM4 -7h1v1h-1zM5 -6h2v3h-2zM9 -9h1v7h-1zM2 -9h1v7h-1zM7 -3h1v1h-1zM4 -3h2v1h-2zM3 -2h2v1h-2zM7 -2h3v1h-3zM3 -1h1v1h-1zM9 -1h1v1h-1zM11 -1h1v1h-1zM1 -2h1v3h-1zM10 0h1v1h-1z"/><path id="g198" d="M7 -11h1v2h-1zM1 -10h3v1h-3zM5 -9h6v1h-6zM3 -9h1v3h-1zM7 -8h1v2h-1zM3 -6h8v1h-8zM7 -5h2v1h-2zM1 -9h1v6h-1zM3 -5h1v2h-1zM6 -4h3v1h-3zM9 -3h1v1h-1zM1 -3h3v1h-3zM6 -3h2v1h-2zM1 -2h1v1h-1zM5 -2h1v1h-1zM9 -2h2v1h-2zM4 -1h1v1h-1zM10 -1h1v1h-1zM7 -2h1v3h-1z"/><path id="g199" d="M1 -10h10v1h-10zM2 -8h8v1h-8zM9 -7h1v2h-1zM2 -7h1v2h-1zM2 -5h8v1h-8zM8 -4h1v2h-1zM3 -4h1v3h-1zM7 -2h1v2h-1zM1 0h10v1h-10z"/><path id="g200" d="M8 -11h1v2h-1zM1 -10h4v1h-4zM5 -9h6v1h-6zM1 -8h4v1h-4zM8 -8h1v2h-1zM1 -7h1v2h-1zM4 -7h1v2h-1zM6 -6h5v1h-5zM1 -5h4v1h-4zM6 -5h1v1h-1zM10 -5h1v1h-1zM4 -4h1v1h-1zM1 -4h1v2h-1zM9 -4h1v2h-1zM7 -4h1v2h-1zM3 -3h1v1h-1zM3 -2h2v1h-2zM8 -2h1v1h-1zM9 -1h1v1h-1zM6 -1h2v1h-2zM0 -1h4v1h-4zM5 0h1v1h-1zM10 0h1v1h-1z"/><path id="g201" d="M6 -10h5v1h-5zM4 -11h1v3h-1zM2 -10h1v2h-1zM6 -9h1v1h-1zM7 -8h3v1h-3zM1 -8h5v1h-5zM6 -7h1v2h-1zM2 -7h1v2h-1zM4 -7h1v2h-1zM9 -7h1v3h-1zM1 -5h7v1h-7zM2 -4h1v1h-1zM8 -4h2v2h-2zM9 -2h1v1h-1zM6 -4h1v4h-1zM1 -3h1v3h-1zM8 -1h3v1h-3zM4 -4h1v5h-1zM10 0h1v1h-1zM6 0h2v1h-2z"/><path id="g202" d="M5 -11h1v2h-1zM9 -10h2v1h-2zM2 -9h8v1h-8zM5 -8h1v1h-1zM8 -8h1v1h-1zM1 -7h10v1h-10zM5 -6h1v1h-1zM3 -5h2v1h-2zM7 -4h2v1h-2zM2 -4h3v1h-3zM1 -3h1v1h-1zM4 -3h3v1h-3zM4 -2h1v2h-1zM10 -2h1v2h-1zM4 0h6v1h-6z"/><path id="g203" d="M2 -11h1v3h-1zM7 -10h1v2h-1zM5 -8h6v1h-6zM0 -8h4v1h-4zM5 -7h1v2h-1zM7 -7h1v2h-1zM2 -7h1v2h-1zM10 -7h1v2h-1zM5 -5h6v1h-6zM2 -5h2v1h-2zM0 -4h3v1h-3zM5 -4h1v3h-1zM7 -4h1v3h-1zM10 -4h1v3h-1zM2 -3h1v3h-1zM5 -1h6v1h-6zM5 0h1v1h-1zM1 0h2v1h-2zM10 0h1v1h-1z"/><path id="g204" d="M1 -10h10v1h-10zM5 -9h1v3h-1zM2 -6h8v1h-8zM5 -5h1v4h-1zM1 -1h10v1h-10z"/><path id="g205" d="M0 -8h1v7h-1zM0 -1h5v1h-5z"/><path id="g206" d="M5 -12h5v1h-5zM2 -12h1v2h-1zM9 -11h1v1h-1zM6 -10h3v1h-3zM1 -10h3v1h-3zM2 -9h1v1h-1zM8 -9h1v1h-1zM5 -8h6v1h-6zM2 -8h2v1h-2zM7 -7h1v1h-1zM1 -7h4v1h-4zM10 -7h1v1h-1zM5 -6h6v1h-6zM1 -6h2v1h-2zM0 -5h1v1h-1zM7 -5h1v1h-1zM4 -5h1v1h-1zM10 -5h1v1h-1zM5 -4h6v1h-6zM10 -3h1v2h-1zM2 -5h1v5h-1zM7 -3h1v3h-1zM4 -3h1v3h-1zM9 -1h2v1h-2z"/><path id="g207" d="M1 -11h1v1h-1zM2 -10h9v1h-9zM10 -9h1v1h-1zM5 -9h1v3h-1zM1 -7h1v1h-1zM9 -8h1v3h-1zM2 -6h1v1h-1zM6 -6h1v2h-1zM8 -5h1v1h-1zM3 -4h1v1h-1zM7 -4h2v1h-2zM7 -3h1v1h-1zM2 -3h1v2h-1zM8 -2h1v1h-1zM6 -2h1v1h-1zM5 -1h1v1h-1zM9 -1h1v1h-1zM1 -1h1v2h-1zM4 0h1v1h-1zM10 0h1v1h-1z"/><path id="g208" d="M10 -11h1v1h-1zM1 -11h1v2h-1zM4 -11h1v2h-1zM7 -10h3v1h-3zM1 -9h5v1h-5zM7 -9h1v2h-1zM1 -8h1v1h-1zM4 -8h1v1h-1zM7 -7h5v1h-5zM2 -7h3v1h-3zM1 -6h1v1h-1zM4 -6h1v1h-1zM2 -5h3v1h-3zM7 -6h1v3h-1zM1 -4h1v1h-1zM4 -4h1v1h-1zM0 -3h7v1h-7zM2 -2h1v1h-1zM6 -2h1v2h-1zM4 -2h1v2h-1zM9 -6h1v7h-1zM1 -1h1v2h-1zM5 0h1v1h-1z"/><path id="g209" d="M8 -11h2v1h-2zM2 -10h6v1h-6zM5 -9h1v2h-1zM3 -9h1v2h-1zM8 -9h1v2h-1zM1 -7h10v1h-10zM7 -6h1v1h-1zM4 -6h2v1h-2zM2 -5h2v1h-2zM8 -5h2v1h-2zM1 -4h10v1h-10zM5 -3h1v1h-1zM9 -3h1v1h-1zM2 -3h1v1h-1zM2 -2h8v1h-8zM5 -1h1v1h-1zM9 -1h1v1h-1zM2 -1h1v1h-1zM2 0h8v1h-8z"/><path id="g210" d="M3 -11h1v1h-1zM8 -11h1v1h-1zM1 -10h10v1h-10zM3 -9h1v1h-1zM8 -9h1v1h-1zM2 -8h1v2h-1zM7 -7h4v1h-4zM1 -6h5v1h-5zM7 -6h1v5h-1zM10 -6h1v5h-1zM2 -5h1v4h-1zM5 -5h1v5h-1zM1 -1h1v1h-1zM7 -1h4v1h-4zM3 0h2v1h-2zM7 0h1v1h-1zM0 0h2v1h-2zM10 0h1v1h-1z"/><path id="g211" d="M1 -12h10v1h-10zM2 -10h8v1h-8zM3 -9h6v1h-6zM1 -8h10v1h-10zM1 -7h1v1h-1zM10 -7h1v1h-1zM3 -7h6v2h-6zM2 -5h8v1h-8zM9 -4h1v1h-1zM2 -4h1v1h-1zM2 -3h8v2h-8zM2 -1h1v1h-1zM7 -1h3v1h-3z"/><path id="g212" d="M7 -12h1v1h-1zM4 -12h1v1h-1zM1 -11h10v1h-10zM7 -10h1v1h-1zM4 -10h1v1h-1zM3 -8h1v2h-1zM9 -7h2v1h-2zM6 -8h1v3h-1zM8 -6h1v1h-1zM2 -6h2v1h-2zM1 -5h1v1h-1zM6 -5h2v1h-2zM5 -4h2v1h-2zM6 -3h1v2h-1zM10 -3h1v2h-1zM3 -5h1v5h-1zM7 -1h4v1h-4z"/><path id="g213" d="M1 -12h5v1h-5zM9 -12h1v2h-1zM7 -12h1v2h-1zM1 -11h1v2h-1zM5 -11h1v2h-1zM3 -10h1v1h-1zM7 -10h4v1h-4zM1 -9h7v1h-7zM9 -9h1v2h-1zM1 -8h1v1h-1zM3 -8h1v1h-1zM5 -8h3v1h-3zM7 -7h4v1h-4zM1 -7h5v2h-5zM9 -6h1v2h-1zM7 -6h1v2h-1zM1 -5h2v2h-2zM4 -5h2v2h-2zM7 -4h4v1h-4zM9 -3h1v1h-1zM7 -3h1v1h-1zM1 -3h5v1h-5zM7 -2h5v1h-5zM5 -2h1v1h-1zM0 -2h1v1h-1zM7 -1h1v1h-1zM4 -1h2v1h-2z"/><path id="g214" d="M1 -10h10v1h-10zM8 -9h1v1h-1zM6 -9h1v1h-1zM4 -8h7v1h-7zM1 -7h2v1h-2zM8 -7h1v2h-1zM4 -7h1v2h-1zM6 -7h1v2h-1zM10 -7h1v2h-1zM2 -6h1v1h-1zM8 -5h3v1h-3zM4 -5h2v1h-2zM4 -4h1v1h-1zM10 -4h1v1h-1zM2 -4h1v2h-1zM4 -3h7v1h-7zM4 -2h1v1h-1zM10 -2h1v1h-1zM1 -2h1v2h-1zM4 -1h7v1h-7zM4 0h1v1h-1zM10 0h1v1h-1z"/><path id="g215" d="M0 -7h5v1h-5zM0 -6h1v6h-1zM2 -6h1v6h-1zM4 -6h1v6h-1z"/><path id="g216" d="M1 -9h2v1h-2zM2 -8h1v7h-1zM2 -1h4v1h-4z"/><path id="g217" d="M1 -11h1v1h-1zM2 -10h10v1h-10zM1 -7h2v1h-2zM2 -6h1v1h-1zM3 -4h1v2h-1zM2 -2h1v1h-1zM8 -9h1v9h-1zM1 -1h2v1h-2zM1 0h1v1h-1zM6 0h3v1h-3z"/><path id="g218" d="M3 -11h1v2h-1zM8 -11h1v2h-1zM7 -9h1v1h-1zM1 -8h10v1h-10zM2 -4h8v1h-8zM1 -1h10v1h-10z"/><path id="g219" d="M1 -11h1v1h-1zM2 -10h2v1h-2zM7 -11h1v3h-1zM3 -9h1v1h-1zM4 -8h7v1h-7zM1 -7h1v1h-1zM7 -7h1v2h-1zM4 -7h1v2h-1zM10 -7h1v2h-1zM2 -6h1v1h-1zM4 -5h7v1h-7zM7 -4h1v3h-1zM4 -4h1v3h-1zM10 -4h1v3h-1zM2 -3h1v2h-1zM4 -1h7v1h-7zM1 -1h1v2h-1zM4 0h1v1h-1zM10 0h1v1h-1z"/><path id="g220" d="M1 -10h10v1h-10zM6 -9h1v9h-1zM3 0h4v1h-4z"/><path id="g221" d="M8 -11h2v1h-2zM2 -10h6v1h-6zM5 -9h1v1h-1zM1 -8h10v1h-10zM7 -7h1v1h-1zM4 -7h2v1h-2zM5 -6h1v1h-1zM3 -6h1v1h-1zM8 -6h1v1h-1zM1 -5h2v1h-2zM9 -5h2v1h-2zM2 -4h8v1h-8zM9 -3h1v1h-1zM2 -3h1v1h-1zM2 -2h8v1h-8zM9 -1h1v1h-1zM2 -1h1v1h-1zM2 0h8v1h-8z"/><path id="g222" d="M4 -11h1v1h-1zM3 -10h5v1h-5zM7 -9h1v1h-1zM2 -9h1v1h-1zM1 -8h9v1h-9zM5 -7h1v2h-1zM9 -7h1v2h-1zM2 -7h1v2h-1zM2 -5h8v1h-8zM5 -4h1v1h-1zM9 -4h1v1h-1zM2 -4h1v1h-1zM2 -3h8v1h-8zM1 -1h10v1h-10z"/><path id="g223" d="M5 -12h2v1h-2zM4 -11h4v1h-4zM3 -10h2v1h-2zM7 -10h2v1h-2zM1 -9h2v1h-2zM9 -9h3v1h-3zM4 -9h4v1h-4zM3 -8h6v1h-6zM2 -7h1v1h-1zM8 -7h1v1h-1zM3 -6h6v1h-6zM2 -4h8v1h-8zM9 -3h1v2h-1zM7 -3h1v2h-1zM2 -3h1v2h-1zM4 -3h1v2h-1zM1 -1h10v1h-10z"/><path id="g224" d="M3 -11h1v1h-1zM1 -10h10v1h-10zM3 -9h1v1h-1zM7 -9h1v1h-1zM6 -8h5v1h-5zM1 -8h4v1h-4zM1 -5h10v1h-10zM3 -4h2v2h-2zM6 -3h1v1h-1zM1 -4h1v3h-1zM10 -3h1v2h-1zM5 -2h2v1h-2zM8 -4h1v4h-1zM3 -2h1v2h-1zM7 0h2v1h-2zM2 0h2v1h-2z"/><path id="g225" d="M3 -10h2v1h-2zM4 -9h1v1h-1zM1 -8h2v1h-2zM3 -7h1v1h-1zM6 -11h1v6h-1zM1 -5h10v1h-10zM6 -4h1v1h-1zM5 -3h1v1h-1zM7 -3h1v1h-1zM4 -2h1v1h-1zM8 -2h1v1h-1zM9 -1h2v1h-2zM2 -1h2v1h-2zM1 0h1v1h-1zM10 0h1v1h-1z"/><path id="g226" d="M3 -11h1v3h-1zM1 -10h1v2h-1zM6 -10h1v2h-1zM6 -8h5v1h-5zM1 -8h4v1h-4zM3 -7h1v2h-1zM5 -7h2v2h-2zM0 -7h1v2h-1zM9 -7h1v3h-1zM3 -5h2v1h-2zM6 -5h1v1h-1zM1 -4h3v1h-3zM7 -4h2v3h-2zM9 -1h1v1h-1zM6 -1h1v1h-1zM3 -3h1v4h-1zM5 0h1v1h-1zM10 0h1v1h-1z"/><path id="g227" d="M5 -12h1v1h-1zM1 -11h10v1h-10zM3 -10h1v1h-1zM8 -10h1v1h-1zM1 -9h10v1h-10zM2 -7h8v2h-8zM5 -5h1v1h-1zM9 -5h1v1h-1zM2 -5h1v1h-1zM2 -4h8v1h-8zM1 -3h10v1h-10zM5 -2h1v1h-1zM1 -1h10v1h-10z"/><path id="g228" d="M7 -11h1v2h-1zM2 -11h1v3h-1zM5 -9h6v1h-6zM1 -8h3v1h-3zM7 -8h1v3h-1zM10 -8h1v3h-1zM2 -7h1v3h-1zM4 -5h7v1h-7zM7 -4h2v1h-2zM2 -4h2v1h-2zM8 -3h1v1h-1zM1 -3h2v1h-2zM6 -3h1v2h-1zM9 -2h1v1h-1zM5 -1h1v1h-1zM9 -1h2v1h-2zM4 0h1v1h-1zM10 0h1v1h-1z"/><path id="g229" d="M8 -11h2v1h-2zM2 -10h6v1h-6zM2 -9h1v3h-1zM2 -6h9v1h-9zM2 -5h1v4h-1zM7 -5h1v6h-1zM1 -1h1v2h-1z"/><path id="g230" d="M9 -11h1v1h-1zM2 -11h1v2h-1zM6 -10h3v1h-3zM1 -9h4v1h-4zM7 -9h1v2h-1zM4 -8h1v1h-1zM10 -8h1v1h-1zM4 -7h6v1h-6zM1 -8h2v3h-2zM4 -6h1v1h-1zM7 -6h1v2h-1zM1 -5h4v1h-4zM10 -5h1v1h-1zM1 -4h2v1h-2zM5 -4h5v1h-5zM2 -3h1v2h-1zM4 -3h1v2h-1zM7 -3h1v3h-1zM1 -1h4v1h-4zM10 -1h1v1h-1zM8 0h3v1h-3z"/></defs>
<rect x="0" y="0" width="1024" height="644" fill="#E6E6D5"/>
<rect x="0" y="0" width="1024" height="24" fill="#0063FF"/>
<rect x="21" y="3" width="934" height="6" fill="#0066CC"/>
<rect x="0" y="22" width="1024" height="2" fill="#0028CC"/>
<rect x="1023" y="0" width="1" height="24" fill="#0018B0"/>
<rect x="2" y="2" width="16" height="16" fill="#FFFFFF"/>
<rect x="6" y="2" width="8" height="16" fill="#000000"/>
<rect x="0" y="0" width="1" height="24" fill="#0A50D8"/>
<g fill="none" stroke="#FF0000" shape-rendering="auto"><path d="M13 3.5c-4 1-10 3.5-10 6.5c0 2.5 4 2.8 7 2" stroke-width="1.8"/><circle cx="11.5" cy="10" r="2" stroke-width="1.5"/><path d="M13 11h4M9.5 13.5c2 0 4-0.5 5-1.5" stroke-width="1.6"/></g>
<g fill="#0A246A"><use href="#g0" x="22" y="17"/><use href="#g1" x="36" y="17"/><use href="#g2" x="50" y="17"/><use href="#g3" x="64" y="17"/><use href="#g4" x="78" y="17"/></g>
<g fill="#FFFFFF"><use href="#g0" x="21" y="16"/><use href="#g1" x="35" y="16"/><use href="#g2" x="49" y="16"/><use href="#g3" x="63" y="16"/><use href="#g4" x="77" y="16"/></g>
<rect x="955.5" y="1.5" width="20" height="19.5" rx="3" fill="url(#tbMin)" stroke="#FFFFFF" stroke-width="1" shape-rendering="auto"/>
<path d="M965 4a6 6 0 0 0 0 10" fill="none" stroke="#8DB2FF" stroke-width="2.5" shape-rendering="auto"/>
<rect x="960" y="13" width="7" height="3" fill="#FFFFFF"/>
<rect x="978.5" y="1.5" width="20" height="19.5" rx="3" fill="url(#tbMin)" stroke="#FFFFFF" stroke-width="1" shape-rendering="auto"/>
<rect x="982.75" y="9.75" width="5.5" height="5.5" fill="none" stroke="#FFFFFF" stroke-width="1.5"/>
<path d="M985.75 9v-3.25h6.25v6.25h-2" fill="none" stroke="#FFFFFF" stroke-width="1.5"/>
<rect x="1001.5" y="1.5" width="20" height="19.5" rx="3" fill="url(#tbClose)" stroke="#FFFFFF" stroke-width="1" shape-rendering="auto"/>
<path d="M1006.5 5.5l9 9.5M1015.5 5.5l-9 9.5" stroke="#FFFFFF" stroke-width="2.2" shape-rendering="auto"/>
<rect x="0" y="24" width="1024" height="1" fill="#F5F3EA"/>
<g fill="#000"><use href="#g5" x="6" y="40"/><use href="#g6" x="18" y="40"/><use href="#g7" x="30" y="38"/><use href="#g8" x="36" y="38"/><use href="#g9" x="42" y="38"/></g>
<rect x="36" y="40" width="6" height="1" fill="#000"/>
<g fill="#000"><use href="#g10" x="60" y="40"/><use href="#g11" x="72" y="40"/><use href="#g7" x="84" y="38"/><use href="#g12" x="90" y="38"/><use href="#g9" x="96" y="38"/></g>
<rect x="90" y="40" width="6" height="1" fill="#000"/>
<g fill="#000"><use href="#g13" x="114" y="40"/><use href="#g14" x="126" y="40"/><use href="#g7" x="138" y="38"/><use href="#g15" x="144" y="38"/><use href="#g9" x="150" y="38"/></g>
<rect x="144" y="40" width="6" height="1" fill="#000"/>
<g fill="#000"><use href="#g16" x="168" y="40"/><use href="#g17" x="180" y="40"/><use href="#g7" x="192" y="38"/><use href="#g18" x="198" y="38"/><use href="#g9" x="204" y="38"/></g>
<rect x="198" y="40" width="6" height="1" fill="#000"/>
<g fill="#000"><use href="#g19" x="222" y="40"/><use href="#g20" x="234" y="40"/><use href="#g7" x="246" y="38"/><use href="#g21" x="252" y="38"/><use href="#g9" x="258" y="38"/></g>
<rect x="252" y="40" width="6" height="1" fill="#000"/>
<rect x="0" y="43" width="1024" height="1" fill="#FFFFFF"/>
<rect x="0" y="44" width="1024" height="1" fill="#ACA899"/>
<rect x="0" y="45" width="1024" height="1" fill="#FFFFFF"/>
<rect x="3" y="48" width="1" height="18" fill="#ACA899"/>
<rect x="4" y="48" width="1" height="18" fill="#FFFFFF"/>
<rect x="113" y="48" width="1" height="18" fill="#ACA899"/>
<rect x="114" y="48" width="1" height="18" fill="#FFFFFF"/>
<rect x="274" y="48" width="1" height="18" fill="#ACA899"/>
<rect x="275" y="48" width="1" height="18" fill="#FFFFFF"/>
<rect x="333" y="48" width="1" height="18" fill="#ACA899"/>
<rect x="334" y="48" width="1" height="18" fill="#FFFFFF"/>
<rect x="443" y="48" width="1" height="18" fill="#ACA899"/>
<rect x="444" y="48" width="1" height="18" fill="#FFFFFF"/>
<rect x="13" y="50" width="15" height="2" fill="#008000"/>
<rect x="13" y="52" width="15" height="12" fill="#FFFFFF"/>
<rect x="13" y="52" width="3" height="11" fill="#D4D4D4"/>
<rect x="19" y="52" width="1" height="11" fill="#C4C4C4"/>
<rect x="23" y="52" width="1" height="11" fill="#C4C4C4"/>
<rect x="16" y="54" width="11" height="1" fill="#C4C4C4"/>
<rect x="13" y="54" width="3" height="1" fill="#8C8C8C"/>
<rect x="16" y="57" width="11" height="1" fill="#C4C4C4"/>
<rect x="13" y="57" width="3" height="1" fill="#8C8C8C"/>
<rect x="16" y="60" width="11" height="1" fill="#C4C4C4"/>
<rect x="13" y="60" width="3" height="1" fill="#8C8C8C"/>
<rect x="27" y="52" width="1" height="12" fill="#888888"/>
<rect x="13" y="63" width="15" height="1" fill="#888888"/>
<g fill="#000"><use href="#g10" x="32" y="62"/><use href="#g22" x="44" y="62"/></g>
<path d="M70.5 58l-5 5.5" stroke="#606060" stroke-width="3.2" shape-rendering="auto"/>
<path d="M70 57.5l-4.8 5.2" stroke="#F4B040" stroke-width="2" shape-rendering="auto"/>
<path d="M69.3 57.2l-4.5 5" stroke="#F05050" stroke-width="0.8" shape-rendering="auto"/>
<circle cx="74.3" cy="54" r="5" fill="#DDF2FF" stroke="#7C86C0" stroke-width="1.2" shape-rendering="auto"/>
<rect x="75" y="55" width="2" height="2" fill="#FFFFFF"/>
<g fill="#000"><use href="#g13" x="83" y="62"/><use href="#g23" x="95" y="62"/></g>
<path d="M125.5 50.5h7l3 3v10h-10z" fill="#FFFFFF" stroke="#283070" stroke-width="1"/>
<rect x="126" y="60" width="9" height="3" fill="#D8DCEC"/>
<rect x="132" y="51" width="1" height="3" fill="#B0B8D8"/>
<rect x="132" y="53" width="3" height="1" fill="#B0B8D8"/>
<g fill="#000"><use href="#g24" x="141" y="62"/><use href="#g25" x="153" y="62"/></g>
<path d="M174.5 51.5h5l1 2h6v3h-12z" fill="#F8D898" stroke="#A07828" stroke-width="1"/>
<path d="M177.5 55.5h12l-3 7h-12z" fill="#F0B848" stroke="#A07828" stroke-width="1"/>
<g fill="#000"><use href="#g13" x="192" y="62"/><use href="#g26" x="204" y="62"/></g>
<rect x="225" y="50" width="5" height="5" fill="#0000FF"/>
<rect x="236" y="51" width="5" height="5" fill="#FF00FF"/>
<rect x="236" y="58" width="5" height="5" fill="#00FFFF"/>
<rect x="230" y="52" width="3" height="1" fill="#808080"/>
<rect x="233" y="52" width="1" height="9" fill="#808080"/>
<rect x="233" y="53" width="3" height="1" fill="#808080"/>
<rect x="233" y="60" width="3" height="1" fill="#808080"/>
<g fill="#000"><use href="#g27" x="244" y="62"/><use href="#g28" x="256" y="62"/></g>
<g shape-rendering="auto"><path d="M290 56v7.5h2v-2.5" fill="none" stroke="#4A4AA0" stroke-width="2"/><circle cx="292.5" cy="54.5" r="4.6" fill="#C8E8F8" stroke="#5050A8" stroke-width="1.3"/><path d="M295 58l3 5.5" fill="none" stroke="#806000" stroke-width="2.6"/><path d="M295 58l3 5.5" fill="none" stroke="#F8C820" stroke-width="1.4"/><circle cx="294" cy="56" r="3.3" fill="#F8D040" stroke="#E09000" stroke-width="1.2"/><circle cx="293.6" cy="55.6" r="1.2" fill="#202080"/></g>
<g fill="#000"><use href="#g29" x="302" y="62"/><use href="#g30" x="314" y="62"/></g>
<rect x="345" y="50" width="11" height="13" fill="#303030"/>
<rect x="346" y="51" width="9" height="11" fill="#F0F0F0"/>
<rect x="347" y="53" width="6" height="1" fill="#787878"/>
<rect x="347" y="55" width="6" height="1" fill="#787878"/>
<rect x="347" y="57" width="6" height="1" fill="#787878"/>
<rect x="347" y="59" width="6" height="1" fill="#787878"/>
<rect x="351" y="57" width="7" height="6" fill="#003050"/>
<rect x="352" y="58" width="5" height="4" fill="#10A8D8"/>
<g fill="#000"><use href="#g31" x="361" y="62"/><use href="#g32" x="373" y="62"/></g>
<path d="M395.5 49.5h8l4 4v11h-12z" fill="#FFFFFF" stroke="#303030" stroke-width="1"/>
<rect x="403" y="50" width="1" height="4" fill="#A0A0A0"/>
<rect x="403" y="53" width="4" height="1" fill="#A0A0A0"/>
<g shape-rendering="auto" fill="none" stroke="#30A030" stroke-width="1.3"><path d="M402.5 53a3.2 3.2 0 0 0 -2 6"/><path d="M400.5 62a3.2 3.2 0 0 0 2 -6"/></g>
<path d="M401 53l3 -2v4z" fill="#30A030" shape-rendering="auto"/>
<path d="M402 62l-3 2v-4z" fill="#30A030" shape-rendering="auto"/>
<g fill="#000"><use href="#g33" x="412" y="62"/><use href="#g24" x="424" y="62"/></g>
<circle cx="460.5" cy="55.5" r="6.6" fill="#2E64D8" stroke="#1A3C90" stroke-width="1" shape-rendering="auto"/>
<circle cx="460.5" cy="55.5" r="4.8" fill="none" stroke="#9CC0FF" stroke-width="1" shape-rendering="auto"/>
<text x="460.5" y="59" font-family="Liberation Sans" font-weight="bold" font-size="10" fill="#FFFFFF" text-anchor="middle">?</text>
<g fill="#000"><use href="#g19" x="471" y="62"/><use href="#g20" x="483" y="62"/></g>
<rect x="0" y="68" width="288" height="1" fill="#ACA899"/>
<rect x="0" y="68" width="1" height="20" fill="#ACA899"/>
<rect x="1" y="69" width="286" height="1" fill="#716F64"/>
<rect x="1" y="69" width="1" height="18" fill="#716F64"/>
<rect x="0" y="87" width="288" height="1" fill="#FFFFFF"/>
<rect x="287" y="68" width="1" height="20" fill="#FFFFFF"/>
<rect x="1" y="86" width="286" height="1" fill="#F1EFE2"/>
<rect x="286" y="69" width="1" height="18" fill="#F1EFE2"/>
<g fill="#000"><use href="#g34" x="2" y="81"/><use href="#g35" x="14" y="81"/></g>
<rect x="0" y="88" width="288" height="1" fill="#ACA899"/>
<rect x="0" y="88" width="1" height="613" fill="#ACA899"/>
<rect x="1" y="89" width="286" height="1" fill="#716F64"/>
<rect x="1" y="89" width="1" height="611" fill="#716F64"/>
<rect x="0" y="700" width="288" height="1" fill="#FFFFFF"/>
<rect x="287" y="88" width="1" height="613" fill="#FFFFFF"/>
<rect x="1" y="699" width="286" height="1" fill="#F1EFE2"/>
<rect x="286" y="89" width="1" height="611" fill="#F1EFE2"/>
<rect x="2" y="90" width="284" height="610" fill="#FFFFFF"/>
<line x1="29.5" y1="90" x2="29.5" y2="644" stroke="#A59D84" stroke-width="1" stroke-dasharray="1,1"/>
<line x1="48.5" y1="104" x2="48.5" y2="258" stroke="#A59D84" stroke-width="1" stroke-dasharray="1,1"/>
<line x1="67.5" y1="120" x2="67.5" y2="242" stroke="#A59D84" stroke-width="1" stroke-dasharray="1,1"/>
<line x1="67.5" y1="264" x2="67.5" y2="644" stroke="#A59D84" stroke-width="1" stroke-dasharray="1,1"/>
<line x1="30" y1="98.5" x2="40" y2="98.5" stroke="#A59D84" stroke-width="1" stroke-dasharray="1,1"/>
<rect x="25" y="94" width="9" height="9" fill="#A5A08A"/>
<rect x="26" y="95" width="7" height="7" fill="#FFFFFF"/>
<rect x="27" y="98" width="5" height="1" fill="#000000"/>
<path d="M41.5 93h5l1 2h8v10h-14z" fill="#404040"/>
<path d="M40.5 91.5h5l1 2h8v10h-14z" fill="url(#chk)" stroke="#707070" stroke-width="1"/>
<rect x="41" y="94" width="14" height="1" fill="#FFFFC0"/>
<g fill="#000"><use href="#g36" x="60" y="103"/><use href="#g37" x="72" y="103"/><use href="#g38" x="84" y="103"/><use href="#g39" x="96" y="103"/></g>
<line x1="49" y1="114.5" x2="59" y2="114.5" stroke="#A59D84" stroke-width="1" stroke-dasharray="1,1"/>
<rect x="44" y="110" width="9" height="9" fill="#A5A08A"/>
<rect x="45" y="111" width="7" height="7" fill="#FFFFFF"/>
<rect x="46" y="114" width="5" height="1" fill="#000000"/>
<path d="M60.5 109h5l1 2h8v10h-14z" fill="#404040"/>
<path d="M59.5 107.5h5l1 2h8v10h-14z" fill="url(#chk)" stroke="#707070" stroke-width="1"/>
<rect x="60" y="110" width="14" height="1" fill="#FFFFC0"/>
<g fill="#000"><use href="#g40" x="79" y="119"/><use href="#g41" x="91" y="119"/><use href="#g36" x="103" y="119"/><use href="#g37" x="115" y="119"/></g>
<line x1="68" y1="130.5" x2="78" y2="130.5" stroke="#A59D84" stroke-width="1" stroke-dasharray="1,1"/>
<rect x="78" y="123" width="15" height="2" fill="#008000"/>
<rect x="78" y="125" width="15" height="12" fill="#FFFFFF"/>
<rect x="78" y="125" width="3" height="11" fill="#D4D4D4"/>
<rect x="84" y="125" width="1" height="11" fill="#C4C4C4"/>
<rect x="88" y="125" width="1" height="11" fill="#C4C4C4"/>
<rect x="81" y="127" width="11" height="1" fill="#C4C4C4"/>
<rect x="78" y="127" width="3" height="1" fill="#8C8C8C"/>
<rect x="81" y="130" width="11" height="1" fill="#C4C4C4"/>
<rect x="78" y="130" width="3" height="1" fill="#8C8C8C"/>
<rect x="81" y="133" width="11" height="1" fill="#C4C4C4"/>
<rect x="78" y="133" width="3" height="1" fill="#8C8C8C"/>
<rect x="92" y="125" width="1" height="12" fill="#888888"/>
<rect x="78" y="136" width="15" height="1" fill="#888888"/>
<g fill="#000"><use href="#g40" x="98" y="135"/><use href="#g41" x="110" y="135"/><use href="#g42" x="122" y="133"/><use href="#g43" x="128" y="135"/><use href="#g41" x="140" y="135"/><use href="#g44" x="152" y="135"/><use href="#g45" x="164" y="135"/><use href="#g46" x="176" y="135"/><use href="#g37" x="188" y="135"/><use href="#g47" x="200" y="135"/></g>
<line x1="68" y1="146.5" x2="78" y2="146.5" stroke="#A59D84" stroke-width="1" stroke-dasharray="1,1"/>
<rect x="78" y="139" width="15" height="2" fill="#008000"/>
<rect x="78" y="141" width="15" height="12" fill="#FFFFFF"/>
<rect x="78" y="141" width="3" height="11" fill="#D4D4D4"/>
<rect x="84" y="141" width="1" height="11" fill="#C4C4C4"/>
<rect x="88" y="141" width="1" height="11" fill="#C4C4C4"/>
<rect x="81" y="143" width="11" height="1" fill="#C4C4C4"/>
<rect x="78" y="143" width="3" height="1" fill="#8C8C8C"/>
<rect x="81" y="146" width="11" height="1" fill="#C4C4C4"/>
<rect x="78" y="146" width="3" height="1" fill="#8C8C8C"/>
<rect x="81" y="149" width="11" height="1" fill="#C4C4C4"/>
<rect x="78" y="149" width="3" height="1" fill="#8C8C8C"/>
<rect x="92" y="141" width="1" height="12" fill="#888888"/>
<rect x="78" y="152" width="15" height="1" fill="#888888"/>
<g fill="#000"><use href="#g40" x="98" y="151"/><use href="#g41" x="110" y="151"/><use href="#g42" x="122" y="149"/><use href="#g43" x="128" y="151"/><use href="#g41" x="140" y="151"/><use href="#g48" x="152" y="151"/><use href="#g31" x="164" y="151"/><use href="#g49" x="176" y="151"/><use href="#g37" x="188" y="151"/><use href="#g47" x="200" y="151"/></g>
<line x1="68" y1="162.5" x2="78" y2="162.5" stroke="#A59D84" stroke-width="1" stroke-dasharray="1,1"/>
<rect x="78" y="155" width="15" height="2" fill="#008000"/>
<rect x="78" y="157" width="15" height="12" fill="#FFFFFF"/>
<rect x="78" y="157" width="3" height="11" fill="#D4D4D4"/>
<rect x="84" y="157" width="1" height="11" fill="#C4C4C4"/>
<rect x="88" y="157" width="1" height="11" fill="#C4C4C4"/>
<rect x="81" y="159" width="11" height="1" fill="#C4C4C4"/>
<rect x="78" y="159" width="3" height="1" fill="#8C8C8C"/>
<rect x="81" y="162" width="11" height="1" fill="#C4C4C4"/>
<rect x="78" y="162" width="3" height="1" fill="#8C8C8C"/>
<rect x="81" y="165" width="11" height="1" fill="#C4C4C4"/>
<rect x="78" y="165" width="3" height="1" fill="#8C8C8C"/>
<rect x="92" y="157" width="1" height="12" fill="#888888"/>
<rect x="78" y="168" width="15" height="1" fill="#888888"/>
<g fill="#000"><use href="#g40" x="98" y="167"/><use href="#g41" x="110" y="167"/><use href="#g36" x="122" y="167"/><use href="#g37" x="134" y="167"/><use href="#g50" x="146" y="167"/><use href="#g51" x="158" y="167"/><use href="#g52" x="170" y="167"/></g>
<line x1="68" y1="178.5" x2="78" y2="178.5" stroke="#A59D84" stroke-width="1" stroke-dasharray="1,1"/>
<rect x="78" y="171" width="15" height="2" fill="#008000"/>
<rect x="78" y="173" width="15" height="12" fill="#FFFFFF"/>
<rect x="78" y="173" width="3" height="11" fill="#D4D4D4"/>
<rect x="84" y="173" width="1" height="11" fill="#C4C4C4"/>
<rect x="88" y="173" width="1" height="11" fill="#C4C4C4"/>
<rect x="81" y="175" width="11" height="1" fill="#C4C4C4"/>
<rect x="78" y="175" width="3" height="1" fill="#8C8C8C"/>
<rect x="81" y="178" width="11" height="1" fill="#C4C4C4"/>
<rect x="78" y="178" width="3" height="1" fill="#8C8C8C"/>
<rect x="81" y="181" width="11" height="1" fill="#C4C4C4"/>
<rect x="78" y="181" width="3" height="1" fill="#8C8C8C"/>
<rect x="92" y="173" width="1" height="12" fill="#888888"/>
<rect x="78" y="184" width="15" height="1" fill="#888888"/>
<g fill="#000"><use href="#g40" x="98" y="183"/><use href="#g41" x="110" y="183"/><use href="#g50" x="122" y="183"/><use href="#g53" x="134" y="183"/><use href="#g49" x="146" y="183"/><use href="#g37" x="158" y="183"/><use href="#g47" x="170" y="183"/></g>
<line x1="68" y1="194.5" x2="78" y2="194.5" stroke="#A59D84" stroke-width="1" stroke-dasharray="1,1"/>
<rect x="78" y="187" width="15" height="2" fill="#008000"/>
<rect x="78" y="189" width="15" height="12" fill="#FFFFFF"/>
<rect x="78" y="189" width="3" height="11" fill="#D4D4D4"/>
<rect x="84" y="189" width="1" height="11" fill="#C4C4C4"/>
<rect x="88" y="189" width="1" height="11" fill="#C4C4C4"/>
<rect x="81" y="191" width="11" height="1" fill="#C4C4C4"/>
<rect x="78" y="191" width="3" height="1" fill="#8C8C8C"/>
<rect x="81" y="194" width="11" height="1" fill="#C4C4C4"/>
<rect x="78" y="194" width="3" height="1" fill="#8C8C8C"/>
<rect x="81" y="197" width="11" height="1" fill="#C4C4C4"/>
<rect x="78" y="197" width="3" height="1" fill="#8C8C8C"/>
<rect x="92" y="189" width="1" height="12" fill="#888888"/>
<rect x="78" y="200" width="15" height="1" fill="#888888"/>
<g fill="#000"><use href="#g40" x="98" y="199"/><use href="#g41" x="110" y="199"/><use href="#g50" x="122" y="199"/><use href="#g54" x="134" y="199"/><use href="#g46" x="146" y="199"/><use href="#g37" x="158" y="199"/><use href="#g47" x="170" y="199"/></g>
<line x1="68" y1="210.5" x2="78" y2="210.5" stroke="#A59D84" stroke-width="1" stroke-dasharray="1,1"/>
<path d="M78.5 203.5h5l1 2h8v9h-14z" fill="url(#chk)" stroke="#000000" stroke-width="1"/>
<rect x="79" y="206" width="13" height="1" fill="#FFFFA0"/>
<circle cx="86.6" cy="210.6" r="3.6" fill="#F4FCFF" stroke="#000" stroke-width="1.3" shape-rendering="auto"/>
<path d="M89.4 213.4l3.6 3.6" stroke="#E00000" stroke-width="2.8" shape-rendering="auto"/>
<path d="M85.6 211.8l2 -2.2" stroke="#30C8E8" stroke-width="1.2" shape-rendering="auto"/>
<g fill="#000"><use href="#g40" x="98" y="215"/><use href="#g41" x="110" y="215"/><use href="#g42" x="122" y="213"/><use href="#g43" x="128" y="215"/><use href="#g41" x="140" y="215"/><use href="#g48" x="152" y="215"/><use href="#g31" x="164" y="215"/><use href="#g47" x="176" y="215"/><use href="#g55" x="188" y="213"/><use href="#g56" x="194" y="215"/><use href="#g57" x="206" y="215"/></g>
<line x1="68" y1="226.5" x2="78" y2="226.5" stroke="#A59D84" stroke-width="1" stroke-dasharray="1,1"/>
<path d="M78.5 219.5h5l1 2h8v9h-14z" fill="url(#chk)" stroke="#000000" stroke-width="1"/>
<rect x="79" y="222" width="13" height="1" fill="#FFFFA0"/>
<circle cx="86.6" cy="226.6" r="3.6" fill="#F4FCFF" stroke="#000" stroke-width="1.3" shape-rendering="auto"/>
<path d="M89.4 229.4l3.6 3.6" stroke="#E00000" stroke-width="2.8" shape-rendering="auto"/>
<path d="M85.6 227.8l2 -2.2" stroke="#30C8E8" stroke-width="1.2" shape-rendering="auto"/>
<g fill="#000"><use href="#g40" x="98" y="231"/><use href="#g41" x="110" y="231"/><use href="#g42" x="122" y="229"/><use href="#g43" x="128" y="231"/><use href="#g41" x="140" y="231"/><use href="#g58" x="152" y="231"/><use href="#g59" x="164" y="231"/><use href="#g60" x="176" y="231"/><use href="#g61" x="188" y="231"/><use href="#g62" x="200" y="231"/><use href="#g63" x="212" y="231"/><use href="#g64" x="224" y="231"/></g>
<line x1="68" y1="242.5" x2="78" y2="242.5" stroke="#A59D84" stroke-width="1" stroke-dasharray="1,1"/>
<rect x="80" y="235" width="14" height="14" fill="#000000"/>
<rect x="81" y="237" width="12" height="11" fill="#FFFFFF"/>
<rect x="80" y="235" width="14" height="2" fill="#000080"/>
<rect x="83" y="239" width="3" height="1" fill="#808080"/>
<rect x="87" y="239" width="2" height="1" fill="#808080"/>
<path d="M82 246l4 -4l2 1.5l3 -2.5" fill="none" stroke="#303030" stroke-width="1" shape-rendering="auto"/>
<rect x="78" y="246" width="5" height="5" fill="#004050"/>
<rect x="83" y="246" width="5" height="5" fill="#004050"/>
<rect x="79" y="247" width="3" height="3" fill="#00E8F8"/>
<rect x="84" y="247" width="3" height="3" fill="#00E8F8"/>
<g fill="#000"><use href="#g40" x="98" y="247"/><use href="#g41" x="110" y="247"/><use href="#g36" x="122" y="247"/><use href="#g37" x="134" y="247"/><use href="#g49" x="146" y="247"/><use href="#g46" x="158" y="247"/><use href="#g37" x="170" y="247"/><use href="#g65" x="182" y="247"/><use href="#g66" x="194" y="247"/><use href="#g67" x="206" y="247"/></g>
<line x1="49" y1="258.5" x2="59" y2="258.5" stroke="#A59D84" stroke-width="1" stroke-dasharray="1,1"/>
<rect x="44" y="254" width="9" height="9" fill="#A5A08A"/>
<rect x="45" y="255" width="7" height="7" fill="#FFFFFF"/>
<rect x="46" y="258" width="5" height="1" fill="#000000"/>
<path d="M60.5 253h5l1 2h8v10h-14z" fill="#404040"/>
<path d="M59.5 251.5h5l1 2h8v10h-14z" fill="url(#chk)" stroke="#707070" stroke-width="1"/>
<rect x="60" y="254" width="14" height="1" fill="#FFFFC0"/>
<g fill="#000"><use href="#g68" x="79" y="263"/><use href="#g69" x="91" y="263"/><use href="#g36" x="103" y="263"/><use href="#g37" x="115" y="263"/></g>
<line x1="68" y1="274.5" x2="78" y2="274.5" stroke="#A59D84" stroke-width="1" stroke-dasharray="1,1"/>
<rect x="78" y="267" width="15" height="2" fill="#008000"/>
<rect x="78" y="269" width="15" height="12" fill="#FFFFFF"/>
<rect x="78" y="269" width="3" height="11" fill="#D4D4D4"/>
<rect x="84" y="269" width="1" height="11" fill="#C4C4C4"/>
<rect x="88" y="269" width="1" height="11" fill="#C4C4C4"/>
<rect x="81" y="271" width="11" height="1" fill="#C4C4C4"/>
<rect x="78" y="271" width="3" height="1" fill="#8C8C8C"/>
<rect x="81" y="274" width="11" height="1" fill="#C4C4C4"/>
<rect x="78" y="274" width="3" height="1" fill="#8C8C8C"/>
<rect x="81" y="277" width="11" height="1" fill="#C4C4C4"/>
<rect x="78" y="277" width="3" height="1" fill="#8C8C8C"/>
<rect x="92" y="269" width="1" height="12" fill="#888888"/>
<rect x="78" y="280" width="15" height="1" fill="#888888"/>
<g fill="#000"><use href="#g70" x="98" y="279"/><use href="#g59" x="110" y="279"/><use href="#g49" x="122" y="279"/><use href="#g37" x="134" y="279"/><use href="#g47" x="146" y="279"/></g>
<line x1="68" y1="290.5" x2="78" y2="290.5" stroke="#A59D84" stroke-width="1" stroke-dasharray="1,1"/>
<rect x="78" y="283" width="15" height="2" fill="#008000"/>
<rect x="78" y="285" width="15" height="12" fill="#FFFFFF"/>
<rect x="78" y="285" width="3" height="11" fill="#D4D4D4"/>
<rect x="84" y="285" width="1" height="11" fill="#C4C4C4"/>
<rect x="88" y="285" width="1" height="11" fill="#C4C4C4"/>
<rect x="81" y="287" width="11" height="1" fill="#C4C4C4"/>
<rect x="78" y="287" width="3" height="1" fill="#8C8C8C"/>
<rect x="81" y="290" width="11" height="1" fill="#C4C4C4"/>
<rect x="78" y="290" width="3" height="1" fill="#8C8C8C"/>
<rect x="81" y="293" width="11" height="1" fill="#C4C4C4"/>
<rect x="78" y="293" width="3" height="1" fill="#8C8C8C"/>
<rect x="92" y="285" width="1" height="12" fill="#888888"/>
<rect x="78" y="296" width="15" height="1" fill="#888888"/>
<g fill="#000"><use href="#g70" x="98" y="295"/><use href="#g59" x="110" y="295"/><use href="#g47" x="122" y="295"/></g>
<line x1="68" y1="306.5" x2="78" y2="306.5" stroke="#A59D84" stroke-width="1" stroke-dasharray="1,1"/>
<rect x="63" y="302" width="9" height="9" fill="#A5A08A"/>
<rect x="64" y="303" width="7" height="7" fill="#FFFFFF"/>
<rect x="65" y="306" width="5" height="1" fill="#000000"/>
<rect x="67" y="304" width="1" height="5" fill="#000000"/>
<rect x="78" y="299" width="15" height="2" fill="#008000"/>
<rect x="78" y="301" width="15" height="12" fill="#FFFFFF"/>
<rect x="78" y="301" width="3" height="11" fill="#D4D4D4"/>
<rect x="84" y="301" width="1" height="11" fill="#C4C4C4"/>
<rect x="88" y="301" width="1" height="11" fill="#C4C4C4"/>
<rect x="81" y="303" width="11" height="1" fill="#C4C4C4"/>
<rect x="78" y="303" width="3" height="1" fill="#8C8C8C"/>
<rect x="81" y="306" width="11" height="1" fill="#C4C4C4"/>
<rect x="78" y="306" width="3" height="1" fill="#8C8C8C"/>
<rect x="81" y="309" width="11" height="1" fill="#C4C4C4"/>
<rect x="78" y="309" width="3" height="1" fill="#8C8C8C"/>
<rect x="92" y="301" width="1" height="12" fill="#888888"/>
<rect x="78" y="312" width="15" height="1" fill="#888888"/>
<rect x="97" y="298" width="64" height="16" fill="#E6E6D5"/>
<g fill="#000"><use href="#g71" x="98" y="311"/><use href="#g72" x="110" y="311"/><use href="#g46" x="122" y="311"/><use href="#g37" x="134" y="311"/><use href="#g47" x="146" y="311"/></g>
<line x1="68" y1="322.5" x2="78" y2="322.5" stroke="#A59D84" stroke-width="1" stroke-dasharray="1,1"/>
<rect x="78" y="315" width="15" height="2" fill="#008000"/>
<rect x="78" y="317" width="15" height="12" fill="#FFFFFF"/>
<rect x="78" y="317" width="3" height="11" fill="#D4D4D4"/>
<rect x="84" y="317" width="1" height="11" fill="#C4C4C4"/>
<rect x="88" y="317" width="1" height="11" fill="#C4C4C4"/>
<rect x="81" y="319" width="11" height="1" fill="#C4C4C4"/>
<rect x="78" y="319" width="3" height="1" fill="#8C8C8C"/>
<rect x="81" y="322" width="11" height="1" fill="#C4C4C4"/>
<rect x="78" y="322" width="3" height="1" fill="#8C8C8C"/>
<rect x="81" y="325" width="11" height="1" fill="#C4C4C4"/>
<rect x="78" y="325" width="3" height="1" fill="#8C8C8C"/>
<rect x="92" y="317" width="1" height="12" fill="#888888"/>
<rect x="78" y="328" width="15" height="1" fill="#888888"/>
<g fill="#000"><use href="#g71" x="98" y="327"/><use href="#g72" x="110" y="327"/><use href="#g46" x="122" y="327"/><use href="#g37" x="134" y="327"/><use href="#g47" x="146" y="327"/><use href="#g73" x="158" y="327"/><use href="#g74" x="170" y="327"/><use href="#g75" x="182" y="327"/><use href="#g76" x="194" y="327"/><use href="#g77" x="206" y="327"/><use href="#g78" x="218" y="327"/></g>
<line x1="68" y1="338.5" x2="78" y2="338.5" stroke="#A59D84" stroke-width="1" stroke-dasharray="1,1"/>
<rect x="78" y="331" width="15" height="2" fill="#008000"/>
<rect x="78" y="333" width="15" height="12" fill="#FFFFFF"/>
<rect x="78" y="333" width="3" height="11" fill="#D4D4D4"/>
<rect x="84" y="333" width="1" height="11" fill="#C4C4C4"/>
<rect x="88" y="333" width="1" height="11" fill="#C4C4C4"/>
<rect x="81" y="335" width="11" height="1" fill="#C4C4C4"/>
<rect x="78" y="335" width="3" height="1" fill="#8C8C8C"/>
<rect x="81" y="338" width="11" height="1" fill="#C4C4C4"/>
<rect x="78" y="338" width="3" height="1" fill="#8C8C8C"/>
<rect x="81" y="341" width="11" height="1" fill="#C4C4C4"/>
<rect x="78" y="341" width="3" height="1" fill="#8C8C8C"/>
<rect x="92" y="333" width="1" height="12" fill="#888888"/>
<rect x="78" y="344" width="15" height="1" fill="#888888"/>
<g fill="#000"><use href="#g71" x="98" y="343"/><use href="#g72" x="110" y="343"/><use href="#g79" x="122" y="343"/><use href="#g80" x="134" y="343"/><use href="#g49" x="146" y="343"/><use href="#g37" x="158" y="343"/><use href="#g47" x="170" y="343"/></g>
<line x1="68" y1="354.5" x2="78" y2="354.5" stroke="#A59D84" stroke-width="1" stroke-dasharray="1,1"/>
<rect x="78" y="347" width="15" height="2" fill="#008000"/>
<rect x="78" y="349" width="15" height="12" fill="#FFFFFF"/>
<rect x="78" y="349" width="3" height="11" fill="#D4D4D4"/>
<rect x="84" y="349" width="1" height="11" fill="#C4C4C4"/>
<rect x="88" y="349" width="1" height="11" fill="#C4C4C4"/>
<rect x="81" y="351" width="11" height="1" fill="#C4C4C4"/>
<rect x="78" y="351" width="3" height="1" fill="#8C8C8C"/>
<rect x="81" y="354" width="11" height="1" fill="#C4C4C4"/>
<rect x="78" y="354" width="3" height="1" fill="#8C8C8C"/>
<rect x="81" y="357" width="11" height="1" fill="#C4C4C4"/>
<rect x="78" y="357" width="3" height="1" fill="#8C8C8C"/>
<rect x="92" y="349" width="1" height="12" fill="#888888"/>
<rect x="78" y="360" width="15" height="1" fill="#888888"/>
<g fill="#000"><use href="#g36" x="98" y="359"/><use href="#g37" x="110" y="359"/><use href="#g50" x="122" y="359"/><use href="#g51" x="134" y="359"/><use href="#g47" x="146" y="359"/></g>
<line x1="68" y1="370.5" x2="78" y2="370.5" stroke="#A59D84" stroke-width="1" stroke-dasharray="1,1"/>
<rect x="63" y="366" width="9" height="9" fill="#A5A08A"/>
<rect x="64" y="367" width="7" height="7" fill="#FFFFFF"/>
<rect x="65" y="370" width="5" height="1" fill="#000000"/>
<rect x="67" y="368" width="1" height="5" fill="#000000"/>
<rect x="78" y="363" width="15" height="2" fill="#008000"/>
<rect x="78" y="365" width="15" height="12" fill="#FFFFFF"/>
<rect x="78" y="365" width="3" height="11" fill="#D4D4D4"/>
<rect x="84" y="365" width="1" height="11" fill="#C4C4C4"/>
<rect x="88" y="365" width="1" height="11" fill="#C4C4C4"/>
<rect x="81" y="367" width="11" height="1" fill="#C4C4C4"/>
<rect x="78" y="367" width="3" height="1" fill="#8C8C8C"/>
<rect x="81" y="370" width="11" height="1" fill="#C4C4C4"/>
<rect x="78" y="370" width="3" height="1" fill="#8C8C8C"/>
<rect x="81" y="373" width="11" height="1" fill="#C4C4C4"/>
<rect x="78" y="373" width="3" height="1" fill="#8C8C8C"/>
<rect x="92" y="365" width="1" height="12" fill="#888888"/>
<rect x="78" y="376" width="15" height="1" fill="#888888"/>
<g fill="#000"><use href="#g81" x="98" y="375"/><use href="#g82" x="110" y="375"/><use href="#g46" x="122" y="375"/><use href="#g37" x="134" y="375"/><use href="#g47" x="146" y="375"/></g>
<line x1="68" y1="386.5" x2="78" y2="386.5" stroke="#A59D84" stroke-width="1" stroke-dasharray="1,1"/>
<rect x="78" y="379" width="15" height="2" fill="#008000"/>
<rect x="78" y="381" width="15" height="12" fill="#FFFFFF"/>
<rect x="78" y="381" width="3" height="11" fill="#D4D4D4"/>
<rect x="84" y="381" width="1" height="11" fill="#C4C4C4"/>
<rect x="88" y="381" width="1" height="11" fill="#C4C4C4"/>
<rect x="81" y="383" width="11" height="1" fill="#C4C4C4"/>
<rect x="78" y="383" width="3" height="1" fill="#8C8C8C"/>
<rect x="81" y="386" width="11" height="1" fill="#C4C4C4"/>
<rect x="78" y="386" width="3" height="1" fill="#8C8C8C"/>
<rect x="81" y="389" width="11" height="1" fill="#C4C4C4"/>
<rect x="78" y="389" width="3" height="1" fill="#8C8C8C"/>
<rect x="92" y="381" width="1" height="12" fill="#888888"/>
<rect x="78" y="392" width="15" height="1" fill="#888888"/>
<g fill="#000"><use href="#g83" x="98" y="391"/><use href="#g84" x="110" y="391"/><use href="#g49" x="122" y="391"/><use href="#g37" x="134" y="391"/><use href="#g47" x="146" y="391"/></g>
<line x1="68" y1="402.5" x2="78" y2="402.5" stroke="#A59D84" stroke-width="1" stroke-dasharray="1,1"/>
<rect x="78" y="395" width="15" height="2" fill="#008000"/>
<rect x="78" y="397" width="15" height="12" fill="#FFFFFF"/>
<rect x="78" y="397" width="3" height="11" fill="#D4D4D4"/>
<rect x="84" y="397" width="1" height="11" fill="#C4C4C4"/>
<rect x="88" y="397" width="1" height="11" fill="#C4C4C4"/>
<rect x="81" y="399" width="11" height="1" fill="#C4C4C4"/>
<rect x="78" y="399" width="3" height="1" fill="#8C8C8C"/>
<rect x="81" y="402" width="11" height="1" fill="#C4C4C4"/>
<rect x="78" y="402" width="3" height="1" fill="#8C8C8C"/>
<rect x="81" y="405" width="11" height="1" fill="#C4C4C4"/>
<rect x="78" y="405" width="3" height="1" fill="#8C8C8C"/>
<rect x="92" y="397" width="1" height="12" fill="#888888"/>
<rect x="78" y="408" width="15" height="1" fill="#888888"/>
<g fill="#000"><use href="#g83" x="98" y="407"/><use href="#g84" x="110" y="407"/><use href="#g46" x="122" y="407"/><use href="#g37" x="134" y="407"/><use href="#g47" x="146" y="407"/></g>
<line x1="68" y1="418.5" x2="78" y2="418.5" stroke="#A59D84" stroke-width="1" stroke-dasharray="1,1"/>
<rect x="63" y="414" width="9" height="9" fill="#A5A08A"/>
<rect x="64" y="415" width="7" height="7" fill="#FFFFFF"/>
<rect x="65" y="418" width="5" height="1" fill="#000000"/>
<rect x="67" y="416" width="1" height="5" fill="#000000"/>
<rect x="78" y="411" width="15" height="2" fill="#008000"/>
<rect x="78" y="413" width="15" height="12" fill="#FFFFFF"/>
<rect x="78" y="413" width="3" height="11" fill="#D4D4D4"/>
<rect x="84" y="413" width="1" height="11" fill="#C4C4C4"/>
<rect x="88" y="413" width="1" height="11" fill="#C4C4C4"/>
<rect x="81" y="415" width="11" height="1" fill="#C4C4C4"/>
<rect x="78" y="415" width="3" height="1" fill="#8C8C8C"/>
<rect x="81" y="418" width="11" height="1" fill="#C4C4C4"/>
<rect x="78" y="418" width="3" height="1" fill="#8C8C8C"/>
<rect x="81" y="421" width="11" height="1" fill="#C4C4C4"/>
<rect x="78" y="421" width="3" height="1" fill="#8C8C8C"/>
<rect x="92" y="413" width="1" height="12" fill="#888888"/>
<rect x="78" y="424" width="15" height="1" fill="#888888"/>
<g fill="#000"><use href="#g85" x="98" y="423"/><use href="#g86" x="110" y="423"/><use href="#g49" x="122" y="423"/><use href="#g37" x="134" y="423"/><use href="#g47" x="146" y="423"/></g>
<line x1="68" y1="434.5" x2="78" y2="434.5" stroke="#A59D84" stroke-width="1" stroke-dasharray="1,1"/>
<rect x="78" y="427" width="15" height="2" fill="#008000"/>
<rect x="78" y="429" width="15" height="12" fill="#FFFFFF"/>
<rect x="78" y="429" width="3" height="11" fill="#D4D4D4"/>
<rect x="84" y="429" width="1" height="11" fill="#C4C4C4"/>
<rect x="88" y="429" width="1" height="11" fill="#C4C4C4"/>
<rect x="81" y="431" width="11" height="1" fill="#C4C4C4"/>
<rect x="78" y="431" width="3" height="1" fill="#8C8C8C"/>
<rect x="81" y="434" width="11" height="1" fill="#C4C4C4"/>
<rect x="78" y="434" width="3" height="1" fill="#8C8C8C"/>
<rect x="81" y="437" width="11" height="1" fill="#C4C4C4"/>
<rect x="78" y="437" width="3" height="1" fill="#8C8C8C"/>
<rect x="92" y="429" width="1" height="12" fill="#888888"/>
<rect x="78" y="440" width="15" height="1" fill="#888888"/>
<g fill="#000"><use href="#g50" x="98" y="439"/><use href="#g53" x="110" y="439"/><use href="#g49" x="122" y="439"/><use href="#g37" x="134" y="439"/><use href="#g47" x="146" y="439"/></g>
<line x1="68" y1="450.5" x2="78" y2="450.5" stroke="#A59D84" stroke-width="1" stroke-dasharray="1,1"/>
<rect x="78" y="443" width="15" height="2" fill="#008000"/>
<rect x="78" y="445" width="15" height="12" fill="#FFFFFF"/>
<rect x="78" y="445" width="3" height="11" fill="#D4D4D4"/>
<rect x="84" y="445" width="1" height="11" fill="#C4C4C4"/>
<rect x="88" y="445" width="1" height="11" fill="#C4C4C4"/>
<rect x="81" y="447" width="11" height="1" fill="#C4C4C4"/>
<rect x="78" y="447" width="3" height="1" fill="#8C8C8C"/>
<rect x="81" y="450" width="11" height="1" fill="#C4C4C4"/>
<rect x="78" y="450" width="3" height="1" fill="#8C8C8C"/>
<rect x="81" y="453" width="11" height="1" fill="#C4C4C4"/>
<rect x="78" y="453" width="3" height="1" fill="#8C8C8C"/>
<rect x="92" y="445" width="1" height="12" fill="#888888"/>
<rect x="78" y="456" width="15" height="1" fill="#888888"/>
<g fill="#000"><use href="#g50" x="98" y="455"/><use href="#g54" x="110" y="455"/><use href="#g46" x="122" y="455"/><use href="#g37" x="134" y="455"/><use href="#g47" x="146" y="455"/></g>
<line x1="68" y1="466.5" x2="78" y2="466.5" stroke="#A59D84" stroke-width="1" stroke-dasharray="1,1"/>
<rect x="78" y="459" width="15" height="2" fill="#008000"/>
<rect x="78" y="461" width="15" height="12" fill="#FFFFFF"/>
<rect x="78" y="461" width="3" height="11" fill="#D4D4D4"/>
<rect x="84" y="461" width="1" height="11" fill="#C4C4C4"/>
<rect x="88" y="461" width="1" height="11" fill="#C4C4C4"/>
<rect x="81" y="463" width="11" height="1" fill="#C4C4C4"/>
<rect x="78" y="463" width="3" height="1" fill="#8C8C8C"/>
<rect x="81" y="466" width="11" height="1" fill="#C4C4C4"/>
<rect x="78" y="466" width="3" height="1" fill="#8C8C8C"/>
<rect x="81" y="469" width="11" height="1" fill="#C4C4C4"/>
<rect x="78" y="469" width="3" height="1" fill="#8C8C8C"/>
<rect x="92" y="461" width="1" height="12" fill="#888888"/>
<rect x="78" y="472" width="15" height="1" fill="#888888"/>
<g fill="#000"><use href="#g87" x="98" y="471"/><use href="#g88" x="110" y="471"/><use href="#g46" x="122" y="471"/><use href="#g37" x="134" y="471"/><use href="#g47" x="146" y="471"/></g>
<line x1="68" y1="482.5" x2="78" y2="482.5" stroke="#A59D84" stroke-width="1" stroke-dasharray="1,1"/>
<rect x="78" y="475" width="15" height="2" fill="#008000"/>
<rect x="78" y="477" width="15" height="12" fill="#FFFFFF"/>
<rect x="78" y="477" width="3" height="11" fill="#D4D4D4"/>
<rect x="84" y="477" width="1" height="11" fill="#C4C4C4"/>
<rect x="88" y="477" width="1" height="11" fill="#C4C4C4"/>
<rect x="81" y="479" width="11" height="1" fill="#C4C4C4"/>
<rect x="78" y="479" width="3" height="1" fill="#8C8C8C"/>
<rect x="81" y="482" width="11" height="1" fill="#C4C4C4"/>
<rect x="78" y="482" width="3" height="1" fill="#8C8C8C"/>
<rect x="81" y="485" width="11" height="1" fill="#C4C4C4"/>
<rect x="78" y="485" width="3" height="1" fill="#8C8C8C"/>
<rect x="92" y="477" width="1" height="12" fill="#888888"/>
<rect x="78" y="488" width="15" height="1" fill="#888888"/>
<g fill="#000"><use href="#g79" x="98" y="487"/><use href="#g80" x="110" y="487"/><use href="#g46" x="122" y="487"/><use href="#g37" x="134" y="487"/><use href="#g47" x="146" y="487"/></g>
<line x1="68" y1="498.5" x2="78" y2="498.5" stroke="#A59D84" stroke-width="1" stroke-dasharray="1,1"/>
<rect x="78" y="491" width="15" height="2" fill="#008000"/>
<rect x="78" y="493" width="15" height="12" fill="#FFFFFF"/>
<rect x="78" y="493" width="3" height="11" fill="#D4D4D4"/>
<rect x="84" y="493" width="1" height="11" fill="#C4C4C4"/>
<rect x="88" y="493" width="1" height="11" fill="#C4C4C4"/>
<rect x="81" y="495" width="11" height="1" fill="#C4C4C4"/>
<rect x="78" y="495" width="3" height="1" fill="#8C8C8C"/>
<rect x="81" y="498" width="11" height="1" fill="#C4C4C4"/>
<rect x="78" y="498" width="3" height="1" fill="#8C8C8C"/>
<rect x="81" y="501" width="11" height="1" fill="#C4C4C4"/>
<rect x="78" y="501" width="3" height="1" fill="#8C8C8C"/>
<rect x="92" y="493" width="1" height="12" fill="#888888"/>
<rect x="78" y="504" width="15" height="1" fill="#888888"/>
<g fill="#000"><use href="#g79" x="98" y="503"/><use href="#g86" x="110" y="503"/><use href="#g46" x="122" y="503"/><use href="#g37" x="134" y="503"/><use href="#g47" x="146" y="503"/></g>
<line x1="68" y1="514.5" x2="78" y2="514.5" stroke="#A59D84" stroke-width="1" stroke-dasharray="1,1"/>
<rect x="78" y="507" width="15" height="2" fill="#008000"/>
<rect x="78" y="509" width="15" height="12" fill="#FFFFFF"/>
<rect x="78" y="509" width="3" height="11" fill="#D4D4D4"/>
<rect x="84" y="509" width="1" height="11" fill="#C4C4C4"/>
<rect x="88" y="509" width="1" height="11" fill="#C4C4C4"/>
<rect x="81" y="511" width="11" height="1" fill="#C4C4C4"/>
<rect x="78" y="511" width="3" height="1" fill="#8C8C8C"/>
<rect x="81" y="514" width="11" height="1" fill="#C4C4C4"/>
<rect x="78" y="514" width="3" height="1" fill="#8C8C8C"/>
<rect x="81" y="517" width="11" height="1" fill="#C4C4C4"/>
<rect x="78" y="517" width="3" height="1" fill="#8C8C8C"/>
<rect x="92" y="509" width="1" height="12" fill="#888888"/>
<rect x="78" y="520" width="15" height="1" fill="#888888"/>
<g fill="#000"><use href="#g89" x="98" y="519"/><use href="#g90" x="110" y="519"/><use href="#g49" x="122" y="519"/><use href="#g46" x="134" y="519"/><use href="#g37" x="146" y="519"/><use href="#g63" x="158" y="519"/><use href="#g64" x="170" y="519"/><use href="#g52" x="182" y="519"/></g>
<line x1="68" y1="530.5" x2="78" y2="530.5" stroke="#A59D84" stroke-width="1" stroke-dasharray="1,1"/>
<rect x="78" y="523" width="15" height="2" fill="#008000"/>
<rect x="78" y="525" width="15" height="12" fill="#FFFFFF"/>
<rect x="78" y="525" width="3" height="11" fill="#D4D4D4"/>
<rect x="84" y="525" width="1" height="11" fill="#C4C4C4"/>
<rect x="88" y="525" width="1" height="11" fill="#C4C4C4"/>
<rect x="81" y="527" width="11" height="1" fill="#C4C4C4"/>
<rect x="78" y="527" width="3" height="1" fill="#8C8C8C"/>
<rect x="81" y="530" width="11" height="1" fill="#C4C4C4"/>
<rect x="78" y="530" width="3" height="1" fill="#8C8C8C"/>
<rect x="81" y="533" width="11" height="1" fill="#C4C4C4"/>
<rect x="78" y="533" width="3" height="1" fill="#8C8C8C"/>
<rect x="92" y="525" width="1" height="12" fill="#888888"/>
<rect x="78" y="536" width="15" height="1" fill="#888888"/>
<g fill="#000"><use href="#g91" x="98" y="535"/><use href="#g92" x="110" y="535"/><use href="#g49" x="122" y="535"/><use href="#g37" x="134" y="535"/><use href="#g47" x="146" y="535"/></g>
<line x1="68" y1="546.5" x2="78" y2="546.5" stroke="#A59D84" stroke-width="1" stroke-dasharray="1,1"/>
<path d="M78.5 539.5h5l1 2h8v9h-14z" fill="url(#chk)" stroke="#000000" stroke-width="1"/>
<rect x="79" y="542" width="13" height="1" fill="#FFFFA0"/>
<circle cx="86.6" cy="546.6" r="3.6" fill="#F4FCFF" stroke="#000" stroke-width="1.3" shape-rendering="auto"/>
<path d="M89.4 549.4l3.6 3.6" stroke="#E00000" stroke-width="2.8" shape-rendering="auto"/>
<path d="M85.6 547.8l2 -2.2" stroke="#30C8E8" stroke-width="1.2" shape-rendering="auto"/>
<g fill="#000"><use href="#g71" x="98" y="551"/><use href="#g72" x="110" y="551"/><use href="#g46" x="122" y="551"/><use href="#g37" x="134" y="551"/><use href="#g47" x="146" y="551"/><use href="#g55" x="158" y="549"/><use href="#g56" x="164" y="551"/><use href="#g57" x="176" y="551"/></g>
<line x1="68" y1="562.5" x2="78" y2="562.5" stroke="#A59D84" stroke-width="1" stroke-dasharray="1,1"/>
<path d="M78.5 555.5h5l1 2h8v9h-14z" fill="url(#chk)" stroke="#000000" stroke-width="1"/>
<rect x="79" y="558" width="13" height="1" fill="#FFFFA0"/>
<circle cx="86.6" cy="562.6" r="3.6" fill="#F4FCFF" stroke="#000" stroke-width="1.3" shape-rendering="auto"/>
<path d="M89.4 565.4l3.6 3.6" stroke="#E00000" stroke-width="2.8" shape-rendering="auto"/>
<path d="M85.6 563.8l2 -2.2" stroke="#30C8E8" stroke-width="1.2" shape-rendering="auto"/>
<g fill="#000"><use href="#g71" x="98" y="567"/><use href="#g72" x="110" y="567"/><use href="#g79" x="122" y="567"/><use href="#g80" x="134" y="567"/><use href="#g49" x="146" y="567"/><use href="#g37" x="158" y="567"/><use href="#g47" x="170" y="567"/><use href="#g55" x="182" y="565"/><use href="#g56" x="188" y="567"/><use href="#g57" x="200" y="567"/></g>
<line x1="68" y1="578.5" x2="78" y2="578.5" stroke="#A59D84" stroke-width="1" stroke-dasharray="1,1"/>
<path d="M78.5 571.5h5l1 2h8v9h-14z" fill="url(#chk)" stroke="#000000" stroke-width="1"/>
<rect x="79" y="574" width="13" height="1" fill="#FFFFA0"/>
<circle cx="86.6" cy="578.6" r="3.6" fill="#F4FCFF" stroke="#000" stroke-width="1.3" shape-rendering="auto"/>
<path d="M89.4 581.4l3.6 3.6" stroke="#E00000" stroke-width="2.8" shape-rendering="auto"/>
<path d="M85.6 579.8l2 -2.2" stroke="#30C8E8" stroke-width="1.2" shape-rendering="auto"/>
<g fill="#000"><use href="#g83" x="98" y="583"/><use href="#g84" x="110" y="583"/><use href="#g49" x="122" y="583"/><use href="#g37" x="134" y="583"/><use href="#g47" x="146" y="583"/><use href="#g55" x="158" y="581"/><use href="#g56" x="164" y="583"/><use href="#g57" x="176" y="583"/></g>
<line x1="68" y1="594.5" x2="78" y2="594.5" stroke="#A59D84" stroke-width="1" stroke-dasharray="1,1"/>
<path d="M78.5 587.5h5l1 2h8v9h-14z" fill="url(#chk)" stroke="#000000" stroke-width="1"/>
<rect x="79" y="590" width="13" height="1" fill="#FFFFA0"/>
<circle cx="86.6" cy="594.6" r="3.6" fill="#F4FCFF" stroke="#000" stroke-width="1.3" shape-rendering="auto"/>
<path d="M89.4 597.4l3.6 3.6" stroke="#E00000" stroke-width="2.8" shape-rendering="auto"/>
<path d="M85.6 595.8l2 -2.2" stroke="#30C8E8" stroke-width="1.2" shape-rendering="auto"/>
<g fill="#000"><use href="#g83" x="98" y="599"/><use href="#g84" x="110" y="599"/><use href="#g46" x="122" y="599"/><use href="#g37" x="134" y="599"/><use href="#g47" x="146" y="599"/><use href="#g55" x="158" y="597"/><use href="#g56" x="164" y="599"/><use href="#g57" x="176" y="599"/></g>
<line x1="68" y1="610.5" x2="78" y2="610.5" stroke="#A59D84" stroke-width="1" stroke-dasharray="1,1"/>
<path d="M78.5 603.5h5l1 2h8v9h-14z" fill="url(#chk)" stroke="#000000" stroke-width="1"/>
<rect x="79" y="606" width="13" height="1" fill="#FFFFA0"/>
<circle cx="86.6" cy="610.6" r="3.6" fill="#F4FCFF" stroke="#000" stroke-width="1.3" shape-rendering="auto"/>
<path d="M89.4 613.4l3.6 3.6" stroke="#E00000" stroke-width="2.8" shape-rendering="auto"/>
<path d="M85.6 611.8l2 -2.2" stroke="#30C8E8" stroke-width="1.2" shape-rendering="auto"/>
<g fill="#000"><use href="#g37" x="98" y="615"/><use href="#g93" x="110" y="615"/><use href="#g94" x="122" y="615"/><use href="#g63" x="134" y="615"/><use href="#g64" x="146" y="615"/></g>
<line x1="68" y1="626.5" x2="78" y2="626.5" stroke="#A59D84" stroke-width="1" stroke-dasharray="1,1"/>
<path d="M78.5 619.5h5l1 2h8v9h-14z" fill="url(#chk)" stroke="#000000" stroke-width="1"/>
<rect x="79" y="622" width="13" height="1" fill="#FFFFA0"/>
<circle cx="86.6" cy="626.6" r="3.6" fill="#F4FCFF" stroke="#000" stroke-width="1.3" shape-rendering="auto"/>
<path d="M89.4 629.4l3.6 3.6" stroke="#E00000" stroke-width="2.8" shape-rendering="auto"/>
<path d="M85.6 627.8l2 -2.2" stroke="#30C8E8" stroke-width="1.2" shape-rendering="auto"/>
<g fill="#000"><use href="#g85" x="98" y="631"/><use href="#g86" x="110" y="631"/><use href="#g49" x="122" y="631"/><use href="#g37" x="134" y="631"/><use href="#g47" x="146" y="631"/><use href="#g55" x="158" y="629"/><use href="#g56" x="164" y="631"/><use href="#g57" x="176" y="631"/></g>
<line x1="68" y1="642.5" x2="78" y2="642.5" stroke="#A59D84" stroke-width="1" stroke-dasharray="1,1"/>
<rect x="80" y="635" width="14" height="14" fill="#000000"/>
<rect x="81" y="637" width="12" height="11" fill="#FFFFFF"/>
<rect x="80" y="635" width="14" height="2" fill="#000080"/>
<rect x="83" y="639" width="3" height="1" fill="#808080"/>
<rect x="87" y="639" width="2" height="1" fill="#808080"/>
<path d="M82 646l4 -4l2 1.5l3 -2.5" fill="none" stroke="#303030" stroke-width="1" shape-rendering="auto"/>
<rect x="78" y="646" width="5" height="5" fill="#004050"/>
<rect x="83" y="646" width="5" height="5" fill="#004050"/>
<rect x="79" y="647" width="3" height="3" fill="#00E8F8"/>
<rect x="84" y="647" width="3" height="3" fill="#00E8F8"/>
<g fill="#000"><use href="#g68" x="98" y="647"/><use href="#g69" x="110" y="647"/><use href="#g36" x="122" y="647"/><use href="#g37" x="134" y="647"/><use href="#g49" x="146" y="647"/><use href="#g46" x="158" y="647"/><use href="#g37" x="170" y="647"/><use href="#g65" x="182" y="647"/><use href="#g66" x="194" y="647"/><use href="#g67" x="206" y="647"/></g>
<rect x="269" y="90" width="17" height="555" fill="#FFFFFF"/>
<rect x="269" y="90" width="6" height="555" fill="#EEEDE8"/>
<rect x="275" y="90" width="2" height="555" fill="#FDF9EE"/>
<rect x="285" y="90" width="1" height="555" fill="#EEEEEE"/>
<rect x="270" y="91" width="16" height="15" rx="2.5" fill="#FFFFFF" shape-rendering="auto"/>
<rect x="271" y="92" width="14" height="13" rx="1.5" fill="url(#sbBtn)" shape-rendering="auto"/>
<rect x="272" y="106" width="12" height="1" fill="#8FB0E6"/>
<polyline points="274,100 278,96 282,100" fill="none" stroke="#2D5B8C" stroke-width="2.3" shape-rendering="auto"/>
<rect x="270" y="452" width="14" height="180" rx="2" fill="#FFFFFF"/>
<rect x="270.5" y="452.5" width="13" height="179" rx="1.5" fill="#CBE5FD" stroke="#A4C2F4" stroke-width="1"/>
<rect x="274" y="537" width="6" height="1" fill="#FFFFFF"/>
<rect x="275" y="538" width="6" height="1" fill="#8CB6F6"/>
<rect x="274" y="539" width="6" height="1" fill="#FFFFFF"/>
<rect x="275" y="540" width="6" height="1" fill="#8CB6F6"/>
<rect x="274" y="541" width="6" height="1" fill="#FFFFFF"/>
<rect x="275" y="542" width="6" height="1" fill="#8CB6F6"/>
<rect x="274" y="543" width="6" height="1" fill="#FFFFFF"/>
<rect x="275" y="544" width="6" height="1" fill="#8CB6F6"/>
<rect x="294" y="68" width="737" height="1" fill="#ACA899"/>
<rect x="294" y="68" width="1" height="20" fill="#ACA899"/>
<rect x="295" y="69" width="735" height="1" fill="#716F64"/>
<rect x="295" y="69" width="1" height="18" fill="#716F64"/>
<rect x="294" y="87" width="737" height="1" fill="#FFFFFF"/>
<rect x="1030" y="68" width="1" height="20" fill="#FFFFFF"/>
<rect x="295" y="86" width="735" height="1" fill="#F1EFE2"/>
<rect x="1029" y="69" width="1" height="18" fill="#F1EFE2"/>
<g fill="#000"><use href="#g46" x="298" y="84"/><use href="#g37" x="310" y="84"/><use href="#g47" x="322" y="84"/><use href="#g55" x="334" y="82"/><use href="#g65" x="340" y="84"/><use href="#g66" x="352" y="84"/><use href="#g96" x="370" y="82"/><use href="#g97" x="388" y="84"/><use href="#g98" x="400" y="84"/><use href="#g99" x="424" y="82"/><use href="#g100" x="430" y="82"/><use href="#g101" x="436" y="82"/><use href="#g102" x="442" y="82"/><use href="#g103" x="460" y="84"/><use href="#g104" x="472" y="84"/><use href="#g35" x="484" y="84"/></g>
<rect x="293" y="90" width="731" height="1" fill="#ACA899"/>
<rect x="293" y="90" width="1" height="25" fill="#ACA899"/>
<rect x="294" y="91" width="729" height="1" fill="#FFFFFF"/>
<rect x="294" y="91" width="1" height="23" fill="#FFFFFF"/>
<rect x="293" y="114" width="731" height="1" fill="#FFFFFF"/>
<rect x="1023" y="90" width="1" height="25" fill="#FFFFFF"/>
<rect x="294" y="113" width="729" height="1" fill="#ACA899"/>
<rect x="1022" y="91" width="1" height="23" fill="#ACA899"/>
<g fill="#000080"><use href="#g105" x="296" y="107"/></g>
<g fill="#FF0000"><use href="#g106" x="323" y="106"/><use href="#g100" x="329" y="106"/><use href="#g107" x="335" y="106"/><use href="#g108" x="341" y="106"/></g>
<g fill="#000080"><use href="#g103" x="365" y="107"/><use href="#g104" x="377" y="107"/><use href="#g35" x="389" y="107"/></g>
<g fill="#000080"><use href="#g109" x="414" y="107"/><use href="#g110" x="426" y="107"/></g>
<rect x="414" y="108" width="24" height="1" fill="#000080"/>
<g fill="#000080"><use href="#g111" x="450" y="107"/><use href="#g110" x="462" y="107"/></g>
<rect x="450" y="108" width="24" height="1" fill="#000080"/>
<g fill="#000080"><use href="#g112" x="484" y="107"/><use href="#g110" x="496" y="107"/></g>
<rect x="484" y="108" width="24" height="1" fill="#000080"/>
<g fill="#000080"><use href="#g113" x="518" y="107"/><use href="#g110" x="530" y="107"/></g>
<rect x="518" y="108" width="24" height="1" fill="#000080"/>
<g fill="#000080"><use href="#g110" x="555" y="107"/><use href="#g114" x="567" y="107"/><use href="#g96" x="579" y="105"/></g>
<g fill="#FF0000"><use href="#g115" x="590" y="105"/><use href="#g42" x="596" y="105"/><use href="#g115" x="602" y="105"/><use href="#g107" x="608" y="105"/></g>
<g fill="#000080"><use href="#g116" x="632" y="107"/><use href="#g117" x="644" y="107"/></g>
<rect x="669" y="96" width="45" height="13" fill="#66CC66"/>
<g fill="#000"><use href="#g115" x="688" y="105"/></g>
<g fill="#000080"><use href="#g110" x="720" y="107"/></g>
<rect x="749" y="96" width="13" height="1" fill="#ACA899"/>
<rect x="749" y="96" width="1" height="13" fill="#ACA899"/>
<rect x="750" y="97" width="11" height="1" fill="#716F64"/>
<rect x="750" y="97" width="1" height="11" fill="#716F64"/>
<rect x="749" y="108" width="13" height="1" fill="#FFFFFF"/>
<rect x="761" y="96" width="1" height="13" fill="#FFFFFF"/>
<rect x="750" y="107" width="11" height="1" fill="#F1EFE2"/>
<rect x="760" y="97" width="1" height="11" fill="#F1EFE2"/>
<rect x="751" y="98" width="9" height="9" fill="#FFFFFF"/>
<path d="M752.5 101.5l2 2l4 -4" fill="none" stroke="#000" stroke-width="1.8"/>
<g fill="#000080"><use href="#g118" x="766" y="107"/><use href="#g110" x="778" y="107"/></g>
<g fill="#000080"><use href="#g119" x="808" y="107"/><use href="#g110" x="820" y="107"/><use href="#g96" x="832" y="105"/></g>
<rect x="841" y="96" width="39" height="13" fill="#66CC66"/>
<g fill="#000"><use href="#g101" x="853" y="106"/><use href="#g120" x="859" y="106"/></g>
<g clip-path="url(#cUp)">
<rect x="293" y="116" width="714" height="278" fill="#FFFFFF"/>
<rect x="293" y="116" width="714" height="1" fill="#000000"/>
<rect x="293" y="116" width="1" height="278" fill="#000000"/>
<rect x="294" y="117" width="13" height="19" fill="#E6E6D5"/>
<rect x="294" y="117" width="1" height="19" fill="#FFFFFF"/>
<rect x="294" y="117" width="13" height="1" fill="#FFFFFF"/>
<rect x="306" y="117" width="1" height="19" fill="#000000"/>
<rect x="295" y="135" width="12" height="1" fill="#000000"/>
<rect x="307" y="117" width="42" height="19" fill="#E6E6D5"/>
<rect x="307" y="117" width="1" height="19" fill="#FFFFFF"/>
<rect x="307" y="117" width="42" height="1" fill="#FFFFFF"/>
<rect x="348" y="117" width="1" height="19" fill="#000000"/>
<rect x="308" y="135" width="41" height="1" fill="#000000"/>
<g fill="#000"><use href="#g30" x="310" y="131"/><use href="#g121" x="322" y="131"/><use href="#g122" x="334" y="131"/></g>
<rect x="349" y="117" width="63" height="19" fill="#E6E6D5"/>
<rect x="349" y="117" width="1" height="19" fill="#FFFFFF"/>
<rect x="349" y="117" width="63" height="1" fill="#FFFFFF"/>
<rect x="411" y="117" width="1" height="19" fill="#000000"/>
<rect x="350" y="135" width="62" height="1" fill="#000000"/>
<g fill="#000"><use href="#g123" x="352" y="131"/><use href="#g124" x="364" y="131"/><use href="#g125" x="376" y="131"/></g>
<rect x="412" y="117" width="70" height="19" fill="#E6E6D5"/>
<rect x="412" y="117" width="1" height="19" fill="#FFFFFF"/>
<rect x="412" y="117" width="70" height="1" fill="#FFFFFF"/>
<rect x="481" y="117" width="1" height="19" fill="#000000"/>
<rect x="413" y="135" width="69" height="1" fill="#000000"/>
<g fill="#000"><use href="#g47" x="415" y="131"/><use href="#g126" x="427" y="131"/><use href="#g127" x="439" y="131"/><use href="#g128" x="451" y="131"/></g>
<rect x="482" y="117" width="105" height="19" fill="#E6E6D5"/>
<rect x="482" y="117" width="1" height="19" fill="#FFFFFF"/>
<rect x="482" y="117" width="105" height="1" fill="#FFFFFF"/>
<rect x="586" y="117" width="1" height="19" fill="#000000"/>
<rect x="483" y="135" width="104" height="1" fill="#000000"/>
<g fill="#000"><use href="#g47" x="485" y="131"/><use href="#g125" x="497" y="131"/></g>
<rect x="587" y="117" width="99" height="19" fill="#E6E6D5"/>
<rect x="587" y="117" width="1" height="19" fill="#FFFFFF"/>
<rect x="587" y="117" width="99" height="1" fill="#FFFFFF"/>
<rect x="685" y="117" width="1" height="19" fill="#000000"/>
<rect x="588" y="135" width="98" height="1" fill="#000000"/>
<g fill="#000"><use href="#g129" x="590" y="131"/><use href="#g124" x="602" y="131"/><use href="#g127" x="614" y="131"/><use href="#g128" x="626" y="131"/></g>
<rect x="686" y="117" width="104" height="19" fill="#E6E6D5"/>
<rect x="686" y="117" width="1" height="19" fill="#FFFFFF"/>
<rect x="686" y="117" width="104" height="1" fill="#FFFFFF"/>
<rect x="789" y="117" width="1" height="19" fill="#000000"/>
<rect x="687" y="135" width="103" height="1" fill="#000000"/>
<g fill="#000"><use href="#g130" x="689" y="131"/><use href="#g131" x="701" y="131"/><use href="#g47" x="713" y="131"/><use href="#g126" x="725" y="131"/></g>
<rect x="790" y="117" width="196" height="19" fill="#E6E6D5"/>
<rect x="790" y="117" width="1" height="19" fill="#FFFFFF"/>
<rect x="790" y="117" width="196" height="1" fill="#FFFFFF"/>
<rect x="985" y="117" width="1" height="19" fill="#000000"/>
<rect x="791" y="135" width="195" height="1" fill="#000000"/>
<g fill="#000"><use href="#g132" x="793" y="131"/><use href="#g133" x="805" y="131"/><use href="#g134" x="817" y="131"/></g>
<rect x="986" y="117" width="21" height="19" fill="#E6E6D5"/>
<rect x="986" y="117" width="1" height="19" fill="#FFFFFF"/>
<rect x="986" y="117" width="21" height="1" fill="#FFFFFF"/>
<rect x="987" y="135" width="20" height="1" fill="#000000"/>
<g fill="#000"><use href="#g36" x="989" y="131"/><use href="#g37" x="1001" y="131"/></g>
<rect x="294" y="136" width="12" height="18" fill="#E6E6D5"/>
<rect x="294" y="136" width="1" height="19" fill="#FFFFFF"/>
<rect x="295" y="154" width="11" height="1" fill="#000000"/>
<rect x="307" y="154" width="700" height="1" fill="#C0C0C0"/>
<rect x="306" y="136" width="1" height="19" fill="#C0C0C0"/>
<rect x="348" y="136" width="1" height="19" fill="#C0C0C0"/>
<rect x="411" y="136" width="1" height="19" fill="#C0C0C0"/>
<rect x="481" y="136" width="1" height="19" fill="#C0C0C0"/>
<rect x="586" y="136" width="1" height="19" fill="#C0C0C0"/>
<rect x="685" y="136" width="1" height="19" fill="#C0C0C0"/>
<rect x="789" y="136" width="1" height="19" fill="#C0C0C0"/>
<rect x="985" y="136" width="1" height="19" fill="#C0C0C0"/>
<g fill="#000"><use href="#g30" x="310" y="150"/><use href="#g135" x="322" y="150"/></g>
<g fill="#000"><use href="#g8" x="352" y="149"/><use href="#g136" x="358" y="149"/><use href="#g120" x="364" y="149"/><use href="#g108" x="370" y="149"/><use href="#g100" x="376" y="149"/><use href="#g120" x="382" y="149"/><use href="#g120" x="388" y="149"/><use href="#g137" x="394" y="149"/><use href="#g101" x="400" y="149"/></g>
<g fill="#000"><use href="#g71" x="415" y="150"/><use href="#g72" x="427" y="150"/><use href="#g46" x="439" y="150"/><use href="#g37" x="451" y="150"/><use href="#g47" x="463" y="150"/></g>
<g fill="#000"><use href="#g138" x="485" y="149"/><use href="#g139" x="491" y="149"/><use href="#g140" x="497" y="149"/><use href="#g141" x="503" y="149"/><use href="#g106" x="509" y="149"/><use href="#g120" x="515" y="149"/><use href="#g120" x="521" y="149"/><use href="#g108" x="527" y="149"/><use href="#g100" x="533" y="149"/><use href="#g120" x="539" y="149"/><use href="#g106" x="545" y="149"/><use href="#g106" x="551" y="149"/><use href="#g120" x="557" y="149"/><use href="#g120" x="563" y="149"/><use href="#g101" x="569" y="149"/></g>
<g fill="#000"><use href="#g71" x="590" y="150"/><use href="#g72" x="602" y="150"/><use href="#g116" x="614" y="150"/><use href="#g80" x="626" y="150"/><use href="#g77" x="638" y="150"/><use href="#g45" x="650" y="150"/><use href="#g47" x="662" y="150"/></g>
<g fill="#000"><use href="#g138" x="689" y="149"/><use href="#g139" x="695" y="149"/><use href="#g142" x="701" y="149"/><use href="#g143" x="707" y="149"/><use href="#g106" x="713" y="149"/><use href="#g120" x="719" y="149"/><use href="#g120" x="725" y="149"/><use href="#g108" x="731" y="149"/><use href="#g100" x="737" y="149"/><use href="#g120" x="743" y="149"/><use href="#g106" x="749" y="149"/><use href="#g106" x="755" y="149"/><use href="#g120" x="761" y="149"/><use href="#g120" x="767" y="149"/><use href="#g115" x="773" y="149"/></g>
<g fill="#000"><use href="#g144" x="793" y="150"/><use href="#g145" x="805" y="150"/><use href="#g146" x="817" y="150"/><use href="#g147" x="829" y="150"/><use href="#g148" x="841" y="150"/><use href="#g68" x="853" y="150"/><use href="#g90" x="865" y="150"/><use href="#g149" x="877" y="150"/><use href="#g150" x="889" y="150"/><use href="#g151" x="901" y="150"/><use href="#g152" x="913" y="150"/></g>
<g fill="#000"><use href="#g100" x="989" y="149"/><use href="#g125" x="995" y="150"/></g>
<rect x="294" y="155" width="12" height="18" fill="#E6E6D5"/>
<rect x="294" y="155" width="1" height="19" fill="#FFFFFF"/>
<rect x="295" y="173" width="11" height="1" fill="#000000"/>
<rect x="307" y="173" width="700" height="1" fill="#C0C0C0"/>
<rect x="306" y="155" width="1" height="19" fill="#C0C0C0"/>
<rect x="348" y="155" width="1" height="19" fill="#C0C0C0"/>
<rect x="411" y="155" width="1" height="19" fill="#C0C0C0"/>
<rect x="481" y="155" width="1" height="19" fill="#C0C0C0"/>
<rect x="586" y="155" width="1" height="19" fill="#C0C0C0"/>
<rect x="685" y="155" width="1" height="19" fill="#C0C0C0"/>
<rect x="789" y="155" width="1" height="19" fill="#C0C0C0"/>
<rect x="985" y="155" width="1" height="19" fill="#C0C0C0"/>
<g fill="#000"><use href="#g30" x="310" y="169"/><use href="#g135" x="322" y="169"/></g>
<g fill="#000"><use href="#g8" x="352" y="168"/><use href="#g136" x="358" y="168"/><use href="#g120" x="364" y="168"/><use href="#g108" x="370" y="168"/><use href="#g100" x="376" y="168"/><use href="#g120" x="382" y="168"/><use href="#g120" x="388" y="168"/><use href="#g137" x="394" y="168"/><use href="#g107" x="400" y="168"/></g>
<g fill="#000"><use href="#g71" x="415" y="169"/><use href="#g72" x="427" y="169"/><use href="#g46" x="439" y="169"/><use href="#g37" x="451" y="169"/><use href="#g47" x="463" y="169"/></g>
<g fill="#000"><use href="#g138" x="485" y="168"/><use href="#g139" x="491" y="168"/><use href="#g140" x="497" y="168"/><use href="#g141" x="503" y="168"/><use href="#g106" x="509" y="168"/><use href="#g120" x="515" y="168"/><use href="#g120" x="521" y="168"/><use href="#g108" x="527" y="168"/><use href="#g100" x="533" y="168"/><use href="#g120" x="539" y="168"/><use href="#g106" x="545" y="168"/><use href="#g106" x="551" y="168"/><use href="#g120" x="557" y="168"/><use href="#g120" x="563" y="168"/><use href="#g107" x="569" y="168"/></g>
<g fill="#000"><use href="#g71" x="590" y="169"/><use href="#g72" x="602" y="169"/><use href="#g116" x="614" y="169"/><use href="#g80" x="626" y="169"/><use href="#g77" x="638" y="169"/><use href="#g45" x="650" y="169"/><use href="#g47" x="662" y="169"/></g>
<g fill="#000"><use href="#g138" x="689" y="168"/><use href="#g139" x="695" y="168"/><use href="#g142" x="701" y="168"/><use href="#g143" x="707" y="168"/><use href="#g106" x="713" y="168"/><use href="#g120" x="719" y="168"/><use href="#g120" x="725" y="168"/><use href="#g108" x="731" y="168"/><use href="#g100" x="737" y="168"/><use href="#g120" x="743" y="168"/><use href="#g106" x="749" y="168"/><use href="#g106" x="755" y="168"/><use href="#g120" x="761" y="168"/><use href="#g120" x="767" y="168"/><use href="#g106" x="773" y="168"/></g>
<g fill="#000"><use href="#g144" x="793" y="169"/><use href="#g145" x="805" y="169"/><use href="#g146" x="817" y="169"/><use href="#g153" x="829" y="169"/><use href="#g154" x="841" y="169"/><use href="#g134" x="853" y="169"/><use href="#g155" x="865" y="169"/><use href="#g149" x="877" y="169"/><use href="#g150" x="889" y="169"/><use href="#g151" x="901" y="169"/><use href="#g152" x="913" y="169"/></g>
<g fill="#000"><use href="#g100" x="989" y="168"/><use href="#g125" x="995" y="169"/></g>
<rect x="294" y="174" width="12" height="18" fill="#E6E6D5"/>
<rect x="294" y="174" width="1" height="19" fill="#FFFFFF"/>
<rect x="295" y="192" width="11" height="1" fill="#000000"/>
<rect x="307" y="192" width="700" height="1" fill="#C0C0C0"/>
<rect x="306" y="174" width="1" height="19" fill="#C0C0C0"/>
<rect x="348" y="174" width="1" height="19" fill="#C0C0C0"/>
<rect x="411" y="174" width="1" height="19" fill="#C0C0C0"/>
<rect x="481" y="174" width="1" height="19" fill="#C0C0C0"/>
<rect x="586" y="174" width="1" height="19" fill="#C0C0C0"/>
<rect x="685" y="174" width="1" height="19" fill="#C0C0C0"/>
<rect x="789" y="174" width="1" height="19" fill="#C0C0C0"/>
<rect x="985" y="174" width="1" height="19" fill="#C0C0C0"/>
<g fill="#000"><use href="#g30" x="310" y="188"/><use href="#g135" x="322" y="188"/></g>
<g fill="#000"><use href="#g8" x="352" y="187"/><use href="#g136" x="358" y="187"/><use href="#g120" x="364" y="187"/><use href="#g108" x="370" y="187"/><use href="#g100" x="376" y="187"/><use href="#g120" x="382" y="187"/><use href="#g120" x="388" y="187"/><use href="#g137" x="394" y="187"/><use href="#g106" x="400" y="187"/></g>
<g fill="#000"><use href="#g71" x="415" y="188"/><use href="#g72" x="427" y="188"/><use href="#g46" x="439" y="188"/><use href="#g37" x="451" y="188"/><use href="#g47" x="463" y="188"/></g>
<g fill="#000"><use href="#g138" x="485" y="187"/><use href="#g139" x="491" y="187"/><use href="#g140" x="497" y="187"/><use href="#g141" x="503" y="187"/><use href="#g106" x="509" y="187"/><use href="#g120" x="515" y="187"/><use href="#g120" x="521" y="187"/><use href="#g108" x="527" y="187"/><use href="#g100" x="533" y="187"/><use href="#g120" x="539" y="187"/><use href="#g106" x="545" y="187"/><use href="#g106" x="551" y="187"/><use href="#g120" x="557" y="187"/><use href="#g120" x="563" y="187"/><use href="#g100" x="569" y="187"/></g>
<g fill="#000"><use href="#g71" x="590" y="188"/><use href="#g72" x="602" y="188"/><use href="#g116" x="614" y="188"/><use href="#g80" x="626" y="188"/><use href="#g77" x="638" y="188"/><use href="#g45" x="650" y="188"/><use href="#g47" x="662" y="188"/></g>
<g fill="#000"><use href="#g138" x="689" y="187"/><use href="#g139" x="695" y="187"/><use href="#g142" x="701" y="187"/><use href="#g143" x="707" y="187"/><use href="#g106" x="713" y="187"/><use href="#g120" x="719" y="187"/><use href="#g120" x="725" y="187"/><use href="#g108" x="731" y="187"/><use href="#g100" x="737" y="187"/><use href="#g120" x="743" y="187"/><use href="#g106" x="749" y="187"/><use href="#g106" x="755" y="187"/><use href="#g120" x="761" y="187"/><use href="#g120" x="767" y="187"/><use href="#g100" x="773" y="187"/></g>
<g fill="#000"><use href="#g144" x="793" y="188"/><use href="#g145" x="805" y="188"/><use href="#g146" x="817" y="188"/><use href="#g147" x="829" y="188"/><use href="#g148" x="841" y="188"/><use href="#g68" x="853" y="188"/><use href="#g90" x="865" y="188"/><use href="#g149" x="877" y="188"/><use href="#g150" x="889" y="188"/><use href="#g151" x="901" y="188"/><use href="#g152" x="913" y="188"/></g>
<g fill="#000"><use href="#g100" x="989" y="187"/><use href="#g125" x="995" y="188"/></g>
<rect x="294" y="193" width="12" height="18" fill="#E6E6D5"/>
<rect x="294" y="193" width="1" height="19" fill="#FFFFFF"/>
<rect x="295" y="211" width="11" height="1" fill="#000000"/>
<rect x="307" y="211" width="700" height="1" fill="#C0C0C0"/>
<rect x="306" y="193" width="1" height="19" fill="#C0C0C0"/>
<rect x="348" y="193" width="1" height="19" fill="#C0C0C0"/>
<rect x="411" y="193" width="1" height="19" fill="#C0C0C0"/>
<rect x="481" y="193" width="1" height="19" fill="#C0C0C0"/>
<rect x="586" y="193" width="1" height="19" fill="#C0C0C0"/>
<rect x="685" y="193" width="1" height="19" fill="#C0C0C0"/>
<rect x="789" y="193" width="1" height="19" fill="#C0C0C0"/>
<rect x="985" y="193" width="1" height="19" fill="#C0C0C0"/>
<g fill="#000"><use href="#g30" x="310" y="207"/><use href="#g135" x="322" y="207"/></g>
<g fill="#000"><use href="#g8" x="352" y="206"/><use href="#g136" x="358" y="206"/><use href="#g120" x="364" y="206"/><use href="#g108" x="370" y="206"/><use href="#g100" x="376" y="206"/><use href="#g120" x="382" y="206"/><use href="#g120" x="388" y="206"/><use href="#g137" x="394" y="206"/><use href="#g100" x="400" y="206"/></g>
<g fill="#000"><use href="#g71" x="415" y="207"/><use href="#g72" x="427" y="207"/><use href="#g46" x="439" y="207"/><use href="#g37" x="451" y="207"/><use href="#g47" x="463" y="207"/></g>
<g fill="#000"><use href="#g138" x="485" y="206"/><use href="#g139" x="491" y="206"/><use href="#g140" x="497" y="206"/><use href="#g141" x="503" y="206"/><use href="#g106" x="509" y="206"/><use href="#g120" x="515" y="206"/><use href="#g120" x="521" y="206"/><use href="#g108" x="527" y="206"/><use href="#g100" x="533" y="206"/><use href="#g120" x="539" y="206"/><use href="#g106" x="545" y="206"/><use href="#g100" x="551" y="206"/><use href="#g120" x="557" y="206"/><use href="#g120" x="563" y="206"/><use href="#g115" x="569" y="206"/></g>
<g fill="#000"><use href="#g71" x="590" y="207"/><use href="#g72" x="602" y="207"/><use href="#g116" x="614" y="207"/><use href="#g80" x="626" y="207"/><use href="#g77" x="638" y="207"/><use href="#g45" x="650" y="207"/><use href="#g47" x="662" y="207"/></g>
<g fill="#000"><use href="#g138" x="689" y="206"/><use href="#g139" x="695" y="206"/><use href="#g142" x="701" y="206"/><use href="#g143" x="707" y="206"/><use href="#g106" x="713" y="206"/><use href="#g120" x="719" y="206"/><use href="#g120" x="725" y="206"/><use href="#g108" x="731" y="206"/><use href="#g100" x="737" y="206"/><use href="#g120" x="743" y="206"/><use href="#g106" x="749" y="206"/><use href="#g100" x="755" y="206"/><use href="#g120" x="761" y="206"/><use href="#g120" x="767" y="206"/><use href="#g115" x="773" y="206"/></g>
<g fill="#000"><use href="#g156" x="793" y="207"/><use href="#g157" x="805" y="207"/><use href="#g158" x="817" y="207"/><use href="#g159" x="829" y="207"/><use href="#g160" x="841" y="207"/><use href="#g146" x="853" y="207"/><use href="#g161" x="865" y="207"/><use href="#g162" x="877" y="207"/><use href="#g43" x="889" y="207"/><use href="#g90" x="901" y="207"/><use href="#g163" x="913" y="207"/><use href="#g129" x="925" y="207"/><use href="#g151" x="937" y="207"/><use href="#g152" x="949" y="207"/></g>
<g fill="#000"><use href="#g100" x="989" y="206"/><use href="#g125" x="995" y="207"/></g>
<rect x="294" y="212" width="12" height="18" fill="#E6E6D5"/>
<rect x="294" y="212" width="1" height="19" fill="#FFFFFF"/>
<rect x="295" y="230" width="11" height="1" fill="#000000"/>
<rect x="307" y="230" width="700" height="1" fill="#C0C0C0"/>
<rect x="306" y="212" width="1" height="19" fill="#C0C0C0"/>
<rect x="348" y="212" width="1" height="19" fill="#C0C0C0"/>
<rect x="411" y="212" width="1" height="19" fill="#C0C0C0"/>
<rect x="481" y="212" width="1" height="19" fill="#C0C0C0"/>
<rect x="586" y="212" width="1" height="19" fill="#C0C0C0"/>
<rect x="685" y="212" width="1" height="19" fill="#C0C0C0"/>
<rect x="789" y="212" width="1" height="19" fill="#C0C0C0"/>
<rect x="985" y="212" width="1" height="19" fill="#C0C0C0"/>
<g fill="#000"><use href="#g30" x="310" y="226"/><use href="#g135" x="322" y="226"/></g>
<g fill="#000"><use href="#g8" x="352" y="225"/><use href="#g136" x="358" y="225"/><use href="#g120" x="364" y="225"/><use href="#g108" x="370" y="225"/><use href="#g100" x="376" y="225"/><use href="#g120" x="382" y="225"/><use href="#g120" x="388" y="225"/><use href="#g137" x="394" y="225"/><use href="#g120" x="400" y="225"/></g>
<g fill="#000"><use href="#g71" x="415" y="226"/><use href="#g72" x="427" y="226"/><use href="#g46" x="439" y="226"/><use href="#g37" x="451" y="226"/><use href="#g47" x="463" y="226"/></g>
<g fill="#000"><use href="#g138" x="485" y="225"/><use href="#g139" x="491" y="225"/><use href="#g140" x="497" y="225"/><use href="#g141" x="503" y="225"/><use href="#g106" x="509" y="225"/><use href="#g120" x="515" y="225"/><use href="#g120" x="521" y="225"/><use href="#g108" x="527" y="225"/><use href="#g100" x="533" y="225"/><use href="#g120" x="539" y="225"/><use href="#g106" x="545" y="225"/><use href="#g100" x="551" y="225"/><use href="#g120" x="557" y="225"/><use href="#g120" x="563" y="225"/><use href="#g107" x="569" y="225"/></g>
<g fill="#000"><use href="#g71" x="590" y="226"/><use href="#g72" x="602" y="226"/><use href="#g116" x="614" y="226"/><use href="#g80" x="626" y="226"/><use href="#g77" x="638" y="226"/><use href="#g45" x="650" y="226"/><use href="#g47" x="662" y="226"/></g>
<g fill="#000"><use href="#g138" x="689" y="225"/><use href="#g139" x="695" y="225"/><use href="#g142" x="701" y="225"/><use href="#g143" x="707" y="225"/><use href="#g106" x="713" y="225"/><use href="#g120" x="719" y="225"/><use href="#g120" x="725" y="225"/><use href="#g108" x="731" y="225"/><use href="#g100" x="737" y="225"/><use href="#g120" x="743" y="225"/><use href="#g106" x="749" y="225"/><use href="#g100" x="755" y="225"/><use href="#g120" x="761" y="225"/><use href="#g120" x="767" y="225"/><use href="#g106" x="773" y="225"/></g>
<g fill="#000"><use href="#g164" x="793" y="226"/><use href="#g165" x="805" y="226"/><use href="#g166" x="817" y="226"/><use href="#g155" x="829" y="226"/><use href="#g167" x="841" y="226"/><use href="#g149" x="853" y="226"/><use href="#g150" x="865" y="226"/><use href="#g151" x="877" y="226"/><use href="#g152" x="889" y="226"/></g>
<g fill="#000"><use href="#g100" x="989" y="225"/><use href="#g125" x="995" y="226"/></g>
<rect x="294" y="231" width="12" height="18" fill="#E6E6D5"/>
<rect x="294" y="231" width="1" height="19" fill="#FFFFFF"/>
<rect x="295" y="249" width="11" height="1" fill="#000000"/>
<rect x="307" y="249" width="700" height="1" fill="#C0C0C0"/>
<rect x="306" y="231" width="1" height="19" fill="#C0C0C0"/>
<rect x="348" y="231" width="1" height="19" fill="#C0C0C0"/>
<rect x="411" y="231" width="1" height="19" fill="#C0C0C0"/>
<rect x="481" y="231" width="1" height="19" fill="#C0C0C0"/>
<rect x="586" y="231" width="1" height="19" fill="#C0C0C0"/>
<rect x="685" y="231" width="1" height="19" fill="#C0C0C0"/>
<rect x="789" y="231" width="1" height="19" fill="#C0C0C0"/>
<rect x="985" y="231" width="1" height="19" fill="#C0C0C0"/>
<g fill="#000"><use href="#g30" x="310" y="245"/><use href="#g135" x="322" y="245"/></g>
<g fill="#000"><use href="#g8" x="352" y="244"/><use href="#g136" x="358" y="244"/><use href="#g120" x="364" y="244"/><use href="#g108" x="370" y="244"/><use href="#g100" x="376" y="244"/><use href="#g120" x="382" y="244"/><use href="#g120" x="388" y="244"/><use href="#g108" x="394" y="244"/><use href="#g137" x="400" y="244"/></g>
<g fill="#000"><use href="#g71" x="415" y="245"/><use href="#g72" x="427" y="245"/><use href="#g46" x="439" y="245"/><use href="#g37" x="451" y="245"/><use href="#g47" x="463" y="245"/></g>
<g fill="#000"><use href="#g138" x="485" y="244"/><use href="#g139" x="491" y="244"/><use href="#g140" x="497" y="244"/><use href="#g141" x="503" y="244"/><use href="#g106" x="509" y="244"/><use href="#g120" x="515" y="244"/><use href="#g120" x="521" y="244"/><use href="#g108" x="527" y="244"/><use href="#g100" x="533" y="244"/><use href="#g120" x="539" y="244"/><use href="#g106" x="545" y="244"/><use href="#g100" x="551" y="244"/><use href="#g120" x="557" y="244"/><use href="#g120" x="563" y="244"/><use href="#g100" x="569" y="244"/></g>
<g fill="#000"><use href="#g71" x="590" y="245"/><use href="#g72" x="602" y="245"/><use href="#g116" x="614" y="245"/><use href="#g80" x="626" y="245"/><use href="#g77" x="638" y="245"/><use href="#g45" x="650" y="245"/><use href="#g47" x="662" y="245"/></g>
<g fill="#000"><use href="#g138" x="689" y="244"/><use href="#g139" x="695" y="244"/><use href="#g142" x="701" y="244"/><use href="#g143" x="707" y="244"/><use href="#g106" x="713" y="244"/><use href="#g120" x="719" y="244"/><use href="#g120" x="725" y="244"/><use href="#g108" x="731" y="244"/><use href="#g100" x="737" y="244"/><use href="#g120" x="743" y="244"/><use href="#g106" x="749" y="244"/><use href="#g100" x="755" y="244"/><use href="#g120" x="761" y="244"/><use href="#g120" x="767" y="244"/><use href="#g100" x="773" y="244"/></g>
<g fill="#000"><use href="#g144" x="793" y="245"/><use href="#g145" x="805" y="245"/><use href="#g146" x="817" y="245"/><use href="#g147" x="829" y="245"/><use href="#g148" x="841" y="245"/><use href="#g68" x="853" y="245"/><use href="#g90" x="865" y="245"/><use href="#g149" x="877" y="245"/><use href="#g150" x="889" y="245"/><use href="#g151" x="901" y="245"/><use href="#g152" x="913" y="245"/></g>
<g fill="#000"><use href="#g100" x="989" y="244"/><use href="#g125" x="995" y="245"/></g>
<rect x="294" y="250" width="713" height="18" fill="#CCCCF9"/>
<rect x="294" y="250" width="1" height="19" fill="#FFFFFF"/>
<rect x="295" y="268" width="11" height="1" fill="#000000"/>
<rect x="307" y="268" width="700" height="1" fill="#C0C0C0"/>
<rect x="306" y="250" width="1" height="19" fill="#C0C0C0"/>
<rect x="348" y="250" width="1" height="19" fill="#C0C0C0"/>
<rect x="411" y="250" width="1" height="19" fill="#C0C0C0"/>
<rect x="481" y="250" width="1" height="19" fill="#C0C0C0"/>
<rect x="586" y="250" width="1" height="19" fill="#C0C0C0"/>
<rect x="685" y="250" width="1" height="19" fill="#C0C0C0"/>
<rect x="789" y="250" width="1" height="19" fill="#C0C0C0"/>
<rect x="985" y="250" width="1" height="19" fill="#C0C0C0"/>
<g fill="#000"><use href="#g30" x="310" y="264"/><use href="#g135" x="322" y="264"/></g>
<g fill="#000"><use href="#g8" x="352" y="263"/><use href="#g136" x="358" y="263"/><use href="#g120" x="364" y="263"/><use href="#g108" x="370" y="263"/><use href="#g100" x="376" y="263"/><use href="#g120" x="382" y="263"/><use href="#g120" x="388" y="263"/><use href="#g108" x="394" y="263"/><use href="#g108" x="400" y="263"/></g>
<g fill="#000"><use href="#g71" x="415" y="264"/><use href="#g72" x="427" y="264"/><use href="#g46" x="439" y="264"/><use href="#g37" x="451" y="264"/><use href="#g47" x="463" y="264"/></g>
<g fill="#000"><use href="#g138" x="485" y="263"/><use href="#g139" x="491" y="263"/><use href="#g140" x="497" y="263"/><use href="#g141" x="503" y="263"/><use href="#g106" x="509" y="263"/><use href="#g120" x="515" y="263"/><use href="#g120" x="521" y="263"/><use href="#g108" x="527" y="263"/><use href="#g100" x="533" y="263"/><use href="#g120" x="539" y="263"/><use href="#g106" x="545" y="263"/><use href="#g120" x="551" y="263"/><use href="#g120" x="557" y="263"/><use href="#g120" x="563" y="263"/><use href="#g107" x="569" y="263"/></g>
<g fill="#000"><use href="#g71" x="590" y="264"/><use href="#g72" x="602" y="264"/><use href="#g116" x="614" y="264"/><use href="#g80" x="626" y="264"/><use href="#g77" x="638" y="264"/><use href="#g45" x="650" y="264"/><use href="#g47" x="662" y="264"/></g>
<g fill="#000"><use href="#g138" x="689" y="263"/><use href="#g139" x="695" y="263"/><use href="#g142" x="701" y="263"/><use href="#g143" x="707" y="263"/><use href="#g106" x="713" y="263"/><use href="#g120" x="719" y="263"/><use href="#g120" x="725" y="263"/><use href="#g108" x="731" y="263"/><use href="#g100" x="737" y="263"/><use href="#g120" x="743" y="263"/><use href="#g106" x="749" y="263"/><use href="#g120" x="755" y="263"/><use href="#g120" x="761" y="263"/><use href="#g120" x="767" y="263"/><use href="#g115" x="773" y="263"/></g>
<g fill="#000"><use href="#g144" x="793" y="264"/><use href="#g145" x="805" y="264"/><use href="#g146" x="817" y="264"/><use href="#g147" x="829" y="264"/><use href="#g148" x="841" y="264"/><use href="#g68" x="853" y="264"/><use href="#g90" x="865" y="264"/><use href="#g149" x="877" y="264"/><use href="#g150" x="889" y="264"/><use href="#g151" x="901" y="264"/><use href="#g152" x="913" y="264"/></g>
<g fill="#000"><use href="#g100" x="989" y="263"/><use href="#g125" x="995" y="264"/></g>
<rect x="294" y="269" width="12" height="18" fill="#E6E6D5"/>
<rect x="294" y="269" width="1" height="19" fill="#FFFFFF"/>
<rect x="295" y="287" width="11" height="1" fill="#000000"/>
<rect x="307" y="287" width="700" height="1" fill="#C0C0C0"/>
<rect x="306" y="269" width="1" height="19" fill="#C0C0C0"/>
<rect x="348" y="269" width="1" height="19" fill="#C0C0C0"/>
<rect x="411" y="269" width="1" height="19" fill="#C0C0C0"/>
<rect x="481" y="269" width="1" height="19" fill="#C0C0C0"/>
<rect x="586" y="269" width="1" height="19" fill="#C0C0C0"/>
<rect x="685" y="269" width="1" height="19" fill="#C0C0C0"/>
<rect x="789" y="269" width="1" height="19" fill="#C0C0C0"/>
<rect x="985" y="269" width="1" height="19" fill="#C0C0C0"/>
<g fill="#000"><use href="#g30" x="310" y="283"/><use href="#g135" x="322" y="283"/></g>
<g fill="#000"><use href="#g8" x="352" y="282"/><use href="#g136" x="358" y="282"/><use href="#g120" x="364" y="282"/><use href="#g108" x="370" y="282"/><use href="#g100" x="376" y="282"/><use href="#g120" x="382" y="282"/><use href="#g120" x="388" y="282"/><use href="#g108" x="394" y="282"/><use href="#g168" x="400" y="282"/></g>
<g fill="#000"><use href="#g71" x="415" y="283"/><use href="#g72" x="427" y="283"/><use href="#g46" x="439" y="283"/><use href="#g37" x="451" y="283"/><use href="#g47" x="463" y="283"/></g>
<g fill="#000"><use href="#g138" x="485" y="282"/><use href="#g139" x="491" y="282"/><use href="#g140" x="497" y="282"/><use href="#g141" x="503" y="282"/><use href="#g106" x="509" y="282"/><use href="#g120" x="515" y="282"/><use href="#g120" x="521" y="282"/><use href="#g108" x="527" y="282"/><use href="#g100" x="533" y="282"/><use href="#g120" x="539" y="282"/><use href="#g106" x="545" y="282"/><use href="#g120" x="551" y="282"/><use href="#g120" x="557" y="282"/><use href="#g120" x="563" y="282"/><use href="#g106" x="569" y="282"/></g>
<g fill="#000"><use href="#g71" x="590" y="283"/><use href="#g72" x="602" y="283"/><use href="#g116" x="614" y="283"/><use href="#g80" x="626" y="283"/><use href="#g77" x="638" y="283"/><use href="#g45" x="650" y="283"/><use href="#g47" x="662" y="283"/></g>
<g fill="#000"><use href="#g138" x="689" y="282"/><use href="#g139" x="695" y="282"/><use href="#g142" x="701" y="282"/><use href="#g143" x="707" y="282"/><use href="#g106" x="713" y="282"/><use href="#g120" x="719" y="282"/><use href="#g120" x="725" y="282"/><use href="#g108" x="731" y="282"/><use href="#g100" x="737" y="282"/><use href="#g120" x="743" y="282"/><use href="#g106" x="749" y="282"/><use href="#g120" x="755" y="282"/><use href="#g120" x="761" y="282"/><use href="#g120" x="767" y="282"/><use href="#g107" x="773" y="282"/></g>
<g fill="#000"><use href="#g164" x="793" y="283"/><use href="#g165" x="805" y="283"/><use href="#g166" x="817" y="283"/><use href="#g155" x="829" y="283"/><use href="#g167" x="841" y="283"/><use href="#g149" x="853" y="283"/><use href="#g150" x="865" y="283"/><use href="#g151" x="877" y="283"/><use href="#g152" x="889" y="283"/></g>
<g fill="#000"><use href="#g100" x="989" y="282"/><use href="#g125" x="995" y="283"/></g>
<rect x="294" y="288" width="12" height="18" fill="#E6E6D5"/>
<rect x="294" y="288" width="1" height="19" fill="#FFFFFF"/>
<rect x="295" y="306" width="11" height="1" fill="#000000"/>
<rect x="307" y="306" width="700" height="1" fill="#C0C0C0"/>
<rect x="306" y="288" width="1" height="19" fill="#C0C0C0"/>
<rect x="348" y="288" width="1" height="19" fill="#C0C0C0"/>
<rect x="411" y="288" width="1" height="19" fill="#C0C0C0"/>
<rect x="481" y="288" width="1" height="19" fill="#C0C0C0"/>
<rect x="586" y="288" width="1" height="19" fill="#C0C0C0"/>
<rect x="685" y="288" width="1" height="19" fill="#C0C0C0"/>
<rect x="789" y="288" width="1" height="19" fill="#C0C0C0"/>
<rect x="985" y="288" width="1" height="19" fill="#C0C0C0"/>
<g fill="#000"><use href="#g30" x="310" y="302"/><use href="#g135" x="322" y="302"/></g>
<g fill="#000"><use href="#g8" x="352" y="301"/><use href="#g136" x="358" y="301"/><use href="#g120" x="364" y="301"/><use href="#g108" x="370" y="301"/><use href="#g100" x="376" y="301"/><use href="#g120" x="382" y="301"/><use href="#g120" x="388" y="301"/><use href="#g108" x="394" y="301"/><use href="#g169" x="400" y="301"/></g>
<g fill="#000"><use href="#g71" x="415" y="302"/><use href="#g72" x="427" y="302"/><use href="#g46" x="439" y="302"/><use href="#g37" x="451" y="302"/><use href="#g47" x="463" y="302"/></g>
<g fill="#000"><use href="#g138" x="485" y="301"/><use href="#g139" x="491" y="301"/><use href="#g140" x="497" y="301"/><use href="#g141" x="503" y="301"/><use href="#g106" x="509" y="301"/><use href="#g120" x="515" y="301"/><use href="#g120" x="521" y="301"/><use href="#g108" x="527" y="301"/><use href="#g100" x="533" y="301"/><use href="#g120" x="539" y="301"/><use href="#g106" x="545" y="301"/><use href="#g120" x="551" y="301"/><use href="#g120" x="557" y="301"/><use href="#g120" x="563" y="301"/><use href="#g100" x="569" y="301"/></g>
<g fill="#000"><use href="#g71" x="590" y="302"/><use href="#g72" x="602" y="302"/><use href="#g116" x="614" y="302"/><use href="#g80" x="626" y="302"/><use href="#g77" x="638" y="302"/><use href="#g45" x="650" y="302"/><use href="#g47" x="662" y="302"/></g>
<g fill="#000"><use href="#g138" x="689" y="301"/><use href="#g139" x="695" y="301"/><use href="#g142" x="701" y="301"/><use href="#g143" x="707" y="301"/><use href="#g106" x="713" y="301"/><use href="#g120" x="719" y="301"/><use href="#g120" x="725" y="301"/><use href="#g108" x="731" y="301"/><use href="#g100" x="737" y="301"/><use href="#g120" x="743" y="301"/><use href="#g106" x="749" y="301"/><use href="#g120" x="755" y="301"/><use href="#g120" x="761" y="301"/><use href="#g120" x="767" y="301"/><use href="#g100" x="773" y="301"/></g>
<g fill="#000"><use href="#g144" x="793" y="302"/><use href="#g145" x="805" y="302"/><use href="#g146" x="817" y="302"/><use href="#g147" x="829" y="302"/><use href="#g148" x="841" y="302"/><use href="#g68" x="853" y="302"/><use href="#g90" x="865" y="302"/><use href="#g149" x="877" y="302"/><use href="#g150" x="889" y="302"/><use href="#g151" x="901" y="302"/><use href="#g152" x="913" y="302"/></g>
<g fill="#000"><use href="#g100" x="989" y="301"/><use href="#g125" x="995" y="302"/></g>
<rect x="294" y="307" width="12" height="18" fill="#E6E6D5"/>
<rect x="294" y="307" width="1" height="19" fill="#FFFFFF"/>
<rect x="295" y="325" width="11" height="1" fill="#000000"/>
<rect x="307" y="325" width="700" height="1" fill="#C0C0C0"/>
<rect x="306" y="307" width="1" height="19" fill="#C0C0C0"/>
<rect x="348" y="307" width="1" height="19" fill="#C0C0C0"/>
<rect x="411" y="307" width="1" height="19" fill="#C0C0C0"/>
<rect x="481" y="307" width="1" height="19" fill="#C0C0C0"/>
<rect x="586" y="307" width="1" height="19" fill="#C0C0C0"/>
<rect x="685" y="307" width="1" height="19" fill="#C0C0C0"/>
<rect x="789" y="307" width="1" height="19" fill="#C0C0C0"/>
<rect x="985" y="307" width="1" height="19" fill="#C0C0C0"/>
<g fill="#000"><use href="#g30" x="310" y="321"/><use href="#g135" x="322" y="321"/></g>
<g fill="#000"><use href="#g8" x="352" y="320"/><use href="#g136" x="358" y="320"/><use href="#g120" x="364" y="320"/><use href="#g108" x="370" y="320"/><use href="#g100" x="376" y="320"/><use href="#g120" x="382" y="320"/><use href="#g120" x="388" y="320"/><use href="#g108" x="394" y="320"/><use href="#g101" x="400" y="320"/></g>
<g fill="#000"><use href="#g71" x="415" y="321"/><use href="#g72" x="427" y="321"/><use href="#g46" x="439" y="321"/><use href="#g37" x="451" y="321"/><use href="#g47" x="463" y="321"/></g>
<g fill="#000"><use href="#g138" x="485" y="320"/><use href="#g139" x="491" y="320"/><use href="#g140" x="497" y="320"/><use href="#g141" x="503" y="320"/><use href="#g106" x="509" y="320"/><use href="#g120" x="515" y="320"/><use href="#g120" x="521" y="320"/><use href="#g108" x="527" y="320"/><use href="#g100" x="533" y="320"/><use href="#g120" x="539" y="320"/><use href="#g100" x="545" y="320"/><use href="#g137" x="551" y="320"/><use href="#g120" x="557" y="320"/><use href="#g120" x="563" y="320"/><use href="#g137" x="569" y="320"/></g>
<g fill="#000"><use href="#g71" x="590" y="321"/><use href="#g72" x="602" y="321"/><use href="#g116" x="614" y="321"/><use href="#g80" x="626" y="321"/><use href="#g77" x="638" y="321"/><use href="#g45" x="650" y="321"/><use href="#g47" x="662" y="321"/></g>
<g fill="#000"><use href="#g138" x="689" y="320"/><use href="#g139" x="695" y="320"/><use href="#g142" x="701" y="320"/><use href="#g143" x="707" y="320"/><use href="#g106" x="713" y="320"/><use href="#g120" x="719" y="320"/><use href="#g120" x="725" y="320"/><use href="#g108" x="731" y="320"/><use href="#g100" x="737" y="320"/><use href="#g120" x="743" y="320"/><use href="#g100" x="749" y="320"/><use href="#g137" x="755" y="320"/><use href="#g120" x="761" y="320"/><use href="#g120" x="767" y="320"/><use href="#g108" x="773" y="320"/></g>
<g fill="#000"><use href="#g164" x="793" y="321"/><use href="#g165" x="805" y="321"/><use href="#g166" x="817" y="321"/><use href="#g155" x="829" y="321"/><use href="#g167" x="841" y="321"/><use href="#g149" x="853" y="321"/><use href="#g150" x="865" y="321"/><use href="#g151" x="877" y="321"/><use href="#g152" x="889" y="321"/></g>
<g fill="#000"><use href="#g100" x="989" y="320"/><use href="#g125" x="995" y="321"/></g>
<rect x="294" y="326" width="12" height="18" fill="#E6E6D5"/>
<rect x="294" y="326" width="1" height="19" fill="#FFFFFF"/>
<rect x="295" y="344" width="11" height="1" fill="#000000"/>
<rect x="307" y="344" width="700" height="1" fill="#C0C0C0"/>
<rect x="306" y="326" width="1" height="19" fill="#C0C0C0"/>
<rect x="348" y="326" width="1" height="19" fill="#C0C0C0"/>
<rect x="411" y="326" width="1" height="19" fill="#C0C0C0"/>
<rect x="481" y="326" width="1" height="19" fill="#C0C0C0"/>
<rect x="586" y="326" width="1" height="19" fill="#C0C0C0"/>
<rect x="685" y="326" width="1" height="19" fill="#C0C0C0"/>
<rect x="789" y="326" width="1" height="19" fill="#C0C0C0"/>
<rect x="985" y="326" width="1" height="19" fill="#C0C0C0"/>
<g fill="#000"><use href="#g30" x="310" y="340"/><use href="#g135" x="322" y="340"/></g>
<g fill="#000"><use href="#g8" x="352" y="339"/><use href="#g136" x="358" y="339"/><use href="#g120" x="364" y="339"/><use href="#g108" x="370" y="339"/><use href="#g100" x="376" y="339"/><use href="#g120" x="382" y="339"/><use href="#g120" x="388" y="339"/><use href="#g108" x="394" y="339"/><use href="#g115" x="400" y="339"/></g>
<g fill="#000"><use href="#g71" x="415" y="340"/><use href="#g72" x="427" y="340"/><use href="#g46" x="439" y="340"/><use href="#g37" x="451" y="340"/><use href="#g47" x="463" y="340"/></g>
<g fill="#000"><use href="#g138" x="485" y="339"/><use href="#g139" x="491" y="339"/><use href="#g140" x="497" y="339"/><use href="#g141" x="503" y="339"/><use href="#g106" x="509" y="339"/><use href="#g120" x="515" y="339"/><use href="#g120" x="521" y="339"/><use href="#g108" x="527" y="339"/><use href="#g100" x="533" y="339"/><use href="#g120" x="539" y="339"/><use href="#g100" x="545" y="339"/><use href="#g137" x="551" y="339"/><use href="#g120" x="557" y="339"/><use href="#g120" x="563" y="339"/><use href="#g108" x="569" y="339"/></g>
<g fill="#000"><use href="#g71" x="590" y="340"/><use href="#g72" x="602" y="340"/><use href="#g116" x="614" y="340"/><use href="#g80" x="626" y="340"/><use href="#g77" x="638" y="340"/><use href="#g45" x="650" y="340"/><use href="#g47" x="662" y="340"/></g>
<g fill="#000"><use href="#g138" x="689" y="339"/><use href="#g139" x="695" y="339"/><use href="#g142" x="701" y="339"/><use href="#g143" x="707" y="339"/><use href="#g106" x="713" y="339"/><use href="#g120" x="719" y="339"/><use href="#g120" x="725" y="339"/><use href="#g108" x="731" y="339"/><use href="#g100" x="737" y="339"/><use href="#g120" x="743" y="339"/><use href="#g100" x="749" y="339"/><use href="#g137" x="755" y="339"/><use href="#g120" x="761" y="339"/><use href="#g120" x="767" y="339"/><use href="#g137" x="773" y="339"/></g>
<g fill="#000"><use href="#g164" x="793" y="340"/><use href="#g165" x="805" y="340"/><use href="#g166" x="817" y="340"/><use href="#g155" x="829" y="340"/><use href="#g167" x="841" y="340"/><use href="#g149" x="853" y="340"/><use href="#g150" x="865" y="340"/><use href="#g151" x="877" y="340"/><use href="#g152" x="889" y="340"/></g>
<g fill="#000"><use href="#g100" x="989" y="339"/><use href="#g125" x="995" y="340"/></g>
<rect x="294" y="345" width="12" height="18" fill="#E6E6D5"/>
<rect x="294" y="345" width="1" height="19" fill="#FFFFFF"/>
<rect x="295" y="363" width="11" height="1" fill="#000000"/>
<rect x="307" y="363" width="700" height="1" fill="#C0C0C0"/>
<rect x="306" y="345" width="1" height="19" fill="#C0C0C0"/>
<rect x="348" y="345" width="1" height="19" fill="#C0C0C0"/>
<rect x="411" y="345" width="1" height="19" fill="#C0C0C0"/>
<rect x="481" y="345" width="1" height="19" fill="#C0C0C0"/>
<rect x="586" y="345" width="1" height="19" fill="#C0C0C0"/>
<rect x="685" y="345" width="1" height="19" fill="#C0C0C0"/>
<rect x="789" y="345" width="1" height="19" fill="#C0C0C0"/>
<rect x="985" y="345" width="1" height="19" fill="#C0C0C0"/>
<g fill="#000"><use href="#g30" x="310" y="359"/><use href="#g135" x="322" y="359"/></g>
<g fill="#000"><use href="#g8" x="352" y="358"/><use href="#g136" x="358" y="358"/><use href="#g120" x="364" y="358"/><use href="#g108" x="370" y="358"/><use href="#g100" x="376" y="358"/><use href="#g120" x="382" y="358"/><use href="#g120" x="388" y="358"/><use href="#g108" x="394" y="358"/><use href="#g107" x="400" y="358"/></g>
<g fill="#000"><use href="#g71" x="415" y="359"/><use href="#g72" x="427" y="359"/><use href="#g46" x="439" y="359"/><use href="#g37" x="451" y="359"/><use href="#g47" x="463" y="359"/></g>
<g fill="#000"><use href="#g138" x="485" y="358"/><use href="#g139" x="491" y="358"/><use href="#g140" x="497" y="358"/><use href="#g141" x="503" y="358"/><use href="#g106" x="509" y="358"/><use href="#g120" x="515" y="358"/><use href="#g120" x="521" y="358"/><use href="#g108" x="527" y="358"/><use href="#g100" x="533" y="358"/><use href="#g120" x="539" y="358"/><use href="#g100" x="545" y="358"/><use href="#g137" x="551" y="358"/><use href="#g120" x="557" y="358"/><use href="#g120" x="563" y="358"/><use href="#g168" x="569" y="358"/></g>
<g fill="#000"><use href="#g71" x="590" y="359"/><use href="#g72" x="602" y="359"/><use href="#g116" x="614" y="359"/><use href="#g80" x="626" y="359"/><use href="#g77" x="638" y="359"/><use href="#g45" x="650" y="359"/><use href="#g47" x="662" y="359"/></g>
<g fill="#000"><use href="#g138" x="689" y="358"/><use href="#g139" x="695" y="358"/><use href="#g142" x="701" y="358"/><use href="#g143" x="707" y="358"/><use href="#g106" x="713" y="358"/><use href="#g120" x="719" y="358"/><use href="#g120" x="725" y="358"/><use href="#g108" x="731" y="358"/><use href="#g100" x="737" y="358"/><use href="#g120" x="743" y="358"/><use href="#g100" x="749" y="358"/><use href="#g137" x="755" y="358"/><use href="#g120" x="761" y="358"/><use href="#g120" x="767" y="358"/><use href="#g168" x="773" y="358"/></g>
<g fill="#000"><use href="#g144" x="793" y="359"/><use href="#g145" x="805" y="359"/><use href="#g146" x="817" y="359"/><use href="#g147" x="829" y="359"/><use href="#g148" x="841" y="359"/><use href="#g68" x="853" y="359"/><use href="#g90" x="865" y="359"/><use href="#g149" x="877" y="359"/><use href="#g150" x="889" y="359"/><use href="#g151" x="901" y="359"/><use href="#g152" x="913" y="359"/></g>
<g fill="#000"><use href="#g100" x="989" y="358"/><use href="#g125" x="995" y="359"/></g>
<rect x="294" y="364" width="12" height="18" fill="#E6E6D5"/>
<rect x="294" y="364" width="1" height="19" fill="#FFFFFF"/>
<rect x="295" y="382" width="11" height="1" fill="#000000"/>
<rect x="307" y="382" width="700" height="1" fill="#C0C0C0"/>
<rect x="306" y="364" width="1" height="19" fill="#C0C0C0"/>
<rect x="348" y="364" width="1" height="19" fill="#C0C0C0"/>
<rect x="411" y="364" width="1" height="19" fill="#C0C0C0"/>
<rect x="481" y="364" width="1" height="19" fill="#C0C0C0"/>
<rect x="586" y="364" width="1" height="19" fill="#C0C0C0"/>
<rect x="685" y="364" width="1" height="19" fill="#C0C0C0"/>
<rect x="789" y="364" width="1" height="19" fill="#C0C0C0"/>
<rect x="985" y="364" width="1" height="19" fill="#C0C0C0"/>
<g fill="#000"><use href="#g30" x="310" y="378"/><use href="#g135" x="322" y="378"/></g>
<g fill="#000"><use href="#g8" x="352" y="377"/><use href="#g136" x="358" y="377"/><use href="#g120" x="364" y="377"/><use href="#g108" x="370" y="377"/><use href="#g100" x="376" y="377"/><use href="#g120" x="382" y="377"/><use href="#g120" x="388" y="377"/><use href="#g108" x="394" y="377"/><use href="#g106" x="400" y="377"/></g>
<g fill="#000"><use href="#g71" x="415" y="378"/><use href="#g72" x="427" y="378"/><use href="#g46" x="439" y="378"/><use href="#g37" x="451" y="378"/><use href="#g47" x="463" y="378"/></g>
<g fill="#000"><use href="#g138" x="485" y="377"/><use href="#g139" x="491" y="377"/><use href="#g140" x="497" y="377"/><use href="#g141" x="503" y="377"/><use href="#g106" x="509" y="377"/><use href="#g120" x="515" y="377"/><use href="#g120" x="521" y="377"/><use href="#g108" x="527" y="377"/><use href="#g100" x="533" y="377"/><use href="#g120" x="539" y="377"/><use href="#g100" x="545" y="377"/><use href="#g137" x="551" y="377"/><use href="#g120" x="557" y="377"/><use href="#g120" x="563" y="377"/><use href="#g169" x="569" y="377"/></g>
<g fill="#000"><use href="#g71" x="590" y="378"/><use href="#g72" x="602" y="378"/><use href="#g116" x="614" y="378"/><use href="#g80" x="626" y="378"/><use href="#g77" x="638" y="378"/><use href="#g45" x="650" y="378"/><use href="#g47" x="662" y="378"/></g>
<g fill="#000"><use href="#g138" x="689" y="377"/><use href="#g139" x="695" y="377"/><use href="#g142" x="701" y="377"/><use href="#g143" x="707" y="377"/><use href="#g106" x="713" y="377"/><use href="#g120" x="719" y="377"/><use href="#g120" x="725" y="377"/><use href="#g108" x="731" y="377"/><use href="#g100" x="737" y="377"/><use href="#g120" x="743" y="377"/><use href="#g100" x="749" y="377"/><use href="#g137" x="755" y="377"/><use href="#g120" x="761" y="377"/><use href="#g120" x="767" y="377"/><use href="#g169" x="773" y="377"/></g>
<g fill="#000"><use href="#g144" x="793" y="378"/><use href="#g145" x="805" y="378"/><use href="#g146" x="817" y="378"/><use href="#g147" x="829" y="378"/><use href="#g148" x="841" y="378"/><use href="#g68" x="853" y="378"/><use href="#g90" x="865" y="378"/><use href="#g149" x="877" y="378"/><use href="#g150" x="889" y="378"/><use href="#g151" x="901" y="378"/><use href="#g152" x="913" y="378"/></g>
<g fill="#000"><use href="#g100" x="989" y="377"/><use href="#g125" x="995" y="378"/></g>
<rect x="294" y="383" width="12" height="18" fill="#E6E6D5"/>
<rect x="294" y="383" width="1" height="19" fill="#FFFFFF"/>
<rect x="295" y="401" width="11" height="1" fill="#000000"/>
<rect x="307" y="401" width="700" height="1" fill="#C0C0C0"/>
<rect x="306" y="383" width="1" height="19" fill="#C0C0C0"/>
<rect x="348" y="383" width="1" height="19" fill="#C0C0C0"/>
<rect x="411" y="383" width="1" height="19" fill="#C0C0C0"/>
<rect x="481" y="383" width="1" height="19" fill="#C0C0C0"/>
<rect x="586" y="383" width="1" height="19" fill="#C0C0C0"/>
<rect x="685" y="383" width="1" height="19" fill="#C0C0C0"/>
<rect x="789" y="383" width="1" height="19" fill="#C0C0C0"/>
<rect x="985" y="383" width="1" height="19" fill="#C0C0C0"/>
<g fill="#000"><use href="#g30" x="310" y="397"/><use href="#g135" x="322" y="397"/></g>
<g fill="#000"><use href="#g8" x="352" y="396"/><use href="#g136" x="358" y="396"/><use href="#g120" x="364" y="396"/><use href="#g108" x="370" y="396"/><use href="#g100" x="376" y="396"/><use href="#g120" x="382" y="396"/><use href="#g120" x="388" y="396"/><use href="#g108" x="394" y="396"/><use href="#g100" x="400" y="396"/></g>
<g fill="#000"><use href="#g71" x="415" y="397"/><use href="#g72" x="427" y="397"/><use href="#g46" x="439" y="397"/><use href="#g37" x="451" y="397"/><use href="#g47" x="463" y="397"/></g>
<g fill="#000"><use href="#g138" x="485" y="396"/><use href="#g139" x="491" y="396"/><use href="#g140" x="497" y="396"/><use href="#g141" x="503" y="396"/><use href="#g106" x="509" y="396"/><use href="#g120" x="515" y="396"/><use href="#g120" x="521" y="396"/><use href="#g108" x="527" y="396"/><use href="#g100" x="533" y="396"/><use href="#g120" x="539" y="396"/><use href="#g100" x="545" y="396"/><use href="#g137" x="551" y="396"/><use href="#g120" x="557" y="396"/><use href="#g120" x="563" y="396"/><use href="#g107" x="569" y="396"/></g>
<g fill="#000"><use href="#g71" x="590" y="397"/><use href="#g72" x="602" y="397"/><use href="#g116" x="614" y="397"/><use href="#g80" x="626" y="397"/><use href="#g77" x="638" y="397"/><use href="#g45" x="650" y="397"/><use href="#g47" x="662" y="397"/></g>
<g fill="#000"><use href="#g138" x="689" y="396"/><use href="#g139" x="695" y="396"/><use href="#g142" x="701" y="396"/><use href="#g143" x="707" y="396"/><use href="#g106" x="713" y="396"/><use href="#g120" x="719" y="396"/><use href="#g120" x="725" y="396"/><use href="#g108" x="731" y="396"/><use href="#g100" x="737" y="396"/><use href="#g120" x="743" y="396"/><use href="#g100" x="749" y="396"/><use href="#g137" x="755" y="396"/><use href="#g120" x="761" y="396"/><use href="#g120" x="767" y="396"/><use href="#g107" x="773" y="396"/></g>
<g fill="#000"><use href="#g144" x="793" y="397"/><use href="#g145" x="805" y="397"/><use href="#g146" x="817" y="397"/><use href="#g147" x="829" y="397"/><use href="#g148" x="841" y="397"/><use href="#g68" x="853" y="397"/><use href="#g90" x="865" y="397"/><use href="#g149" x="877" y="397"/><use href="#g150" x="889" y="397"/><use href="#g151" x="901" y="397"/><use href="#g152" x="913" y="397"/></g>
<g fill="#000"><use href="#g100" x="989" y="396"/><use href="#g125" x="995" y="397"/></g>
</g>
<rect x="1007" y="117" width="17" height="277" fill="#FFFFFF"/>
<rect x="1007" y="117" width="6" height="277" fill="#EEEDE8"/>
<rect x="1013" y="117" width="2" height="277" fill="#FDF9EE"/>
<rect x="1023" y="117" width="1" height="277" fill="#EEEEEE"/>
<rect x="1008" y="118" width="16" height="15" rx="2.5" fill="#FFFFFF" shape-rendering="auto"/>
<rect x="1009" y="119" width="14" height="13" rx="1.5" fill="url(#sbBtn)" shape-rendering="auto"/>
<rect x="1010" y="133" width="12" height="1" fill="#8FB0E6"/>
<polyline points="1012,127 1016,123 1020,127" fill="none" stroke="#2D5B8C" stroke-width="2.3" shape-rendering="auto"/>
<rect x="1008" y="330" width="14" height="16" rx="2" fill="#FFFFFF"/>
<rect x="1008.5" y="330.5" width="13" height="15" rx="1.5" fill="#CBE5FD" stroke="#A4C2F4" stroke-width="1"/>
<rect x="1012" y="333" width="6" height="1" fill="#FFFFFF"/>
<rect x="1013" y="334" width="6" height="1" fill="#8CB6F6"/>
<rect x="1012" y="335" width="6" height="1" fill="#FFFFFF"/>
<rect x="1013" y="336" width="6" height="1" fill="#8CB6F6"/>
<rect x="1012" y="337" width="6" height="1" fill="#FFFFFF"/>
<rect x="1013" y="338" width="6" height="1" fill="#8CB6F6"/>
<rect x="1012" y="339" width="6" height="1" fill="#FFFFFF"/>
<rect x="1013" y="340" width="6" height="1" fill="#8CB6F6"/>
<rect x="1008" y="378" width="16" height="15" rx="2.5" fill="#FFFFFF" shape-rendering="auto"/>
<rect x="1009" y="379" width="14" height="13" rx="1.5" fill="url(#sbBtn)" shape-rendering="auto"/>
<rect x="1010" y="393" width="12" height="1" fill="#8FB0E6"/>
<polyline points="1012,383 1016,387 1020,383" fill="none" stroke="#2D5B8C" stroke-width="2.3" shape-rendering="auto"/>
<rect x="294" y="394" width="713" height="17" fill="#FFFFFF"/>
<rect x="294" y="394" width="713" height="6" fill="#EEEDE8"/>
<rect x="294" y="400" width="713" height="2" fill="#FDF9EE"/>
<rect x="294" y="395" width="16" height="15" rx="2.5" fill="#FFFFFF" shape-rendering="auto"/>
<rect x="295" y="396" width="14" height="13" rx="1.5" fill="url(#sbBtn)" shape-rendering="auto"/>
<rect x="296" y="410" width="12" height="1" fill="#8FB0E6"/>
<polyline points="304,398 300,402 304,406" fill="none" stroke="#2D5B8C" stroke-width="2.3" shape-rendering="auto"/>
<rect x="311" y="395" width="17" height="14" rx="2" fill="#FFFFFF"/>
<rect x="311.5" y="395.5" width="16" height="13" rx="1.5" fill="#CFD0FA" stroke="#A9C0F2" stroke-width="1"/>
<rect x="315" y="399" width="1" height="6" fill="#FFFFFF"/>
<rect x="316" y="400" width="1" height="6" fill="#8CB6F6"/>
<rect x="317" y="399" width="1" height="6" fill="#FFFFFF"/>
<rect x="318" y="400" width="1" height="6" fill="#8CB6F6"/>
<rect x="319" y="399" width="1" height="6" fill="#FFFFFF"/>
<rect x="320" y="400" width="1" height="6" fill="#8CB6F6"/>
<rect x="321" y="399" width="1" height="6" fill="#FFFFFF"/>
<rect x="322" y="400" width="1" height="6" fill="#8CB6F6"/>
<rect x="991" y="395" width="16" height="15" rx="2.5" fill="#FFFFFF" shape-rendering="auto"/>
<rect x="992" y="396" width="14" height="13" rx="1.5" fill="url(#sbBtn)" shape-rendering="auto"/>
<rect x="993" y="410" width="12" height="1" fill="#8FB0E6"/>
<polyline points="997,398 1001,402 997,406" fill="none" stroke="#2D5B8C" stroke-width="2.3" shape-rendering="auto"/>
<rect x="1007" y="394" width="17" height="17" fill="#E6E6D5"/>
<rect x="293" y="411" width="731" height="1" fill="#000000"/>
<rect x="293" y="116" width="1" height="296" fill="#000000"/>
<rect x="293" y="116" width="731" height="1" fill="#000000"/>
<g clip-path="url(#cLo)">
<rect x="297" y="416" width="716" height="245" fill="#FFFFFF"/>
<rect x="297" y="416" width="716" height="1" fill="#000000"/>
<rect x="297" y="416" width="1" height="245" fill="#000000"/>
<rect x="298" y="417" width="12" height="19" fill="#E6E6D5"/>
<rect x="298" y="417" width="1" height="19" fill="#FFFFFF"/>
<rect x="298" y="417" width="12" height="1" fill="#FFFFFF"/>
<rect x="309" y="417" width="1" height="19" fill="#000000"/>
<rect x="299" y="435" width="11" height="1" fill="#000000"/>
<rect x="310" y="417" width="28" height="19" fill="#E6E6D5"/>
<rect x="310" y="417" width="1" height="19" fill="#FFFFFF"/>
<rect x="310" y="417" width="28" height="1" fill="#FFFFFF"/>
<rect x="337" y="417" width="1" height="19" fill="#000000"/>
<rect x="311" y="435" width="27" height="1" fill="#000000"/>
<g fill="#000"><use href="#g170" x="313" y="431"/><use href="#g125" x="325" y="431"/></g>
<rect x="338" y="417" width="63" height="19" fill="#E6E6D5"/>
<rect x="338" y="417" width="1" height="19" fill="#FFFFFF"/>
<rect x="338" y="417" width="63" height="1" fill="#FFFFFF"/>
<rect x="400" y="417" width="1" height="19" fill="#000000"/>
<rect x="339" y="435" width="62" height="1" fill="#000000"/>
<g fill="#000"><use href="#g89" x="341" y="431"/><use href="#g90" x="353" y="431"/><use href="#g171" x="365" y="431"/><use href="#g172" x="377" y="431"/></g>
<rect x="401" y="417" width="77" height="19" fill="#E6E6D5"/>
<rect x="401" y="417" width="1" height="19" fill="#FFFFFF"/>
<rect x="401" y="417" width="77" height="1" fill="#FFFFFF"/>
<rect x="477" y="417" width="1" height="19" fill="#000000"/>
<rect x="402" y="435" width="76" height="1" fill="#000000"/>
<g fill="#000"><use href="#g89" x="404" y="431"/><use href="#g90" x="416" y="431"/><use href="#g173" x="428" y="431"/><use href="#g174" x="440" y="431"/></g>
<rect x="478" y="417" width="56" height="19" fill="#E6E6D5"/>
<rect x="478" y="417" width="1" height="19" fill="#FFFFFF"/>
<rect x="478" y="417" width="56" height="1" fill="#FFFFFF"/>
<rect x="533" y="417" width="1" height="19" fill="#000000"/>
<rect x="479" y="435" width="55" height="1" fill="#000000"/>
<g fill="#000"><use href="#g175" x="481" y="431"/><use href="#g176" x="493" y="431"/><use href="#g177" x="505" y="431"/><use href="#g178" x="517" y="431"/></g>
<rect x="534" y="417" width="56" height="19" fill="#E6E6D5"/>
<rect x="534" y="417" width="1" height="19" fill="#FFFFFF"/>
<rect x="534" y="417" width="56" height="1" fill="#FFFFFF"/>
<rect x="589" y="417" width="1" height="19" fill="#000000"/>
<rect x="535" y="435" width="55" height="1" fill="#000000"/>
<g fill="#000"><use href="#g133" x="537" y="431"/><use href="#g46" x="549" y="431"/><use href="#g179" x="561" y="431"/><use href="#g94" x="573" y="431"/></g>
<rect x="590" y="417" width="56" height="19" fill="#E6E6D5"/>
<rect x="590" y="417" width="1" height="19" fill="#FFFFFF"/>
<rect x="590" y="417" width="56" height="1" fill="#FFFFFF"/>
<rect x="645" y="417" width="1" height="19" fill="#000000"/>
<rect x="591" y="435" width="55" height="1" fill="#000000"/>
<g fill="#000"><use href="#g180" x="593" y="431"/><use href="#g46" x="605" y="431"/><use href="#g37" x="617" y="431"/><use href="#g179" x="629" y="431"/></g>
<rect x="646" y="417" width="56" height="19" fill="#E6E6D5"/>
<rect x="646" y="417" width="1" height="19" fill="#FFFFFF"/>
<rect x="646" y="417" width="56" height="1" fill="#FFFFFF"/>
<rect x="701" y="417" width="1" height="19" fill="#000000"/>
<rect x="647" y="435" width="55" height="1" fill="#000000"/>
<g fill="#000"><use href="#g46" x="649" y="431"/><use href="#g37" x="661" y="431"/><use href="#g179" x="673" y="431"/><use href="#g94" x="685" y="431"/></g>
<rect x="702" y="417" width="56" height="19" fill="#E6E6D5"/>
<rect x="702" y="417" width="1" height="19" fill="#FFFFFF"/>
<rect x="702" y="417" width="56" height="1" fill="#FFFFFF"/>
<rect x="757" y="417" width="1" height="19" fill="#000000"/>
<rect x="703" y="435" width="55" height="1" fill="#000000"/>
<g fill="#000"><use href="#g181" x="705" y="431"/><use href="#g125" x="717" y="431"/></g>
<rect x="758" y="417" width="68" height="19" fill="#E6E6D5"/>
<rect x="758" y="417" width="1" height="19" fill="#FFFFFF"/>
<rect x="758" y="417" width="68" height="1" fill="#FFFFFF"/>
<rect x="825" y="417" width="1" height="19" fill="#000000"/>
<rect x="759" y="435" width="67" height="1" fill="#000000"/>
<g fill="#000"><use href="#g182" x="761" y="431"/><use href="#g183" x="773" y="431"/><use href="#g184" x="785" y="431"/><use href="#g185" x="797" y="431"/></g>
<rect x="826" y="417" width="68" height="19" fill="#E6E6D5"/>
<rect x="826" y="417" width="1" height="19" fill="#FFFFFF"/>
<rect x="826" y="417" width="68" height="1" fill="#FFFFFF"/>
<rect x="893" y="417" width="1" height="19" fill="#000000"/>
<rect x="827" y="435" width="67" height="1" fill="#000000"/>
<g fill="#000"><use href="#g149" x="829" y="431"/><use href="#g186" x="841" y="431"/><use href="#g185" x="853" y="431"/><use href="#g187" x="865" y="431"/></g>
<rect x="894" y="417" width="30" height="19" fill="#E6E6D5"/>
<rect x="894" y="417" width="1" height="19" fill="#FFFFFF"/>
<rect x="894" y="417" width="30" height="1" fill="#FFFFFF"/>
<rect x="923" y="417" width="1" height="19" fill="#000000"/>
<rect x="895" y="435" width="29" height="1" fill="#000000"/>
<g fill="#000"><use href="#g47" x="897" y="431"/><use href="#g188" x="909" y="431"/></g>
<rect x="924" y="417" width="57" height="19" fill="#E6E6D5"/>
<rect x="924" y="417" width="1" height="19" fill="#FFFFFF"/>
<rect x="924" y="417" width="57" height="1" fill="#FFFFFF"/>
<rect x="980" y="417" width="1" height="19" fill="#000000"/>
<rect x="925" y="435" width="56" height="1" fill="#000000"/>
<g fill="#000"><use href="#g65" x="927" y="431"/><use href="#g66" x="939" y="431"/><use href="#g189" x="951" y="431"/><use href="#g190" x="963" y="431"/></g>
<rect x="981" y="417" width="32" height="19" fill="#E6E6D5"/>
<rect x="981" y="417" width="1" height="19" fill="#FFFFFF"/>
<rect x="981" y="417" width="32" height="1" fill="#FFFFFF"/>
<rect x="982" y="435" width="31" height="1" fill="#000000"/>
<g fill="#000"><use href="#g37" x="984" y="431"/><use href="#g93" x="996" y="431"/><use href="#g179" x="1008" y="431"/><use href="#g94" x="1020" y="431"/></g>
<rect x="298" y="436" width="11" height="18" fill="#E6E6D5"/>
<rect x="298" y="436" width="1" height="19" fill="#FFFFFF"/>
<rect x="299" y="454" width="10" height="1" fill="#000000"/>
<rect x="310" y="454" width="703" height="1" fill="#C0C0C0"/>
<rect x="309" y="436" width="1" height="19" fill="#C0C0C0"/>
<rect x="337" y="436" width="1" height="19" fill="#C0C0C0"/>
<rect x="400" y="436" width="1" height="19" fill="#C0C0C0"/>
<rect x="477" y="436" width="1" height="19" fill="#C0C0C0"/>
<rect x="533" y="436" width="1" height="19" fill="#C0C0C0"/>
<rect x="589" y="436" width="1" height="19" fill="#C0C0C0"/>
<rect x="645" y="436" width="1" height="19" fill="#C0C0C0"/>
<rect x="701" y="436" width="1" height="19" fill="#C0C0C0"/>
<rect x="757" y="436" width="1" height="19" fill="#C0C0C0"/>
<rect x="758" y="436" width="1" height="19" fill="#C0C0C0"/>
<rect x="825" y="436" width="1" height="19" fill="#C0C0C0"/>
<rect x="893" y="436" width="1" height="19" fill="#C0C0C0"/>
<rect x="894" y="436" width="1" height="19" fill="#C0C0C0"/>
<rect x="923" y="436" width="1" height="19" fill="#C0C0C0"/>
<rect x="924" y="436" width="1" height="19" fill="#C0C0C0"/>
<rect x="980" y="436" width="1" height="19" fill="#C0C0C0"/>
<rect x="981" y="436" width="1" height="19" fill="#C0C0C0"/>
<g fill="#000"><use href="#g100" x="313" y="449"/></g>
<g fill="#000"><use href="#g120" x="341" y="449"/><use href="#g100" x="347" y="449"/><use href="#g191" x="353" y="449"/><use href="#g120" x="359" y="449"/><use href="#g100" x="365" y="449"/><use href="#g191" x="371" y="449"/><use href="#g120" x="377" y="449"/><use href="#g120" x="383" y="449"/><use href="#g169" x="389" y="449"/></g>
<g fill="#000"><use href="#g192" x="404" y="450"/></g>
<g fill="#000"><use href="#g101" x="481" y="449"/><use href="#g120" x="487" y="449"/><use href="#g120" x="493" y="449"/><use href="#g193" x="499" y="449"/></g>
<g fill="#000"><use href="#g106" x="537" y="449"/><use href="#g120" x="543" y="449"/><use href="#g120" x="549" y="449"/><use href="#g191" x="555" y="449"/><use href="#g120" x="561" y="449"/><use href="#g120" x="567" y="449"/><use href="#g120" x="573" y="449"/></g>
<g fill="#000"><use href="#g191" x="593" y="449"/><use href="#g120" x="599" y="449"/><use href="#g120" x="605" y="449"/><use href="#g120" x="611" y="449"/></g>
<g fill="#000"><use href="#g106" x="649" y="449"/><use href="#g120" x="655" y="449"/><use href="#g120" x="661" y="449"/><use href="#g191" x="667" y="449"/><use href="#g120" x="673" y="449"/><use href="#g120" x="679" y="449"/><use href="#g120" x="685" y="449"/></g>
<g fill="#000"><use href="#g106" x="705" y="449"/><use href="#g120" x="711" y="449"/><use href="#g120" x="717" y="449"/><use href="#g108" x="723" y="449"/><use href="#g120" x="729" y="449"/><use href="#g168" x="735" y="449"/><use href="#g100" x="741" y="449"/><use href="#g107" x="747" y="449"/></g>
<g fill="#000"><use href="#g106" x="761" y="449"/><use href="#g120" x="767" y="449"/><use href="#g120" x="773" y="449"/><use href="#g108" x="779" y="449"/><use href="#g136" x="785" y="449"/><use href="#g120" x="791" y="449"/><use href="#g168" x="797" y="449"/><use href="#g136" x="803" y="449"/><use href="#g100" x="809" y="449"/><use href="#g107" x="815" y="449"/></g>
<g fill="#000"><use href="#g106" x="829" y="449"/><use href="#g120" x="835" y="449"/><use href="#g120" x="841" y="449"/><use href="#g137" x="847" y="449"/><use href="#g136" x="853" y="449"/><use href="#g120" x="859" y="449"/><use href="#g168" x="865" y="449"/><use href="#g136" x="871" y="449"/><use href="#g120" x="877" y="449"/><use href="#g168" x="883" y="449"/></g>
<g fill="#000"><use href="#g194" x="897" y="450"/></g>
<g fill="#000"><use href="#g195" x="927" y="450"/><use href="#g43" x="939" y="450"/></g>
<g fill="#000"><use href="#g191" x="984" y="449"/><use href="#g120" x="990" y="449"/><use href="#g120" x="996" y="449"/><use href="#g120" x="1002" y="449"/></g>
<rect x="298" y="455" width="11" height="18" fill="#E6E6D5"/>
<rect x="298" y="455" width="1" height="19" fill="#FFFFFF"/>
<rect x="299" y="473" width="10" height="1" fill="#000000"/>
<rect x="310" y="473" width="703" height="1" fill="#C0C0C0"/>
<rect x="309" y="455" width="1" height="19" fill="#C0C0C0"/>
<rect x="337" y="455" width="1" height="19" fill="#C0C0C0"/>
<rect x="400" y="455" width="1" height="19" fill="#C0C0C0"/>
<rect x="477" y="455" width="1" height="19" fill="#C0C0C0"/>
<rect x="533" y="455" width="1" height="19" fill="#C0C0C0"/>
<rect x="589" y="455" width="1" height="19" fill="#C0C0C0"/>
<rect x="645" y="455" width="1" height="19" fill="#C0C0C0"/>
<rect x="701" y="455" width="1" height="19" fill="#C0C0C0"/>
<rect x="757" y="455" width="1" height="19" fill="#C0C0C0"/>
<rect x="758" y="455" width="1" height="19" fill="#C0C0C0"/>
<rect x="825" y="455" width="1" height="19" fill="#C0C0C0"/>
<rect x="893" y="455" width="1" height="19" fill="#C0C0C0"/>
<rect x="894" y="455" width="1" height="19" fill="#C0C0C0"/>
<rect x="923" y="455" width="1" height="19" fill="#C0C0C0"/>
<rect x="924" y="455" width="1" height="19" fill="#C0C0C0"/>
<rect x="980" y="455" width="1" height="19" fill="#C0C0C0"/>
<rect x="981" y="455" width="1" height="19" fill="#C0C0C0"/>
<g fill="#000"><use href="#g106" x="313" y="468"/></g>
<g fill="#000"><use href="#g120" x="341" y="468"/><use href="#g100" x="347" y="468"/><use href="#g191" x="353" y="468"/><use href="#g120" x="359" y="468"/><use href="#g100" x="365" y="468"/><use href="#g191" x="371" y="468"/><use href="#g120" x="377" y="468"/><use href="#g120" x="383" y="468"/><use href="#g137" x="389" y="468"/></g>
<g fill="#000"><use href="#g182" x="404" y="469"/><use href="#g196" x="416" y="469"/></g>
<g fill="#000"><use href="#g106" x="537" y="468"/><use href="#g101" x="543" y="468"/><use href="#g191" x="549" y="468"/><use href="#g120" x="555" y="468"/><use href="#g120" x="561" y="468"/><use href="#g120" x="567" y="468"/></g>
<g fill="#000"><use href="#g191" x="593" y="468"/><use href="#g120" x="599" y="468"/><use href="#g120" x="605" y="468"/><use href="#g120" x="611" y="468"/></g>
<g fill="#000"><use href="#g106" x="649" y="468"/><use href="#g101" x="655" y="468"/><use href="#g191" x="661" y="468"/><use href="#g120" x="667" y="468"/><use href="#g120" x="673" y="468"/><use href="#g120" x="679" y="468"/></g>
<g fill="#000"><use href="#g106" x="705" y="468"/><use href="#g120" x="711" y="468"/><use href="#g120" x="717" y="468"/><use href="#g108" x="723" y="468"/><use href="#g120" x="729" y="468"/><use href="#g107" x="735" y="468"/><use href="#g100" x="741" y="468"/><use href="#g115" x="747" y="468"/></g>
<g fill="#000"><use href="#g106" x="761" y="468"/><use href="#g120" x="767" y="468"/><use href="#g120" x="773" y="468"/><use href="#g108" x="779" y="468"/><use href="#g136" x="785" y="468"/><use href="#g120" x="791" y="468"/><use href="#g107" x="797" y="468"/><use href="#g136" x="803" y="468"/><use href="#g100" x="809" y="468"/><use href="#g115" x="815" y="468"/></g>
<g fill="#000"><use href="#g106" x="829" y="468"/><use href="#g120" x="835" y="468"/><use href="#g120" x="841" y="468"/><use href="#g108" x="847" y="468"/><use href="#g136" x="853" y="468"/><use href="#g120" x="859" y="468"/><use href="#g137" x="865" y="468"/><use href="#g136" x="871" y="468"/><use href="#g120" x="877" y="468"/><use href="#g137" x="883" y="468"/></g>
<g fill="#000"><use href="#g141" x="897" y="468"/><use href="#g193" x="903" y="468"/></g>
<g fill="#000"><use href="#g100" x="984" y="468"/><use href="#g101" x="990" y="468"/><use href="#g191" x="996" y="468"/><use href="#g120" x="1002" y="468"/><use href="#g120" x="1008" y="468"/><use href="#g120" x="1014" y="468"/></g>
<rect x="298" y="474" width="11" height="18" fill="#E6E6D5"/>
<rect x="298" y="474" width="1" height="19" fill="#FFFFFF"/>
<rect x="299" y="492" width="10" height="1" fill="#000000"/>
<rect x="310" y="492" width="703" height="1" fill="#C0C0C0"/>
<rect x="309" y="474" width="1" height="19" fill="#C0C0C0"/>
<rect x="337" y="474" width="1" height="19" fill="#C0C0C0"/>
<rect x="400" y="474" width="1" height="19" fill="#C0C0C0"/>
<rect x="477" y="474" width="1" height="19" fill="#C0C0C0"/>
<rect x="533" y="474" width="1" height="19" fill="#C0C0C0"/>
<rect x="589" y="474" width="1" height="19" fill="#C0C0C0"/>
<rect x="645" y="474" width="1" height="19" fill="#C0C0C0"/>
<rect x="701" y="474" width="1" height="19" fill="#C0C0C0"/>
<rect x="757" y="474" width="1" height="19" fill="#C0C0C0"/>
<rect x="758" y="474" width="1" height="19" fill="#C0C0C0"/>
<rect x="825" y="474" width="1" height="19" fill="#C0C0C0"/>
<rect x="893" y="474" width="1" height="19" fill="#C0C0C0"/>
<rect x="894" y="474" width="1" height="19" fill="#C0C0C0"/>
<rect x="923" y="474" width="1" height="19" fill="#C0C0C0"/>
<rect x="924" y="474" width="1" height="19" fill="#C0C0C0"/>
<rect x="980" y="474" width="1" height="19" fill="#C0C0C0"/>
<rect x="981" y="474" width="1" height="19" fill="#C0C0C0"/>
<g fill="#000"><use href="#g107" x="313" y="487"/></g>
<g fill="#000"><use href="#g120" x="341" y="487"/><use href="#g100" x="347" y="487"/><use href="#g191" x="353" y="487"/><use href="#g120" x="359" y="487"/><use href="#g100" x="365" y="487"/><use href="#g191" x="371" y="487"/><use href="#g120" x="377" y="487"/><use href="#g107" x="383" y="487"/><use href="#g169" x="389" y="487"/></g>
<g fill="#000"><use href="#g197" x="404" y="488"/><use href="#g198" x="416" y="488"/><use href="#g199" x="428" y="488"/><use href="#g200" x="440" y="488"/></g>
<g fill="#000"><use href="#g168" x="537" y="487"/><use href="#g106" x="543" y="487"/><use href="#g191" x="549" y="487"/><use href="#g120" x="555" y="487"/><use href="#g120" x="561" y="487"/><use href="#g120" x="567" y="487"/></g>
<g fill="#000"><use href="#g191" x="593" y="487"/><use href="#g120" x="599" y="487"/><use href="#g120" x="605" y="487"/><use href="#g120" x="611" y="487"/></g>
<g fill="#000"><use href="#g168" x="649" y="487"/><use href="#g106" x="655" y="487"/><use href="#g191" x="661" y="487"/><use href="#g120" x="667" y="487"/><use href="#g120" x="673" y="487"/><use href="#g120" x="679" y="487"/></g>
<g fill="#000"><use href="#g106" x="705" y="487"/><use href="#g120" x="711" y="487"/><use href="#g120" x="717" y="487"/><use href="#g108" x="723" y="487"/><use href="#g120" x="729" y="487"/><use href="#g168" x="735" y="487"/><use href="#g100" x="741" y="487"/><use href="#g100" x="747" y="487"/></g>
<g fill="#000"><use href="#g106" x="761" y="487"/><use href="#g120" x="767" y="487"/><use href="#g120" x="773" y="487"/><use href="#g108" x="779" y="487"/><use href="#g136" x="785" y="487"/><use href="#g120" x="791" y="487"/><use href="#g168" x="797" y="487"/><use href="#g136" x="803" y="487"/><use href="#g100" x="809" y="487"/><use href="#g100" x="815" y="487"/></g>
<g fill="#000"><use href="#g106" x="829" y="487"/><use href="#g120" x="835" y="487"/><use href="#g120" x="841" y="487"/><use href="#g137" x="847" y="487"/><use href="#g136" x="853" y="487"/><use href="#g120" x="859" y="487"/><use href="#g168" x="865" y="487"/><use href="#g136" x="871" y="487"/><use href="#g120" x="877" y="487"/><use href="#g101" x="883" y="487"/></g>
<g fill="#000"><use href="#g201" x="897" y="488"/></g>
<g fill="#000"><use href="#g106" x="984" y="487"/><use href="#g191" x="990" y="487"/><use href="#g120" x="996" y="487"/><use href="#g120" x="1002" y="487"/><use href="#g120" x="1008" y="487"/></g>
<rect x="298" y="493" width="11" height="18" fill="#E6E6D5"/>
<rect x="298" y="493" width="1" height="19" fill="#FFFFFF"/>
<rect x="299" y="511" width="10" height="1" fill="#000000"/>
<rect x="310" y="511" width="703" height="1" fill="#C0C0C0"/>
<rect x="309" y="493" width="1" height="19" fill="#C0C0C0"/>
<rect x="337" y="493" width="1" height="19" fill="#C0C0C0"/>
<rect x="400" y="493" width="1" height="19" fill="#C0C0C0"/>
<rect x="477" y="493" width="1" height="19" fill="#C0C0C0"/>
<rect x="533" y="493" width="1" height="19" fill="#C0C0C0"/>
<rect x="589" y="493" width="1" height="19" fill="#C0C0C0"/>
<rect x="645" y="493" width="1" height="19" fill="#C0C0C0"/>
<rect x="701" y="493" width="1" height="19" fill="#C0C0C0"/>
<rect x="757" y="493" width="1" height="19" fill="#C0C0C0"/>
<rect x="758" y="493" width="1" height="19" fill="#C0C0C0"/>
<rect x="825" y="493" width="1" height="19" fill="#C0C0C0"/>
<rect x="893" y="493" width="1" height="19" fill="#C0C0C0"/>
<rect x="894" y="493" width="1" height="19" fill="#C0C0C0"/>
<rect x="923" y="493" width="1" height="19" fill="#C0C0C0"/>
<rect x="924" y="493" width="1" height="19" fill="#C0C0C0"/>
<rect x="980" y="493" width="1" height="19" fill="#C0C0C0"/>
<rect x="981" y="493" width="1" height="19" fill="#C0C0C0"/>
<g fill="#000"><use href="#g115" x="313" y="506"/></g>
<g fill="#000"><use href="#g120" x="341" y="506"/><use href="#g100" x="347" y="506"/><use href="#g191" x="353" y="506"/><use href="#g120" x="359" y="506"/><use href="#g100" x="365" y="506"/><use href="#g191" x="371" y="506"/><use href="#g120" x="377" y="506"/><use href="#g115" x="383" y="506"/><use href="#g106" x="389" y="506"/></g>
<g fill="#000"><use href="#g202" x="404" y="507"/><use href="#g203" x="416" y="507"/><use href="#g204" x="428" y="507"/></g>
<g fill="#000"><use href="#g100" x="481" y="506"/><use href="#g191" x="487" y="506"/><use href="#g108" x="493" y="506"/><use href="#g205" x="499" y="506"/></g>
<g fill="#000"><use href="#g169" x="537" y="506"/><use href="#g191" x="543" y="506"/><use href="#g120" x="549" y="506"/><use href="#g120" x="555" y="506"/><use href="#g120" x="561" y="506"/></g>
<g fill="#000"><use href="#g191" x="593" y="506"/><use href="#g120" x="599" y="506"/><use href="#g120" x="605" y="506"/><use href="#g120" x="611" y="506"/></g>
<g fill="#000"><use href="#g169" x="649" y="506"/><use href="#g191" x="655" y="506"/><use href="#g120" x="661" y="506"/><use href="#g120" x="667" y="506"/><use href="#g120" x="673" y="506"/></g>
<g fill="#000"><use href="#g106" x="705" y="506"/><use href="#g120" x="711" y="506"/><use href="#g120" x="717" y="506"/><use href="#g108" x="723" y="506"/><use href="#g120" x="729" y="506"/><use href="#g169" x="735" y="506"/><use href="#g120" x="741" y="506"/><use href="#g106" x="747" y="506"/></g>
<g fill="#000"><use href="#g106" x="761" y="506"/><use href="#g120" x="767" y="506"/><use href="#g120" x="773" y="506"/><use href="#g108" x="779" y="506"/><use href="#g136" x="785" y="506"/><use href="#g120" x="791" y="506"/><use href="#g169" x="797" y="506"/><use href="#g136" x="803" y="506"/><use href="#g120" x="809" y="506"/><use href="#g106" x="815" y="506"/></g>
<g fill="#000"><use href="#g106" x="829" y="506"/><use href="#g120" x="835" y="506"/><use href="#g120" x="841" y="506"/><use href="#g137" x="847" y="506"/><use href="#g136" x="853" y="506"/><use href="#g120" x="859" y="506"/><use href="#g101" x="865" y="506"/><use href="#g136" x="871" y="506"/><use href="#g106" x="877" y="506"/><use href="#g168" x="883" y="506"/></g>
<g fill="#000"><use href="#g206" x="897" y="507"/></g>
<g fill="#000"><use href="#g106" x="984" y="506"/><use href="#g191" x="990" y="506"/><use href="#g120" x="996" y="506"/><use href="#g120" x="1002" y="506"/><use href="#g120" x="1008" y="506"/></g>
<rect x="298" y="512" width="11" height="18" fill="#E6E6D5"/>
<rect x="298" y="512" width="1" height="19" fill="#FFFFFF"/>
<rect x="299" y="530" width="10" height="1" fill="#000000"/>
<rect x="310" y="530" width="703" height="1" fill="#C0C0C0"/>
<rect x="309" y="512" width="1" height="19" fill="#C0C0C0"/>
<rect x="337" y="512" width="1" height="19" fill="#C0C0C0"/>
<rect x="400" y="512" width="1" height="19" fill="#C0C0C0"/>
<rect x="477" y="512" width="1" height="19" fill="#C0C0C0"/>
<rect x="533" y="512" width="1" height="19" fill="#C0C0C0"/>
<rect x="589" y="512" width="1" height="19" fill="#C0C0C0"/>
<rect x="645" y="512" width="1" height="19" fill="#C0C0C0"/>
<rect x="701" y="512" width="1" height="19" fill="#C0C0C0"/>
<rect x="757" y="512" width="1" height="19" fill="#C0C0C0"/>
<rect x="758" y="512" width="1" height="19" fill="#C0C0C0"/>
<rect x="825" y="512" width="1" height="19" fill="#C0C0C0"/>
<rect x="893" y="512" width="1" height="19" fill="#C0C0C0"/>
<rect x="894" y="512" width="1" height="19" fill="#C0C0C0"/>
<rect x="923" y="512" width="1" height="19" fill="#C0C0C0"/>
<rect x="924" y="512" width="1" height="19" fill="#C0C0C0"/>
<rect x="980" y="512" width="1" height="19" fill="#C0C0C0"/>
<rect x="981" y="512" width="1" height="19" fill="#C0C0C0"/>
<g fill="#000"><use href="#g101" x="313" y="525"/></g>
<g fill="#000"><use href="#g120" x="341" y="525"/><use href="#g100" x="347" y="525"/><use href="#g191" x="353" y="525"/><use href="#g120" x="359" y="525"/><use href="#g100" x="365" y="525"/><use href="#g191" x="371" y="525"/><use href="#g120" x="377" y="525"/><use href="#g115" x="383" y="525"/><use href="#g137" x="389" y="525"/></g>
<g fill="#000"><use href="#g207" x="404" y="526"/><use href="#g208" x="416" y="526"/><use href="#g209" x="428" y="526"/><use href="#g210" x="440" y="526"/><use href="#g211" x="452" y="526"/></g>
<g fill="#000"><use href="#g107" x="481" y="525"/><use href="#g100" x="487" y="525"/><use href="#g115" x="493" y="525"/><use href="#g168" x="499" y="525"/><use href="#g193" x="505" y="525"/></g>
<g fill="#000"><use href="#g169" x="537" y="525"/><use href="#g191" x="543" y="525"/><use href="#g120" x="549" y="525"/><use href="#g120" x="555" y="525"/><use href="#g120" x="561" y="525"/></g>
<g fill="#000"><use href="#g191" x="593" y="525"/><use href="#g120" x="599" y="525"/><use href="#g120" x="605" y="525"/><use href="#g120" x="611" y="525"/></g>
<g fill="#000"><use href="#g169" x="649" y="525"/><use href="#g191" x="655" y="525"/><use href="#g120" x="661" y="525"/><use href="#g120" x="667" y="525"/><use href="#g120" x="673" y="525"/></g>
<g fill="#000"><use href="#g106" x="705" y="525"/><use href="#g120" x="711" y="525"/><use href="#g120" x="717" y="525"/><use href="#g108" x="723" y="525"/><use href="#g100" x="729" y="525"/><use href="#g120" x="735" y="525"/><use href="#g120" x="741" y="525"/><use href="#g168" x="747" y="525"/></g>
<g fill="#000"><use href="#g106" x="761" y="525"/><use href="#g120" x="767" y="525"/><use href="#g120" x="773" y="525"/><use href="#g108" x="779" y="525"/><use href="#g136" x="785" y="525"/><use href="#g100" x="791" y="525"/><use href="#g120" x="797" y="525"/><use href="#g136" x="803" y="525"/><use href="#g120" x="809" y="525"/><use href="#g168" x="815" y="525"/></g>
<g fill="#000"><use href="#g106" x="829" y="525"/><use href="#g120" x="835" y="525"/><use href="#g120" x="841" y="525"/><use href="#g137" x="847" y="525"/><use href="#g136" x="853" y="525"/><use href="#g100" x="859" y="525"/><use href="#g120" x="865" y="525"/><use href="#g136" x="871" y="525"/><use href="#g120" x="877" y="525"/><use href="#g100" x="883" y="525"/></g>
<g fill="#000"><use href="#g206" x="897" y="526"/></g>
<g fill="#000"><use href="#g106" x="984" y="525"/><use href="#g191" x="990" y="525"/><use href="#g120" x="996" y="525"/><use href="#g120" x="1002" y="525"/><use href="#g120" x="1008" y="525"/></g>
<rect x="298" y="531" width="11" height="18" fill="#E6E6D5"/>
<rect x="298" y="531" width="1" height="19" fill="#FFFFFF"/>
<rect x="299" y="549" width="10" height="1" fill="#000000"/>
<rect x="310" y="549" width="703" height="1" fill="#C0C0C0"/>
<rect x="309" y="531" width="1" height="19" fill="#C0C0C0"/>
<rect x="337" y="531" width="1" height="19" fill="#C0C0C0"/>
<rect x="400" y="531" width="1" height="19" fill="#C0C0C0"/>
<rect x="477" y="531" width="1" height="19" fill="#C0C0C0"/>
<rect x="533" y="531" width="1" height="19" fill="#C0C0C0"/>
<rect x="589" y="531" width="1" height="19" fill="#C0C0C0"/>
<rect x="645" y="531" width="1" height="19" fill="#C0C0C0"/>
<rect x="701" y="531" width="1" height="19" fill="#C0C0C0"/>
<rect x="757" y="531" width="1" height="19" fill="#C0C0C0"/>
<rect x="758" y="531" width="1" height="19" fill="#C0C0C0"/>
<rect x="825" y="531" width="1" height="19" fill="#C0C0C0"/>
<rect x="893" y="531" width="1" height="19" fill="#C0C0C0"/>
<rect x="894" y="531" width="1" height="19" fill="#C0C0C0"/>
<rect x="923" y="531" width="1" height="19" fill="#C0C0C0"/>
<rect x="924" y="531" width="1" height="19" fill="#C0C0C0"/>
<rect x="980" y="531" width="1" height="19" fill="#C0C0C0"/>
<rect x="981" y="531" width="1" height="19" fill="#C0C0C0"/>
<g fill="#000"><use href="#g169" x="313" y="544"/></g>
<g fill="#000"><use href="#g120" x="341" y="544"/><use href="#g100" x="347" y="544"/><use href="#g191" x="353" y="544"/><use href="#g120" x="359" y="544"/><use href="#g100" x="365" y="544"/><use href="#g191" x="371" y="544"/><use href="#g120" x="377" y="544"/><use href="#g168" x="383" y="544"/><use href="#g106" x="389" y="544"/></g>
<g fill="#000"><use href="#g212" x="404" y="545"/><use href="#g213" x="416" y="545"/><use href="#g214" x="428" y="545"/></g>
<g fill="#000"><use href="#g169" x="481" y="544"/><use href="#g120" x="487" y="544"/><use href="#g120" x="493" y="544"/><use href="#g215" x="499" y="544"/><use href="#g216" x="505" y="544"/></g>
<g fill="#000"><use href="#g106" x="537" y="544"/><use href="#g120" x="543" y="544"/><use href="#g191" x="549" y="544"/><use href="#g120" x="555" y="544"/><use href="#g120" x="561" y="544"/><use href="#g120" x="567" y="544"/></g>
<g fill="#000"><use href="#g191" x="593" y="544"/><use href="#g120" x="599" y="544"/><use href="#g120" x="605" y="544"/><use href="#g120" x="611" y="544"/></g>
<g fill="#000"><use href="#g106" x="649" y="544"/><use href="#g120" x="655" y="544"/><use href="#g191" x="661" y="544"/><use href="#g120" x="667" y="544"/><use href="#g120" x="673" y="544"/><use href="#g120" x="679" y="544"/></g>
<g fill="#000"><use href="#g106" x="705" y="544"/><use href="#g120" x="711" y="544"/><use href="#g120" x="717" y="544"/><use href="#g108" x="723" y="544"/><use href="#g120" x="729" y="544"/><use href="#g137" x="735" y="544"/><use href="#g100" x="741" y="544"/><use href="#g120" x="747" y="544"/></g>
<g fill="#000"><use href="#g106" x="761" y="544"/><use href="#g120" x="767" y="544"/><use href="#g120" x="773" y="544"/><use href="#g108" x="779" y="544"/><use href="#g136" x="785" y="544"/><use href="#g120" x="791" y="544"/><use href="#g137" x="797" y="544"/><use href="#g136" x="803" y="544"/><use href="#g100" x="809" y="544"/><use href="#g120" x="815" y="544"/></g>
<g fill="#000"><use href="#g106" x="829" y="544"/><use href="#g120" x="835" y="544"/><use href="#g120" x="841" y="544"/><use href="#g137" x="847" y="544"/><use href="#g136" x="853" y="544"/><use href="#g120" x="859" y="544"/><use href="#g137" x="865" y="544"/><use href="#g136" x="871" y="544"/><use href="#g120" x="877" y="544"/><use href="#g115" x="883" y="544"/></g>
<g fill="#000"><use href="#g201" x="897" y="545"/></g>
<g fill="#000"><use href="#g100" x="984" y="544"/><use href="#g101" x="990" y="544"/><use href="#g191" x="996" y="544"/><use href="#g120" x="1002" y="544"/><use href="#g120" x="1008" y="544"/><use href="#g120" x="1014" y="544"/></g>
<rect x="298" y="550" width="11" height="18" fill="#E6E6D5"/>
<rect x="298" y="550" width="1" height="19" fill="#FFFFFF"/>
<rect x="299" y="568" width="10" height="1" fill="#000000"/>
<rect x="310" y="568" width="703" height="1" fill="#C0C0C0"/>
<rect x="309" y="550" width="1" height="19" fill="#C0C0C0"/>
<rect x="337" y="550" width="1" height="19" fill="#C0C0C0"/>
<rect x="400" y="550" width="1" height="19" fill="#C0C0C0"/>
<rect x="477" y="550" width="1" height="19" fill="#C0C0C0"/>
<rect x="533" y="550" width="1" height="19" fill="#C0C0C0"/>
<rect x="589" y="550" width="1" height="19" fill="#C0C0C0"/>
<rect x="645" y="550" width="1" height="19" fill="#C0C0C0"/>
<rect x="701" y="550" width="1" height="19" fill="#C0C0C0"/>
<rect x="757" y="550" width="1" height="19" fill="#C0C0C0"/>
<rect x="758" y="550" width="1" height="19" fill="#C0C0C0"/>
<rect x="825" y="550" width="1" height="19" fill="#C0C0C0"/>
<rect x="893" y="550" width="1" height="19" fill="#C0C0C0"/>
<rect x="894" y="550" width="1" height="19" fill="#C0C0C0"/>
<rect x="923" y="550" width="1" height="19" fill="#C0C0C0"/>
<rect x="924" y="550" width="1" height="19" fill="#C0C0C0"/>
<rect x="980" y="550" width="1" height="19" fill="#C0C0C0"/>
<rect x="981" y="550" width="1" height="19" fill="#C0C0C0"/>
<g fill="#000"><use href="#g168" x="313" y="563"/></g>
<g fill="#000"><use href="#g120" x="341" y="563"/><use href="#g100" x="347" y="563"/><use href="#g191" x="353" y="563"/><use href="#g120" x="359" y="563"/><use href="#g100" x="365" y="563"/><use href="#g191" x="371" y="563"/><use href="#g100" x="377" y="563"/><use href="#g106" x="383" y="563"/><use href="#g168" x="389" y="563"/></g>
<g fill="#000"><use href="#g217" x="404" y="564"/><use href="#g218" x="416" y="564"/><use href="#g219" x="428" y="564"/></g>
<g fill="#000"><use href="#g100" x="537" y="563"/><use href="#g120" x="543" y="563"/><use href="#g191" x="549" y="563"/><use href="#g120" x="555" y="563"/><use href="#g120" x="561" y="563"/><use href="#g120" x="567" y="563"/></g>
<g fill="#000"><use href="#g191" x="593" y="563"/><use href="#g120" x="599" y="563"/><use href="#g120" x="605" y="563"/><use href="#g120" x="611" y="563"/></g>
<g fill="#000"><use href="#g100" x="649" y="563"/><use href="#g120" x="655" y="563"/><use href="#g191" x="661" y="563"/><use href="#g120" x="667" y="563"/><use href="#g120" x="673" y="563"/><use href="#g120" x="679" y="563"/></g>
<g fill="#000"><use href="#g106" x="705" y="563"/><use href="#g120" x="711" y="563"/><use href="#g120" x="717" y="563"/><use href="#g108" x="723" y="563"/><use href="#g120" x="729" y="563"/><use href="#g137" x="735" y="563"/><use href="#g106" x="741" y="563"/><use href="#g100" x="747" y="563"/></g>
<g fill="#000"><use href="#g106" x="761" y="563"/><use href="#g120" x="767" y="563"/><use href="#g120" x="773" y="563"/><use href="#g108" x="779" y="563"/><use href="#g136" x="785" y="563"/><use href="#g120" x="791" y="563"/><use href="#g137" x="797" y="563"/><use href="#g136" x="803" y="563"/><use href="#g106" x="809" y="563"/><use href="#g100" x="815" y="563"/></g>
<g fill="#000"><use href="#g106" x="829" y="563"/><use href="#g120" x="835" y="563"/><use href="#g120" x="841" y="563"/><use href="#g137" x="847" y="563"/><use href="#g136" x="853" y="563"/><use href="#g120" x="859" y="563"/><use href="#g137" x="865" y="563"/><use href="#g136" x="871" y="563"/><use href="#g100" x="877" y="563"/><use href="#g101" x="883" y="563"/></g>
<g fill="#000"><use href="#g206" x="897" y="564"/></g>
<g fill="#000"><use href="#g106" x="984" y="563"/><use href="#g100" x="990" y="563"/><use href="#g191" x="996" y="563"/><use href="#g120" x="1002" y="563"/><use href="#g120" x="1008" y="563"/><use href="#g120" x="1014" y="563"/></g>
<rect x="298" y="569" width="11" height="18" fill="#E6E6D5"/>
<rect x="298" y="569" width="1" height="19" fill="#FFFFFF"/>
<rect x="299" y="587" width="10" height="1" fill="#000000"/>
<rect x="310" y="587" width="703" height="1" fill="#C0C0C0"/>
<rect x="309" y="569" width="1" height="19" fill="#C0C0C0"/>
<rect x="337" y="569" width="1" height="19" fill="#C0C0C0"/>
<rect x="400" y="569" width="1" height="19" fill="#C0C0C0"/>
<rect x="477" y="569" width="1" height="19" fill="#C0C0C0"/>
<rect x="533" y="569" width="1" height="19" fill="#C0C0C0"/>
<rect x="589" y="569" width="1" height="19" fill="#C0C0C0"/>
<rect x="645" y="569" width="1" height="19" fill="#C0C0C0"/>
<rect x="701" y="569" width="1" height="19" fill="#C0C0C0"/>
<rect x="757" y="569" width="1" height="19" fill="#C0C0C0"/>
<rect x="758" y="569" width="1" height="19" fill="#C0C0C0"/>
<rect x="825" y="569" width="1" height="19" fill="#C0C0C0"/>
<rect x="893" y="569" width="1" height="19" fill="#C0C0C0"/>
<rect x="894" y="569" width="1" height="19" fill="#C0C0C0"/>
<rect x="923" y="569" width="1" height="19" fill="#C0C0C0"/>
<rect x="924" y="569" width="1" height="19" fill="#C0C0C0"/>
<rect x="980" y="569" width="1" height="19" fill="#C0C0C0"/>
<rect x="981" y="569" width="1" height="19" fill="#C0C0C0"/>
<g fill="#000"><use href="#g108" x="313" y="582"/></g>
<g fill="#000"><use href="#g120" x="341" y="582"/><use href="#g100" x="347" y="582"/><use href="#g191" x="353" y="582"/><use href="#g120" x="359" y="582"/><use href="#g107" x="365" y="582"/><use href="#g191" x="371" y="582"/><use href="#g120" x="377" y="582"/><use href="#g137" x="383" y="582"/><use href="#g169" x="389" y="582"/></g>
<g fill="#000"><use href="#g220" x="404" y="583"/><use href="#g221" x="416" y="583"/><use href="#g222" x="428" y="583"/></g>
<g fill="#000"><use href="#g100" x="481" y="582"/><use href="#g107" x="487" y="582"/><use href="#g101" x="493" y="582"/><use href="#g193" x="499" y="582"/></g>
<g fill="#000"><use href="#g106" x="537" y="582"/><use href="#g115" x="543" y="582"/><use href="#g191" x="549" y="582"/><use href="#g120" x="555" y="582"/><use href="#g120" x="561" y="582"/><use href="#g120" x="567" y="582"/></g>
<g fill="#000"><use href="#g191" x="593" y="582"/><use href="#g120" x="599" y="582"/><use href="#g120" x="605" y="582"/><use href="#g120" x="611" y="582"/></g>
<g fill="#000"><use href="#g106" x="649" y="582"/><use href="#g115" x="655" y="582"/><use href="#g191" x="661" y="582"/><use href="#g120" x="667" y="582"/><use href="#g120" x="673" y="582"/><use href="#g120" x="679" y="582"/></g>
<g fill="#000"><use href="#g106" x="705" y="582"/><use href="#g120" x="711" y="582"/><use href="#g120" x="717" y="582"/><use href="#g108" x="723" y="582"/><use href="#g120" x="729" y="582"/><use href="#g108" x="735" y="582"/><use href="#g107" x="741" y="582"/><use href="#g120" x="747" y="582"/></g>
<g fill="#000"><use href="#g106" x="761" y="582"/><use href="#g120" x="767" y="582"/><use href="#g120" x="773" y="582"/><use href="#g108" x="779" y="582"/><use href="#g136" x="785" y="582"/><use href="#g120" x="791" y="582"/><use href="#g108" x="797" y="582"/><use href="#g136" x="803" y="582"/><use href="#g107" x="809" y="582"/><use href="#g120" x="815" y="582"/></g>
<g fill="#000"><use href="#g106" x="829" y="582"/><use href="#g120" x="835" y="582"/><use href="#g100" x="841" y="582"/><use href="#g100" x="847" y="582"/><use href="#g136" x="853" y="582"/><use href="#g120" x="859" y="582"/><use href="#g108" x="865" y="582"/><use href="#g136" x="871" y="582"/><use href="#g100" x="877" y="582"/><use href="#g115" x="883" y="582"/></g>
<g fill="#000"><use href="#g223" x="897" y="583"/></g>
<g fill="#000"><use href="#g191" x="984" y="582"/><use href="#g120" x="990" y="582"/><use href="#g120" x="996" y="582"/><use href="#g120" x="1002" y="582"/></g>
<rect x="298" y="588" width="11" height="18" fill="#E6E6D5"/>
<rect x="298" y="588" width="1" height="19" fill="#FFFFFF"/>
<rect x="299" y="606" width="10" height="1" fill="#000000"/>
<rect x="310" y="606" width="703" height="1" fill="#C0C0C0"/>
<rect x="309" y="588" width="1" height="19" fill="#C0C0C0"/>
<rect x="337" y="588" width="1" height="19" fill="#C0C0C0"/>
<rect x="400" y="588" width="1" height="19" fill="#C0C0C0"/>
<rect x="477" y="588" width="1" height="19" fill="#C0C0C0"/>
<rect x="533" y="588" width="1" height="19" fill="#C0C0C0"/>
<rect x="589" y="588" width="1" height="19" fill="#C0C0C0"/>
<rect x="645" y="588" width="1" height="19" fill="#C0C0C0"/>
<rect x="701" y="588" width="1" height="19" fill="#C0C0C0"/>
<rect x="757" y="588" width="1" height="19" fill="#C0C0C0"/>
<rect x="758" y="588" width="1" height="19" fill="#C0C0C0"/>
<rect x="825" y="588" width="1" height="19" fill="#C0C0C0"/>
<rect x="893" y="588" width="1" height="19" fill="#C0C0C0"/>
<rect x="894" y="588" width="1" height="19" fill="#C0C0C0"/>
<rect x="923" y="588" width="1" height="19" fill="#C0C0C0"/>
<rect x="924" y="588" width="1" height="19" fill="#C0C0C0"/>
<rect x="980" y="588" width="1" height="19" fill="#C0C0C0"/>
<rect x="981" y="588" width="1" height="19" fill="#C0C0C0"/>
<g fill="#000"><use href="#g137" x="313" y="601"/></g>
<g fill="#000"><use href="#g120" x="341" y="601"/><use href="#g100" x="347" y="601"/><use href="#g191" x="353" y="601"/><use href="#g120" x="359" y="601"/><use href="#g101" x="365" y="601"/><use href="#g191" x="371" y="601"/><use href="#g120" x="377" y="601"/><use href="#g101" x="383" y="601"/><use href="#g115" x="389" y="601"/></g>
<g fill="#000"><use href="#g224" x="404" y="602"/><use href="#g225" x="416" y="602"/><use href="#g196" x="428" y="602"/></g>
<g fill="#000"><use href="#g169" x="481" y="601"/><use href="#g115" x="487" y="601"/><use href="#g120" x="493" y="601"/><use href="#g193" x="499" y="601"/></g>
<g fill="#000"><use href="#g100" x="537" y="601"/><use href="#g106" x="543" y="601"/><use href="#g191" x="549" y="601"/><use href="#g120" x="555" y="601"/><use href="#g120" x="561" y="601"/><use href="#g120" x="567" y="601"/></g>
<g fill="#000"><use href="#g191" x="593" y="601"/><use href="#g120" x="599" y="601"/><use href="#g120" x="605" y="601"/><use href="#g120" x="611" y="601"/></g>
<g fill="#000"><use href="#g100" x="649" y="601"/><use href="#g106" x="655" y="601"/><use href="#g191" x="661" y="601"/><use href="#g120" x="667" y="601"/><use href="#g120" x="673" y="601"/><use href="#g120" x="679" y="601"/></g>
<g fill="#000"><use href="#g106" x="705" y="601"/><use href="#g120" x="711" y="601"/><use href="#g120" x="717" y="601"/><use href="#g108" x="723" y="601"/><use href="#g120" x="729" y="601"/><use href="#g137" x="735" y="601"/><use href="#g120" x="741" y="601"/><use href="#g100" x="747" y="601"/></g>
<g fill="#000"><use href="#g106" x="761" y="601"/><use href="#g120" x="767" y="601"/><use href="#g120" x="773" y="601"/><use href="#g108" x="779" y="601"/><use href="#g136" x="785" y="601"/><use href="#g120" x="791" y="601"/><use href="#g137" x="797" y="601"/><use href="#g136" x="803" y="601"/><use href="#g120" x="809" y="601"/><use href="#g100" x="815" y="601"/></g>
<g fill="#000"><use href="#g106" x="829" y="601"/><use href="#g120" x="835" y="601"/><use href="#g100" x="841" y="601"/><use href="#g120" x="847" y="601"/><use href="#g136" x="853" y="601"/><use href="#g120" x="859" y="601"/><use href="#g106" x="865" y="601"/><use href="#g136" x="871" y="601"/><use href="#g106" x="877" y="601"/><use href="#g106" x="883" y="601"/></g>
<g fill="#000"><use href="#g206" x="897" y="602"/></g>
<g fill="#000"><use href="#g191" x="984" y="601"/><use href="#g120" x="990" y="601"/><use href="#g120" x="996" y="601"/><use href="#g120" x="1002" y="601"/></g>
<rect x="298" y="607" width="11" height="18" fill="#E6E6D5"/>
<rect x="298" y="607" width="1" height="19" fill="#FFFFFF"/>
<rect x="299" y="625" width="10" height="1" fill="#000000"/>
<rect x="310" y="625" width="703" height="1" fill="#C0C0C0"/>
<rect x="309" y="607" width="1" height="19" fill="#C0C0C0"/>
<rect x="337" y="607" width="1" height="19" fill="#C0C0C0"/>
<rect x="400" y="607" width="1" height="19" fill="#C0C0C0"/>
<rect x="477" y="607" width="1" height="19" fill="#C0C0C0"/>
<rect x="533" y="607" width="1" height="19" fill="#C0C0C0"/>
<rect x="589" y="607" width="1" height="19" fill="#C0C0C0"/>
<rect x="645" y="607" width="1" height="19" fill="#C0C0C0"/>
<rect x="701" y="607" width="1" height="19" fill="#C0C0C0"/>
<rect x="757" y="607" width="1" height="19" fill="#C0C0C0"/>
<rect x="758" y="607" width="1" height="19" fill="#C0C0C0"/>
<rect x="825" y="607" width="1" height="19" fill="#C0C0C0"/>
<rect x="893" y="607" width="1" height="19" fill="#C0C0C0"/>
<rect x="894" y="607" width="1" height="19" fill="#C0C0C0"/>
<rect x="923" y="607" width="1" height="19" fill="#C0C0C0"/>
<rect x="924" y="607" width="1" height="19" fill="#C0C0C0"/>
<rect x="980" y="607" width="1" height="19" fill="#C0C0C0"/>
<rect x="981" y="607" width="1" height="19" fill="#C0C0C0"/>
<g fill="#000"><use href="#g100" x="313" y="620"/><use href="#g120" x="319" y="620"/></g>
<g fill="#000"><use href="#g120" x="341" y="620"/><use href="#g100" x="347" y="620"/><use href="#g191" x="353" y="620"/><use href="#g120" x="359" y="620"/><use href="#g101" x="365" y="620"/><use href="#g191" x="371" y="620"/><use href="#g120" x="377" y="620"/><use href="#g101" x="383" y="620"/><use href="#g101" x="389" y="620"/></g>
<g fill="#000"><use href="#g226" x="404" y="621"/><use href="#g227" x="416" y="621"/><use href="#g154" x="428" y="621"/><use href="#g219" x="440" y="621"/></g>
<g fill="#000"><use href="#g108" x="537" y="620"/><use href="#g120" x="543" y="620"/><use href="#g191" x="549" y="620"/><use href="#g120" x="555" y="620"/><use href="#g120" x="561" y="620"/><use href="#g120" x="567" y="620"/></g>
<g fill="#000"><use href="#g191" x="593" y="620"/><use href="#g120" x="599" y="620"/><use href="#g120" x="605" y="620"/><use href="#g120" x="611" y="620"/></g>
<g fill="#000"><use href="#g108" x="649" y="620"/><use href="#g120" x="655" y="620"/><use href="#g191" x="661" y="620"/><use href="#g120" x="667" y="620"/><use href="#g120" x="673" y="620"/><use href="#g120" x="679" y="620"/></g>
<g fill="#000"><use href="#g106" x="705" y="620"/><use href="#g120" x="711" y="620"/><use href="#g120" x="717" y="620"/><use href="#g108" x="723" y="620"/><use href="#g120" x="729" y="620"/><use href="#g101" x="735" y="620"/><use href="#g120" x="741" y="620"/><use href="#g100" x="747" y="620"/></g>
<g fill="#000"><use href="#g106" x="761" y="620"/><use href="#g120" x="767" y="620"/><use href="#g120" x="773" y="620"/><use href="#g108" x="779" y="620"/><use href="#g136" x="785" y="620"/><use href="#g120" x="791" y="620"/><use href="#g101" x="797" y="620"/><use href="#g136" x="803" y="620"/><use href="#g120" x="809" y="620"/><use href="#g100" x="815" y="620"/></g>
<g fill="#000"><use href="#g106" x="829" y="620"/><use href="#g120" x="835" y="620"/><use href="#g120" x="841" y="620"/><use href="#g137" x="847" y="620"/><use href="#g136" x="853" y="620"/><use href="#g120" x="859" y="620"/><use href="#g115" x="865" y="620"/><use href="#g136" x="871" y="620"/><use href="#g106" x="877" y="620"/><use href="#g101" x="883" y="620"/></g>
<g fill="#000"><use href="#g228" x="897" y="621"/></g>
<g fill="#000"><use href="#g106" x="984" y="620"/><use href="#g120" x="990" y="620"/><use href="#g100" x="996" y="620"/><use href="#g191" x="1002" y="620"/><use href="#g120" x="1008" y="620"/><use href="#g120" x="1014" y="620"/><use href="#g120" x="1020" y="620"/></g>
<rect x="298" y="626" width="11" height="18" fill="#E6E6D5"/>
<rect x="298" y="626" width="1" height="19" fill="#FFFFFF"/>
<rect x="299" y="644" width="10" height="1" fill="#000000"/>
<rect x="310" y="644" width="703" height="1" fill="#C0C0C0"/>
<rect x="309" y="626" width="1" height="19" fill="#C0C0C0"/>
<rect x="337" y="626" width="1" height="19" fill="#C0C0C0"/>
<rect x="400" y="626" width="1" height="19" fill="#C0C0C0"/>
<rect x="477" y="626" width="1" height="19" fill="#C0C0C0"/>
<rect x="533" y="626" width="1" height="19" fill="#C0C0C0"/>
<rect x="589" y="626" width="1" height="19" fill="#C0C0C0"/>
<rect x="645" y="626" width="1" height="19" fill="#C0C0C0"/>
<rect x="701" y="626" width="1" height="19" fill="#C0C0C0"/>
<rect x="757" y="626" width="1" height="19" fill="#C0C0C0"/>
<rect x="758" y="626" width="1" height="19" fill="#C0C0C0"/>
<rect x="825" y="626" width="1" height="19" fill="#C0C0C0"/>
<rect x="893" y="626" width="1" height="19" fill="#C0C0C0"/>
<rect x="894" y="626" width="1" height="19" fill="#C0C0C0"/>
<rect x="923" y="626" width="1" height="19" fill="#C0C0C0"/>
<rect x="924" y="626" width="1" height="19" fill="#C0C0C0"/>
<rect x="980" y="626" width="1" height="19" fill="#C0C0C0"/>
<rect x="981" y="626" width="1" height="19" fill="#C0C0C0"/>
<g fill="#000"><use href="#g100" x="313" y="639"/><use href="#g100" x="319" y="639"/></g>
<g fill="#000"><use href="#g120" x="341" y="639"/><use href="#g100" x="347" y="639"/><use href="#g191" x="353" y="639"/><use href="#g100" x="359" y="639"/><use href="#g120" x="365" y="639"/><use href="#g191" x="371" y="639"/><use href="#g107" x="377" y="639"/><use href="#g168" x="383" y="639"/><use href="#g106" x="389" y="639"/></g>
<g fill="#000"><use href="#g106" x="404" y="639"/><use href="#g191" x="410" y="639"/><use href="#g107" x="416" y="639"/><use href="#g151" x="422" y="640"/><use href="#g229" x="434" y="640"/><use href="#g230" x="446" y="640"/><use href="#g219" x="458" y="640"/></g>
<g fill="#000"><use href="#g115" x="537" y="639"/><use href="#g191" x="543" y="639"/><use href="#g120" x="549" y="639"/><use href="#g120" x="555" y="639"/><use href="#g120" x="561" y="639"/></g>
<g fill="#000"><use href="#g191" x="593" y="639"/><use href="#g120" x="599" y="639"/><use href="#g120" x="605" y="639"/><use href="#g120" x="611" y="639"/></g>
<g fill="#000"><use href="#g115" x="649" y="639"/><use href="#g191" x="655" y="639"/><use href="#g120" x="661" y="639"/><use href="#g120" x="667" y="639"/><use href="#g120" x="673" y="639"/></g>
<g fill="#000"><use href="#g106" x="705" y="639"/><use href="#g120" x="711" y="639"/><use href="#g120" x="717" y="639"/><use href="#g108" x="723" y="639"/><use href="#g120" x="729" y="639"/><use href="#g137" x="735" y="639"/><use href="#g100" x="741" y="639"/><use href="#g106" x="747" y="639"/></g>
<g fill="#000"><use href="#g106" x="761" y="639"/><use href="#g120" x="767" y="639"/><use href="#g120" x="773" y="639"/><use href="#g108" x="779" y="639"/><use href="#g136" x="785" y="639"/><use href="#g120" x="791" y="639"/><use href="#g137" x="797" y="639"/><use href="#g136" x="803" y="639"/><use href="#g100" x="809" y="639"/><use href="#g106" x="815" y="639"/></g>
<g fill="#000"><use href="#g106" x="829" y="639"/><use href="#g120" x="835" y="639"/><use href="#g120" x="841" y="639"/><use href="#g137" x="847" y="639"/><use href="#g136" x="853" y="639"/><use href="#g120" x="859" y="639"/><use href="#g137" x="865" y="639"/><use href="#g136" x="871" y="639"/><use href="#g120" x="877" y="639"/><use href="#g169" x="883" y="639"/></g>
<g fill="#000"><use href="#g206" x="897" y="640"/></g>
<g fill="#000"><use href="#g107" x="984" y="639"/><use href="#g191" x="990" y="639"/><use href="#g120" x="996" y="639"/><use href="#g120" x="1002" y="639"/><use href="#g120" x="1008" y="639"/></g>
<rect x="298" y="645" width="11" height="18" fill="#E6E6D5"/>
<rect x="298" y="645" width="1" height="19" fill="#FFFFFF"/>
<rect x="299" y="663" width="10" height="1" fill="#000000"/>
<rect x="310" y="663" width="703" height="1" fill="#C0C0C0"/>
<rect x="309" y="645" width="1" height="19" fill="#C0C0C0"/>
<rect x="337" y="645" width="1" height="19" fill="#C0C0C0"/>
<rect x="400" y="645" width="1" height="19" fill="#C0C0C0"/>
<rect x="477" y="645" width="1" height="19" fill="#C0C0C0"/>
<rect x="533" y="645" width="1" height="19" fill="#C0C0C0"/>
<rect x="589" y="645" width="1" height="19" fill="#C0C0C0"/>
<rect x="645" y="645" width="1" height="19" fill="#C0C0C0"/>
<rect x="701" y="645" width="1" height="19" fill="#C0C0C0"/>
<rect x="757" y="645" width="1" height="19" fill="#C0C0C0"/>
<rect x="758" y="645" width="1" height="19" fill="#C0C0C0"/>
<rect x="825" y="645" width="1" height="19" fill="#C0C0C0"/>
<rect x="893" y="645" width="1" height="19" fill="#C0C0C0"/>
<rect x="894" y="645" width="1" height="19" fill="#C0C0C0"/>
<rect x="923" y="645" width="1" height="19" fill="#C0C0C0"/>
<rect x="924" y="645" width="1" height="19" fill="#C0C0C0"/>
<rect x="980" y="645" width="1" height="19" fill="#C0C0C0"/>
<rect x="981" y="645" width="1" height="19" fill="#C0C0C0"/>
<rect x="478.5" y="531.5" width="54" height="16.5" fill="none" stroke="#000" stroke-width="1" stroke-dasharray="1,1"/>
</g>
<rect x="1013" y="417" width="17" height="228" fill="#FFFFFF"/>
<rect x="1013" y="417" width="6" height="228" fill="#EEEDE8"/>
<rect x="1019" y="417" width="2" height="228" fill="#FDF9EE"/>
<rect x="1029" y="417" width="1" height="228" fill="#EEEEEE"/>
<rect x="1013" y="417" width="16" height="15" rx="2.5" fill="#FFFFFF" shape-rendering="auto"/>
<rect x="1014" y="418" width="14" height="13" rx="1.5" fill="url(#sbBtn)" shape-rendering="auto"/>
<rect x="1015" y="432" width="12" height="1" fill="#8FB0E6"/>
<polyline points="1017,426 1021,422 1025,426" fill="none" stroke="#2D5B8C" stroke-width="2.3" shape-rendering="auto"/>
<rect x="1014" y="434" width="14" height="17" rx="2" fill="#FFFFFF"/>
<rect x="1014.5" y="434.5" width="13" height="16" rx="1.5" fill="#CBE5FD" stroke="#A4C2F4" stroke-width="1"/>
<rect x="1018" y="438" width="6" height="1" fill="#FFFFFF"/>
<rect x="1019" y="439" width="6" height="1" fill="#8CB6F6"/>
<rect x="1018" y="440" width="6" height="1" fill="#FFFFFF"/>
<rect x="1019" y="441" width="6" height="1" fill="#8CB6F6"/>
<rect x="1018" y="442" width="6" height="1" fill="#FFFFFF"/>
<rect x="1019" y="443" width="6" height="1" fill="#8CB6F6"/>
<rect x="1018" y="444" width="6" height="1" fill="#FFFFFF"/>
<rect x="1019" y="445" width="6" height="1" fill="#8CB6F6"/>
<rect x="297" y="416" width="727" height="1" fill="#000000"/>
</svg></body></html>
